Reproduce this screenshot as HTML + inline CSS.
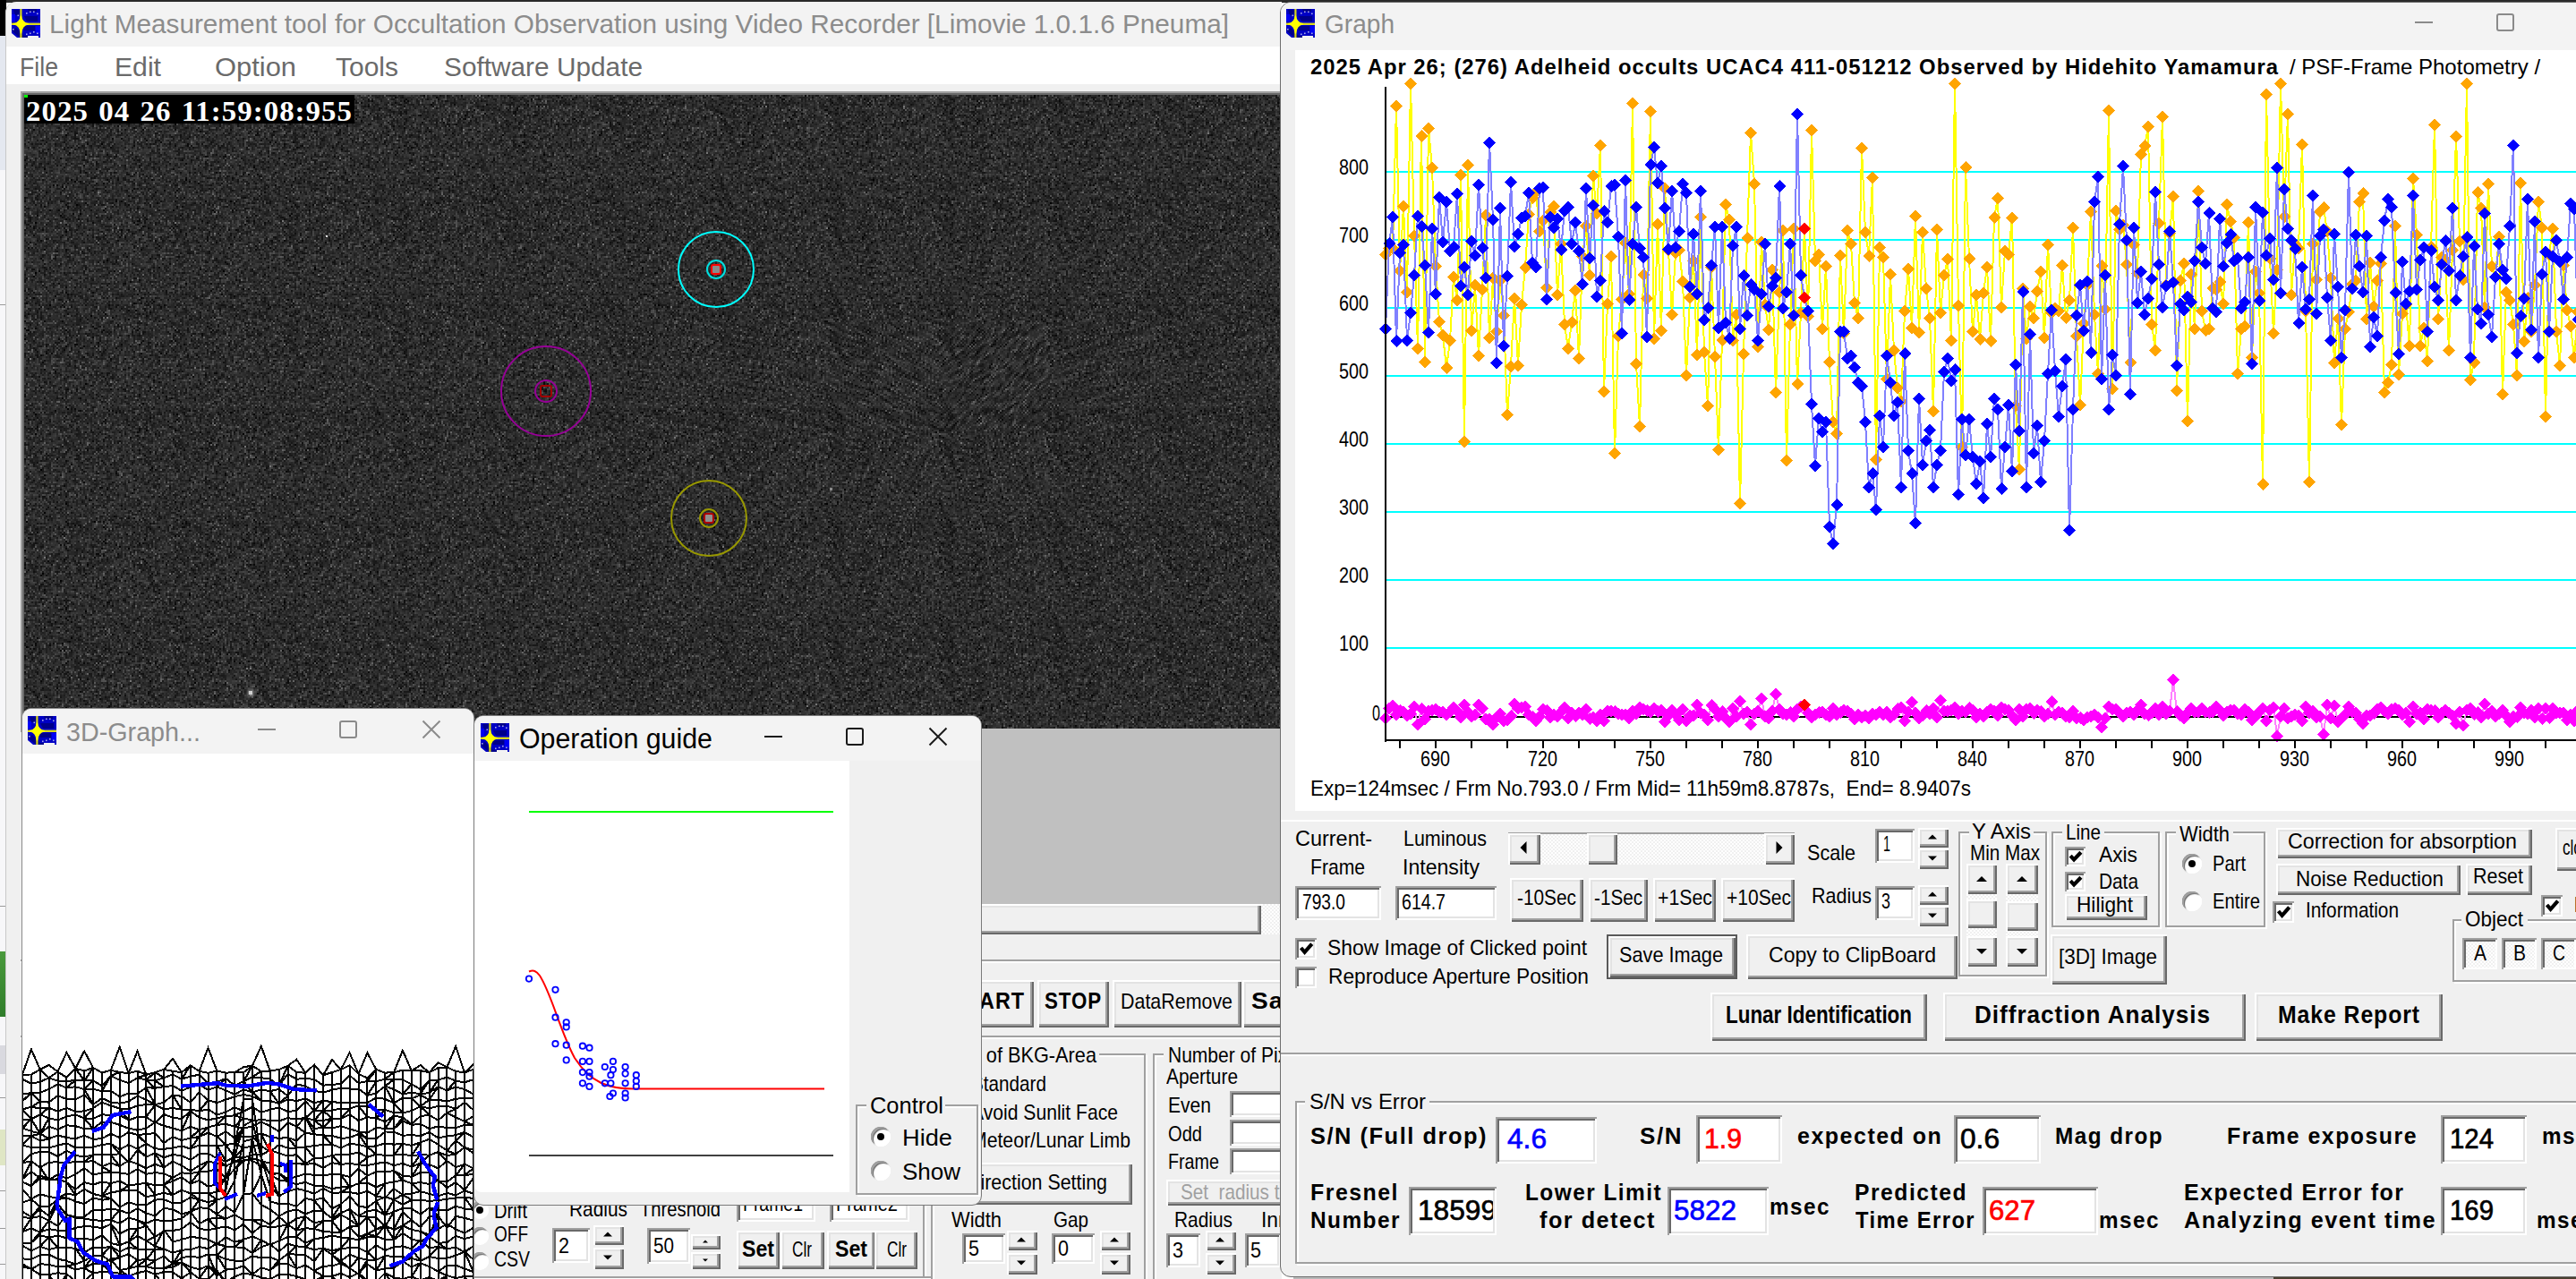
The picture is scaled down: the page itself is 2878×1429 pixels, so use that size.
<!DOCTYPE html>
<html lang="en"><head><meta charset="utf-8"><title>Limovie</title>
<style>
html,body{margin:0;padding:0}
body{width:2878px;height:1429px;overflow:hidden;position:relative;background:#fff;font-family:"Liberation Sans","Noto Sans CJK JP",sans-serif}
body *{position:absolute;box-sizing:border-box}
.t{white-space:pre;line-height:1;transform-origin:0 0;margin:0;padding:0}
.w{overflow:hidden}
</style></head>
<body>
<div style="left:0px;top:0px;width:2878px;height:3px;background:#2a2a2a;"></div>
<div style="left:0px;top:0px;width:7px;height:40px;background:#000;"></div>
<div style="left:0px;top:40px;width:7px;height:1389px;background:#f7f7f9;"></div>
<div style="left:0px;top:40px;width:7px;height:150px;background:#e4e8f0;"></div>
<div style="left:0px;top:1063px;width:6px;height:73px;background:linear-gradient(#4a9a3c,#2f7d2a);"></div>
<div style="left:0px;top:1168px;width:6px;height:32px;background:#d9d9df;"></div>
<div style="left:0px;top:1262px;width:6px;height:40px;background:#dfe6c4;"></div>
<div style="left:0px;top:340px;width:6px;height:1px;background:#9a9a9a;"></div>
<div style="left:0px;top:1012px;width:6px;height:1px;background:#9a9a9a;"></div>
<div style="left:0px;top:1226px;width:6px;height:1px;background:#9a9a9a;"></div>
<div style="left:0px;top:1330px;width:6px;height:1px;background:#9a9a9a;"></div>
<div style="left:0px;top:1372px;width:6px;height:1px;background:#9a9a9a;"></div>
<div style="left:0px;top:1412px;width:6px;height:1px;background:#9a9a9a;"></div>
<div style="left:6px;top:2px;width:1426px;height:1438px;background:#f0f0f0;border-radius:12px 0 0 0;border-left:1px solid #c8c8c8;"></div>
<div style="left:7px;top:3px;width:1425px;height:49px;background:#f3f3f3;border-radius:12px 0 0 0;"></div>
<div style="left:7px;top:52px;width:1425px;height:42px;background:#fff;"></div>
<svg style="left:13px;top:10px" width="32" height="32" viewBox="0 0 32 32"><rect width="32" height="32" fill="#0000c4"/><path d="M18 0h10v3h-9zM2 1h8l-2 6h-4zM14 8h15v6h-12zM0 24l9 8h14v-2h-9l-9-9zM12 19h14v5h-12z" fill="#00008a"/><path d="M0 6h4v8h-4zM27 19h5v8h-5z" fill="#0000f4"/><rect x="9.3" y="0" width="2.2" height="32" fill="#d4d418"/><rect x="0" y="15.6" width="32" height="2.4" fill="#d8d81c"/><path d="M10.4 8 Q11.3 15.4 18.5 16.8 Q11.3 18.2 10.4 27 Q9.5 18.2 2.5 16.8 Q9.5 15.4 10.4 8Z" fill="#ffff00" stroke="#ffff00" stroke-width="1.5" stroke-linejoin="round"/><g fill="#a8a8e8"><rect x="20" y="2.5" width="1.6" height="1.6"/><rect x="24" y="2.5" width="1.6" height="1.6"/><rect x="28" y="4.5" width="1.6" height="1.6"/><rect x="6.5" y="6.5" width="1.6" height="1.6"/><rect x="16" y="4" width="1.6" height="1.6"/><rect x="20" y="26.5" width="1.6" height="1.6"/><rect x="24" y="25" width="1.6" height="1.6"/><rect x="28" y="26.5" width="1.6" height="1.6"/><rect x="16" y="27.5" width="1.6" height="1.6"/><rect x="1" y="22" width="1.6" height="1.6"/></g><path d="M0 27l6 5h-6zM18 30h12v2h-12z" fill="#f3f3f3"/></svg>
<span id="t0" class="t" style="left:55px;top:12.0px;font-size:30px;color:#8c8c8c;transform:scaleX(0.9908);">Light Measurement tool for Occultation Observation using Video Recorder [Limovie 1.0.1.6 Pneuma]</span>
<span id="t1" class="t" style="left:22px;top:60.2px;font-size:30px;color:#6a6a6a;transform:scaleX(0.8895);">File</span>
<span id="t2" class="t" style="left:128px;top:60.2px;font-size:30px;color:#6a6a6a;transform:scaleX(1.0057);">Edit</span>
<span id="t3" class="t" style="left:240px;top:60.2px;font-size:30px;color:#6a6a6a;transform:scaleX(1.0295);">Option</span>
<span id="t4" class="t" style="left:375px;top:60.2px;font-size:30px;color:#6a6a6a;">Tools</span>
<span id="t5" class="t" style="left:496px;top:60.2px;font-size:30px;color:#6a6a6a;transform:scaleX(0.9934);">Software Update</span>
<div style="left:23px;top:102px;width:1413px;height:716px;background:#696969;box-shadow:inset 2px 2px 0 #a0a0a0;"></div>
<svg style="left:27px;top:106px" width="1408" height="708" viewBox="0 0 704 354" preserveAspectRatio="none" shape-rendering="crispEdges"><defs><pattern id="nz" width="64" height="64" patternUnits="userSpaceOnUse"><rect width="64" height="64" fill="#202020"/><g transform="translate(0 .5)" stroke-width="1" fill="none"><path d="M40 0h1M52 0h1M38 1h1M44 1h1M52 1h1M0 2h1M21 2h1M27 2h1M31 2h1M39 2h2M2 3h1M20 3h1M22 3h1M43 3h1M60 4h1M30 5h1M35 5h1M0 6h1M29 6h1M35 6h1M6 7h1M38 7h1M0 8h1M19 8h1M31 8h1M43 8h1M18 9h1M1 10h1M5 10h1M0 11h1M10 11h1M18 11h1M29 11h1M36 11h1M54 11h1M23 12h1M31 13h1M44 13h1M51 13h1M60 13h1M45 14h1M12 15h1M20 15h1M30 15h1M42 15h1M53 15h1M56 15h1M7 16h1M12 16h1M20 16h1M9 17h1M3 18h1M25 18h1M33 18h1M11 20h1M34 20h1M48 20h1M62 20h1M2 21h1M47 21h1M1 22h1M11 22h1M23 22h1M28 22h1M18 23h1M28 23h1M39 23h1M49 24h1M58 24h1M17 26h1M22 26h1M17 27h1M39 27h1M43 27h1M10 28h1M20 28h1M27 28h1M46 28h1M61 28h1M24 29h1M44 29h1M49 30h1M19 31h1M8 32h1M11 32h1M25 32h1M34 32h1M39 32h1M34 33h1M16 34h1M37 34h1M47 34h1M63 34h1M6 35h1M20 35h1M32 35h2M54 35h1M0 36h1M6 36h1M23 36h2M48 36h1M63 36h1M5 37h1M13 38h1M17 38h1M26 38h1M0 39h1M20 39h1M56 39h1M0 40h1M59 40h1M11 41h1M19 41h1M26 41h1M31 41h1M40 41h1M12 43h1M23 43h1M43 43h1M50 43h1M2 44h1M58 44h1M61 44h1M0 45h1M49 45h1M1 46h1M5 46h1M38 46h2M24 47h1M26 47h1M52 47h1M17 48h1M28 48h1M31 48h1M53 48h1M1 49h1M5 49h1M24 49h2M44 49h1M51 49h1M0 50h1M6 50h1M16 50h1M19 50h1M21 50h1M39 50h1M47 51h1M1 52h1M22 52h1M40 52h1M61 52h1M14 53h1M21 53h1M34 53h1M52 53h1M57 53h1M60 53h1M20 54h1M22 54h1M8 55h1M3 56h1M45 56h1M58 56h1M0 58h1M45 58h1M0 59h1M4 59h1M20 59h1M37 59h1M51 59h1M34 60h1M49 60h1M53 60h1M61 60h1M6 61h1M9 61h1M29 61h1M43 61h1M56 61h1M58 61h1M0 62h1M11 62h1M21 62h1M24 62h1M49 62h1M59 63h1" stroke="#020202"/><path d="M3 0h1M14 0h2M18 0h2M31 0h1M41 0h1M44 0h1M59 0h1M15 1h1M18 1h1M22 1h1M31 1h1M42 1h1M50 1h1M6 2h2M24 2h1M50 2h1M1 3h1M7 3h1M23 3h1M25 3h1M27 3h1M36 3h1M41 3h1M44 3h1M57 3h1M63 3h1M3 4h1M11 4h1M13 4h1M15 4h2M21 4h1M24 4h1M28 4h1M37 4h1M40 4h1M43 4h1M46 4h1M48 4h1M58 4h1M0 5h1M2 5h3M15 5h1M17 5h2M23 5h1M25 5h1M31 5h1M34 5h1M42 5h1M47 5h2M3 6h1M15 6h1M19 6h2M25 6h1M31 6h1M60 6h4M9 7h1M19 7h1M57 7h1M61 7h1M6 8h1M9 8h1M12 8h1M23 8h1M33 8h1M59 8h1M63 8h1M2 9h2M14 9h2M17 9h1M20 9h2M29 9h2M33 9h1M47 9h1M55 9h1M57 9h1M6 10h1M12 10h1M17 10h3M21 10h1M30 10h2M33 10h1M37 10h1M41 10h1M46 10h1M50 10h1M55 10h1M61 10h1M7 11h1M12 11h2M16 11h1M23 11h1M25 11h1M28 11h1M30 11h1M34 11h1M45 11h3M50 11h1M58 11h1M3 12h1M9 12h1M12 12h1M15 12h1M28 12h1M33 12h1M39 12h1M43 12h1M50 12h1M54 12h1M60 12h1M62 12h1M5 13h3M18 13h1M21 13h1M26 13h1M54 13h1M57 13h1M2 14h1M5 14h1M14 14h1M21 14h2M26 14h1M35 14h1M38 14h1M48 14h1M52 14h1M60 14h1M5 15h1M11 15h1M16 15h1M21 15h1M38 15h1M40 15h1M44 15h1M50 15h1M61 15h1M0 16h2M13 16h1M15 16h1M38 16h1M42 16h1M45 16h1M47 16h1M49 16h1M0 17h1M6 17h2M10 17h1M14 17h1M17 17h2M24 17h1M27 17h1M32 17h1M38 17h1M42 17h1M45 17h1M52 17h1M7 18h2M10 18h2M18 18h3M27 18h1M40 18h1M43 18h1M47 18h1M61 18h2M2 19h1M5 19h1M32 19h1M48 19h1M51 19h2M56 19h1M60 19h1M1 20h2M8 20h1M12 20h1M28 20h1M52 20h1M61 20h1M9 21h2M29 21h1M37 21h1M50 21h1M54 21h1M61 21h1M2 22h1M15 22h1M31 22h1M37 22h1M17 23h1M21 23h1M23 23h1M35 23h2M52 23h1M61 23h1M27 24h3M32 24h2M37 24h1M39 24h1M54 24h1M4 25h1M9 25h3M17 25h1M23 25h1M38 25h1M55 25h2M9 26h1M12 26h1M21 26h1M23 26h2M48 26h1M52 26h1M57 26h1M61 26h1M0 27h1M4 27h1M6 27h1M8 27h2M14 27h1M27 27h1M35 27h1M42 27h1M46 27h2M50 27h1M63 27h1M17 28h1M37 28h1M42 28h1M49 28h1M56 28h1M4 29h2M16 29h2M22 29h1M25 29h1M30 29h1M37 29h1M48 29h2M52 29h1M60 29h1M13 30h1M17 30h1M22 30h2M28 30h1M45 30h1M50 30h1M60 30h1M8 31h1M20 31h1M23 31h1M43 31h1M52 31h1M12 32h1M14 32h1M23 32h1M38 32h1M56 32h1M4 33h1M12 33h1M14 33h2M41 33h1M46 33h1M55 33h1M8 34h1M36 34h1M45 34h1M48 34h1M50 34h1M1 35h1M9 35h1M14 35h1M22 35h1M24 35h2M29 35h1M57 35h1M3 36h1M29 36h1M33 36h1M35 36h1M38 36h1M52 36h1M61 36h1M0 37h1M8 37h1M24 37h1M35 37h1M44 37h1M48 37h1M54 37h1M56 37h1M9 38h1M21 38h1M23 38h1M38 38h1M41 38h1M60 38h2M4 39h1M18 39h1M23 39h1M25 39h1M28 39h1M33 39h1M38 39h1M51 39h1M54 39h1M8 40h1M15 40h1M22 40h1M52 40h1M56 40h1M58 40h1M1 41h1M18 41h1M21 41h1M30 41h1M38 41h1M44 41h1M47 41h1M50 41h1M56 41h2M1 42h1M15 42h1M22 42h1M31 42h1M33 42h1M55 42h1M9 43h1M34 43h1M42 43h1M51 43h1M41 44h1M48 44h1M4 45h1M21 45h1M35 45h1M40 45h1M45 45h1M50 45h1M15 46h1M23 46h1M26 46h1M37 46h1M44 46h1M48 46h1M52 46h1M3 47h1M7 47h2M27 47h2M35 47h1M45 47h2M55 47h2M63 47h1M3 48h1M30 48h1M32 48h1M34 48h2M37 48h2M47 48h1M49 48h1M55 48h1M59 48h2M11 49h1M31 49h1M33 49h1M52 49h2M61 49h1M7 50h1M12 50h1M18 50h1M34 50h2M49 50h1M60 50h1M1 51h1M4 51h1M6 51h1M8 51h1M14 51h1M21 51h1M28 51h1M30 51h1M34 51h1M45 51h1M49 51h1M5 52h3M33 52h1M35 52h1M43 52h1M3 53h3M8 53h1M10 53h1M12 53h1M32 53h1M37 53h2M45 53h1M47 53h1M6 54h1M9 54h1M12 54h1M16 54h1M26 54h1M39 54h1M45 54h1M47 54h1M2 55h1M4 55h1M12 55h1M18 55h1M29 55h1M35 55h1M54 55h1M57 55h1M7 56h1M25 56h1M33 56h1M38 56h1M49 56h1M53 56h1M59 56h1M62 56h1M0 57h1M6 57h2M17 57h2M23 57h1M25 57h1M34 57h1M40 57h3M44 57h1M59 57h2M2 58h1M4 58h1M6 58h2M9 58h1M24 58h1M29 58h1M34 58h1M41 58h1M51 58h1M1 59h1M5 59h1M21 59h1M46 59h1M54 59h1M59 59h1M5 60h1M9 60h2M30 60h2M38 60h2M42 60h1M56 60h1M63 60h1M13 61h1M23 61h1M30 61h1M33 61h1M35 61h1M45 61h1M50 61h1M53 61h1M25 62h1M31 62h1M40 62h1M47 62h1M63 62h1M1 63h1M10 63h1M32 63h1M34 63h2M38 63h1M51 63h1M61 63h1M63 63h1" stroke="#121212"/><path d="M0 0h3M5 0h1M7 0h2M13 0h1M17 0h1M21 0h3M28 0h1M38 0h1M47 0h1M49 0h2M55 0h1M58 0h1M61 0h1M6 1h1M10 1h1M12 1h2M20 1h2M23 1h1M26 1h1M28 1h1M37 1h1M40 1h1M45 1h1M47 1h2M54 1h1M59 1h1M63 1h1M4 2h2M8 2h1M14 2h2M18 2h2M22 2h2M29 2h1M32 2h1M34 2h1M44 2h1M53 2h1M63 2h1M3 3h1M8 3h3M14 3h2M19 3h1M28 3h1M32 3h1M34 3h1M47 3h1M49 3h3M53 3h1M55 3h2M59 3h1M62 3h1M4 4h1M6 4h2M14 4h1M17 4h1M26 4h1M30 4h1M39 4h1M42 4h1M44 4h1M49 4h5M55 4h1M61 4h1M5 5h1M10 5h1M16 5h1M20 5h1M22 5h1M27 5h3M32 5h2M45 5h1M50 5h1M52 5h1M54 5h1M61 5h2M1 6h2M4 6h1M7 6h1M14 6h1M17 6h1M21 6h1M37 6h2M48 6h1M51 6h1M53 6h2M57 6h1M2 7h1M4 7h1M11 7h1M17 7h1M21 7h1M33 7h3M40 7h1M44 7h1M46 7h1M52 7h2M56 7h1M63 7h1M1 8h1M7 8h1M10 8h1M13 8h1M18 8h1M26 8h1M34 8h1M36 8h2M40 8h1M45 8h2M54 8h1M57 8h1M1 9h1M4 9h1M12 9h1M16 9h1M23 9h1M25 9h1M34 9h2M38 9h1M44 9h2M4 10h1M14 10h1M26 10h2M29 10h1M34 10h2M40 10h1M42 10h2M53 10h2M56 10h2M62 10h1M2 11h1M9 11h1M20 11h2M24 11h1M32 11h1M39 11h1M48 11h1M53 11h1M63 11h1M5 12h1M7 12h1M19 12h2M22 12h1M26 12h1M32 12h1M34 12h2M42 12h1M44 12h1M46 12h1M52 12h2M55 12h1M58 12h1M0 13h1M14 13h1M24 13h1M34 13h1M48 13h1M52 13h1M59 13h1M61 13h3M0 14h1M8 14h1M12 14h1M16 14h2M20 14h1M23 14h2M32 14h1M34 14h1M37 14h1M41 14h1M44 14h1M47 14h1M56 14h1M62 14h2M13 15h2M22 15h1M24 15h1M26 15h1M31 15h1M33 15h1M35 15h1M41 15h1M43 15h1M46 15h1M51 15h1M57 15h3M2 16h1M8 16h1M10 16h1M23 16h1M25 16h1M31 16h1M34 16h1M37 16h1M40 16h1M43 16h1M46 16h1M50 16h3M59 16h1M61 16h1M2 17h1M15 17h2M29 17h1M36 17h1M41 17h1M44 17h1M46 17h2M51 17h1M54 17h1M58 17h1M60 17h1M63 17h1M4 18h1M17 18h1M28 18h3M32 18h1M36 18h1M38 18h2M42 18h1M44 18h1M57 18h2M4 19h1M7 19h1M9 19h1M15 19h1M17 19h1M27 19h3M31 19h1M34 19h1M39 19h1M42 19h1M0 20h1M13 20h2M18 20h1M22 20h2M33 20h1M39 20h1M43 20h1M49 20h1M55 20h1M8 21h1M11 21h2M18 21h1M22 21h1M24 21h2M30 21h2M35 21h1M38 21h1M41 21h1M51 21h2M58 21h2M62 21h1M7 22h1M9 22h1M13 22h1M18 22h2M35 22h1M41 22h1M50 22h1M52 22h1M55 22h2M60 22h1M62 22h1M3 23h1M12 23h1M16 23h1M19 23h1M22 23h1M24 23h1M26 23h1M30 23h1M38 23h1M45 23h2M48 23h1M51 23h1M53 23h1M56 23h1M58 23h1M0 24h3M19 24h1M21 24h1M26 24h1M41 24h1M43 24h2M59 24h1M0 25h1M3 25h1M5 25h1M7 25h2M12 25h2M15 25h1M19 25h1M22 25h1M25 25h1M28 25h1M37 25h1M42 25h1M47 25h1M49 25h1M51 25h3M57 25h2M61 25h1M7 26h2M10 26h1M14 26h1M26 26h1M35 26h2M42 26h2M50 26h1M54 26h1M60 26h1M1 27h1M3 27h1M5 27h1M31 27h2M37 27h2M40 27h1M52 27h1M57 27h1M60 27h2M0 28h1M5 28h1M19 28h1M23 28h1M31 28h1M38 28h1M40 28h1M43 28h1M45 28h1M53 28h1M58 28h1M63 28h1M0 29h2M3 29h1M10 29h1M19 29h2M31 29h1M36 29h1M47 29h1M53 29h4M61 29h1M63 29h1M0 30h1M5 30h1M10 30h1M12 30h1M14 30h1M21 30h1M26 30h1M30 30h2M36 30h2M40 30h1M44 30h1M46 30h1M48 30h1M54 30h1M58 30h2M0 31h1M3 31h2M7 31h1M13 31h1M16 31h2M22 31h1M24 31h1M27 31h1M37 31h2M40 31h2M45 31h1M47 31h1M51 31h1M56 31h2M60 31h1M63 31h1M4 32h1M7 32h1M9 32h1M15 32h1M19 32h2M22 32h1M24 32h1M31 32h2M41 32h1M43 32h2M52 32h1M2 33h2M8 33h1M17 33h1M20 33h1M24 33h1M39 33h1M47 33h3M51 33h2M54 33h1M62 33h1M1 34h1M4 34h3M13 34h2M22 34h1M31 34h1M41 34h1M44 34h1M46 34h1M49 34h1M10 35h2M13 35h1M15 35h1M19 35h1M21 35h1M26 35h1M30 35h2M36 35h1M42 35h1M44 35h1M46 35h1M53 35h1M1 36h1M8 36h1M17 36h1M22 36h1M28 36h1M30 36h1M43 36h1M45 36h1M62 36h1M2 37h1M6 37h2M9 37h1M14 37h1M18 37h3M23 37h1M25 37h2M28 37h1M31 37h1M36 37h1M38 37h2M41 37h2M45 37h1M49 37h1M53 37h1M55 37h1M57 37h1M61 37h3M0 38h1M3 38h3M11 38h2M18 38h2M25 38h1M31 38h1M34 38h1M43 38h1M46 38h1M48 38h1M51 38h1M59 38h1M5 39h2M11 39h1M16 39h1M19 39h1M24 39h1M32 39h1M36 39h2M39 39h1M45 39h1M59 39h1M61 39h3M6 40h1M10 40h1M14 40h1M21 40h1M23 40h1M26 40h1M28 40h2M34 40h2M38 40h1M44 40h1M46 40h1M48 40h1M54 40h2M0 41h1M4 41h2M7 41h3M27 41h1M29 41h1M34 41h1M42 41h2M45 41h1M51 41h1M53 41h1M2 42h1M5 42h5M11 42h1M14 42h1M24 42h2M27 42h1M35 42h1M39 42h1M42 42h1M50 42h1M58 42h2M62 42h1M1 43h1M3 43h1M5 43h2M8 43h1M13 43h1M20 43h1M24 43h2M29 43h2M35 43h1M48 43h1M52 43h1M54 43h2M57 43h1M59 43h1M63 43h1M0 44h2M3 44h1M15 44h2M18 44h1M26 44h1M35 44h1M45 44h2M50 44h1M2 45h1M6 45h1M10 45h1M16 45h1M24 45h4M36 45h1M39 45h1M42 45h1M46 45h1M52 45h1M54 45h1M56 45h3M60 45h3M0 46h1M10 46h1M12 46h2M17 46h2M20 46h2M27 46h3M40 46h1M45 46h1M49 46h3M54 46h3M58 46h1M60 46h2M1 47h1M5 47h1M9 47h1M12 47h3M20 47h2M23 47h1M36 47h3M42 47h1M44 47h1M48 47h2M54 47h1M57 47h1M60 47h1M1 48h1M4 48h1M6 48h1M20 48h1M25 48h1M27 48h1M0 49h1M7 49h1M15 49h3M20 49h1M28 49h1M34 49h1M36 49h1M45 49h1M49 49h2M63 49h1M1 50h1M5 50h1M9 50h3M14 50h2M32 50h1M38 50h1M41 50h2M51 50h1M54 50h2M61 50h1M0 51h1M2 51h2M5 51h1M12 51h1M31 51h3M35 51h3M48 51h1M55 51h3M60 51h2M2 52h1M14 52h1M20 52h1M25 52h1M27 52h1M30 52h2M36 52h2M44 52h3M50 52h3M54 52h4M9 53h1M13 53h1M15 53h1M18 53h1M20 53h1M25 53h1M29 53h2M39 53h1M42 53h1M49 53h1M53 53h3M62 53h2M0 54h2M8 54h1M11 54h1M13 54h1M24 54h1M27 54h1M31 54h1M33 54h2M38 54h1M42 54h2M46 54h1M48 54h2M55 54h3M59 54h2M7 55h1M11 55h1M14 55h2M17 55h1M20 55h1M25 55h1M30 55h1M33 55h2M37 55h2M44 55h1M47 55h1M51 55h1M56 55h1M59 55h2M11 56h1M13 56h1M20 56h1M22 56h2M26 56h2M29 56h1M41 56h1M48 56h1M51 56h1M60 56h2M1 57h1M3 57h1M5 57h1M8 57h2M14 57h2M20 57h1M22 57h1M24 57h1M28 57h1M32 57h1M37 57h1M48 57h2M56 57h1M63 57h1M5 58h1M12 58h1M16 58h1M18 58h2M23 58h1M27 58h1M31 58h3M39 58h1M43 58h2M46 58h2M56 58h3M61 58h1M63 58h1M3 59h1M14 59h1M16 59h3M33 59h2M38 59h1M40 59h1M45 59h1M47 59h4M52 59h1M58 59h1M61 59h1M11 60h1M17 60h2M22 60h1M25 60h1M28 60h2M32 60h1M36 60h1M48 60h1M51 60h1M55 60h1M57 60h1M10 61h1M18 61h1M24 61h1M32 61h1M36 61h3M46 61h1M51 61h1M55 61h1M57 61h1M60 61h1M3 62h1M5 62h1M9 62h1M12 62h3M17 62h1M19 62h1M22 62h2M27 62h1M30 62h1M34 62h2M37 62h1M41 62h3M46 62h1M54 62h1M56 62h1M61 62h2M3 63h2M12 63h1M16 63h1M20 63h3M26 63h2M29 63h2M40 63h2M46 63h1M49 63h1M60 63h1" stroke="#2c2c2c"/><path d="M6 0h1M16 0h1M20 0h1M25 0h2M34 0h1M39 0h1M42 0h2M45 0h2M53 0h1M57 0h1M1 1h4M11 1h1M24 1h2M27 1h1M29 1h1M36 1h1M39 1h1M46 1h1M49 1h1M55 1h1M3 2h1M9 2h2M16 2h1M20 2h1M25 2h1M30 2h1M45 2h1M47 2h1M57 2h4M62 2h1M4 3h3M12 3h1M16 3h2M21 3h1M26 3h1M33 3h1M38 3h1M52 3h1M54 3h1M61 3h1M0 4h2M8 4h1M12 4h1M25 4h1M31 4h2M34 4h2M38 4h1M45 4h1M54 4h1M56 4h1M7 5h2M19 5h1M39 5h1M44 5h1M49 5h1M51 5h1M55 5h1M58 5h2M63 5h1M6 6h1M9 6h1M11 6h1M18 6h1M22 6h2M26 6h1M28 6h1M32 6h2M44 6h1M47 6h1M52 6h1M55 6h2M5 7h1M8 7h1M16 7h1M25 7h1M27 7h4M41 7h1M47 7h1M50 7h2M55 7h1M58 7h1M60 7h1M62 7h1M8 8h1M11 8h1M17 8h1M24 8h1M28 8h1M30 8h1M35 8h1M41 8h1M44 8h1M52 8h1M55 8h1M61 8h2M7 9h4M19 9h1M22 9h1M24 9h1M27 9h2M32 9h1M37 9h1M39 9h3M43 9h1M49 9h1M52 9h1M54 9h1M59 9h2M63 9h1M2 10h2M7 10h1M15 10h2M20 10h1M24 10h1M32 10h1M36 10h1M38 10h1M44 10h2M47 10h3M58 10h1M4 11h1M6 11h1M8 11h1M14 11h2M22 11h1M27 11h1M33 11h1M35 11h1M37 11h1M40 11h1M42 11h1M51 11h2M56 11h1M60 11h1M62 11h1M1 12h1M16 12h1M21 12h1M25 12h1M27 12h1M29 12h3M36 12h1M38 12h1M40 12h1M45 12h1M57 12h1M63 12h1M1 13h1M10 13h2M13 13h1M15 13h1M17 13h1M19 13h1M25 13h1M28 13h3M35 13h2M43 13h1M45 13h2M55 13h1M58 13h1M1 14h1M9 14h2M15 14h1M27 14h5M33 14h1M36 14h1M39 14h1M43 14h1M46 14h1M49 14h1M53 14h1M1 15h1M4 15h1M17 15h1M23 15h1M28 15h1M34 15h1M36 15h1M39 15h1M45 15h1M48 15h2M52 15h1M54 15h1M6 16h1M9 16h1M11 16h1M14 16h1M16 16h1M18 16h2M22 16h1M28 16h1M32 16h1M53 16h2M60 16h1M62 16h1M1 17h1M3 17h3M8 17h1M20 17h1M25 17h1M28 17h1M30 17h1M35 17h1M39 17h2M53 17h1M59 17h1M61 17h1M2 18h1M5 18h2M15 18h1M24 18h1M31 18h1M34 18h2M49 18h1M63 18h1M0 19h2M11 19h3M18 19h2M22 19h1M26 19h1M30 19h1M33 19h1M46 19h2M50 19h1M54 19h1M58 19h1M61 19h1M63 19h1M3 20h1M6 20h1M10 20h1M16 20h1M24 20h2M31 20h1M37 20h2M40 20h1M42 20h1M44 20h2M47 20h1M56 20h2M59 20h1M0 21h2M3 21h1M7 21h1M13 21h3M17 21h1M19 21h1M26 21h2M34 21h1M39 21h2M42 21h3M46 21h1M49 21h1M56 21h2M60 21h1M4 22h1M6 22h1M12 22h1M14 22h1M16 22h1M20 22h1M26 22h2M32 22h1M34 22h1M39 22h2M42 22h1M44 22h2M49 22h1M51 22h1M58 22h1M1 23h2M4 23h1M8 23h1M14 23h1M20 23h1M29 23h1M33 23h2M37 23h1M40 23h2M43 23h2M57 23h1M60 23h1M63 23h1M8 24h1M10 24h1M13 24h1M17 24h1M20 24h1M22 24h1M25 24h1M34 24h1M40 24h1M46 24h1M48 24h1M50 24h4M55 24h1M57 24h1M61 24h1M63 24h1M1 25h1M6 25h1M14 25h1M20 25h1M24 25h1M26 25h1M33 25h1M35 25h1M43 25h4M50 25h1M54 25h1M1 26h1M3 26h1M5 26h2M13 26h1M19 26h1M27 26h2M30 26h1M32 26h3M37 26h2M45 26h1M58 26h1M15 27h1M21 27h2M24 27h2M30 27h1M34 27h1M44 27h1M48 27h1M53 27h3M59 27h1M2 28h3M7 28h1M11 28h1M14 28h1M24 28h1M50 28h1M52 28h1M57 28h1M60 28h1M62 28h1M12 29h2M15 29h1M23 29h1M27 29h1M29 29h1M34 29h1M40 29h1M43 29h1M50 29h1M57 29h3M2 30h1M6 30h3M15 30h2M18 30h1M32 30h1M34 30h1M39 30h1M47 30h1M51 30h1M53 30h1M55 30h2M1 31h2M9 31h1M12 31h1M14 31h1M18 31h1M30 31h3M39 31h1M44 31h1M54 31h1M59 31h1M61 31h1M0 32h1M5 32h2M17 32h2M21 32h1M29 32h2M33 32h1M35 32h2M42 32h1M45 32h1M47 32h1M49 32h1M51 32h1M53 32h3M59 32h1M62 32h1M7 33h1M13 33h1M18 33h2M21 33h1M27 33h2M30 33h4M45 33h1M56 33h1M58 33h1M3 34h1M9 34h1M21 34h1M24 34h1M34 34h2M39 34h1M43 34h1M59 34h3M5 35h1M7 35h1M17 35h1M35 35h1M41 35h1M43 35h1M49 35h1M56 35h1M59 35h1M61 35h1M63 35h1M4 36h1M9 36h2M12 36h2M18 36h1M20 36h2M25 36h1M31 36h1M39 36h1M41 36h1M47 36h1M51 36h1M53 36h1M60 36h1M1 37h1M10 37h1M12 37h1M21 37h1M27 37h1M43 37h1M46 37h2M51 37h2M60 37h1M7 38h1M15 38h2M20 38h1M22 38h1M24 38h1M27 38h3M32 38h1M36 38h1M42 38h1M47 38h1M52 38h7M2 39h2M7 39h2M10 39h1M13 39h1M22 39h1M27 39h1M35 39h1M46 39h2M49 39h2M53 39h1M1 40h3M5 40h1M12 40h2M16 40h5M27 40h1M32 40h1M40 40h1M42 40h1M53 40h1M57 40h1M60 40h1M10 41h1M13 41h2M20 41h1M23 41h1M25 41h1M32 41h2M41 41h1M48 41h2M52 41h1M54 41h1M59 41h1M61 41h1M63 41h1M0 42h1M4 42h1M12 42h2M18 42h1M23 42h1M26 42h1M28 42h3M36 42h1M38 42h1M40 42h2M44 42h1M49 42h1M52 42h1M54 42h1M56 42h1M61 42h1M2 43h1M4 43h1M7 43h1M17 43h1M22 43h1M26 43h2M32 43h1M38 43h1M47 43h1M49 43h1M53 43h1M7 44h1M9 44h1M13 44h1M17 44h1M20 44h1M25 44h1M29 44h1M32 44h1M34 44h1M38 44h2M49 44h1M51 44h2M55 44h1M59 44h2M62 44h2M5 45h1M7 45h1M9 45h1M14 45h1M17 45h1M19 45h2M22 45h2M28 45h1M30 45h1M32 45h3M38 45h1M43 45h2M48 45h1M51 45h1M2 46h1M4 46h1M6 46h2M11 46h1M16 46h1M19 46h1M25 46h1M32 46h4M53 46h1M59 46h1M63 46h1M0 47h1M16 47h2M22 47h1M31 47h1M34 47h1M41 47h1M47 47h1M53 47h1M62 47h1M2 48h1M10 48h2M13 48h1M21 48h1M41 48h2M45 48h1M50 48h1M56 48h1M61 48h3M3 49h1M8 49h1M12 49h1M18 49h1M23 49h1M27 49h1M29 49h2M35 49h1M38 49h1M42 49h1M47 49h2M54 49h1M56 49h1M58 49h1M62 49h1M3 50h1M13 50h1M22 50h1M24 50h1M28 50h1M36 50h1M46 50h1M52 50h2M59 50h1M9 51h2M15 51h1M18 51h3M39 51h1M41 51h4M46 51h1M52 51h2M58 51h2M62 51h2M4 52h1M9 52h4M16 52h2M23 52h1M26 52h1M29 52h1M38 52h1M42 52h1M48 52h2M60 52h1M16 53h2M24 53h1M27 53h1M43 53h2M61 53h1M2 54h1M5 54h1M7 54h1M18 54h2M29 54h1M35 54h1M37 54h1M53 54h2M0 55h1M5 55h2M16 55h1M19 55h1M23 55h1M27 55h2M31 55h2M36 55h1M46 55h1M58 55h1M62 55h2M0 56h1M2 56h1M4 56h1M9 56h1M18 56h2M21 56h1M24 56h1M32 56h1M39 56h2M46 56h1M56 56h1M11 57h1M16 57h1M27 57h1M29 57h1M35 57h1M38 57h1M43 57h1M47 57h1M50 57h1M52 57h1M54 57h1M8 58h1M10 58h2M17 58h1M21 58h1M25 58h2M30 58h1M40 58h1M42 58h1M49 58h2M52 58h2M59 58h1M8 59h1M11 59h1M15 59h1M23 59h1M27 59h1M35 59h2M41 59h1M44 59h1M55 59h1M60 59h1M2 60h1M14 60h1M19 60h1M21 60h1M27 60h1M41 60h1M45 60h1M47 60h1M52 60h1M54 60h1M58 60h2M3 61h1M7 61h2M11 61h2M15 61h3M19 61h3M25 61h3M34 61h1M47 61h1M52 61h1M54 61h1M63 61h1M2 62h1M10 62h1M15 62h1M18 62h1M20 62h1M26 62h1M28 62h1M52 62h2M55 62h1M59 62h2M5 63h2M8 63h2M13 63h1M15 63h1M17 63h1M25 63h1M37 63h1M42 63h1M50 63h1M52 63h1M54 63h2M57 63h1M62 63h1" stroke="#3a3a3a"/><path d="M32 0h1M35 0h1M48 0h1M51 0h1M14 1h1M32 1h1M35 1h1M43 1h1M57 1h1M61 1h1M1 2h1M26 2h1M28 2h1M35 2h2M38 2h1M41 2h3M55 2h1M13 3h1M29 3h1M40 3h1M42 3h1M58 3h1M18 4h2M23 4h1M33 4h1M11 5h1M26 5h1M56 5h2M13 6h1M34 6h1M49 6h1M59 6h1M12 7h1M14 7h1M36 7h1M43 7h1M49 7h1M54 7h1M16 8h1M27 8h1M32 8h1M47 8h1M49 8h1M51 8h1M53 8h1M56 8h1M60 8h1M0 9h1M26 9h1M50 9h1M62 9h1M9 10h1M11 10h1M13 10h1M23 10h1M39 10h1M59 10h2M19 11h1M43 11h2M59 11h1M61 11h1M2 12h1M18 12h1M37 12h1M48 12h2M51 12h1M2 13h1M8 13h2M12 13h1M27 13h1M33 13h1M47 13h1M4 14h1M11 14h1M25 14h1M55 14h1M58 14h1M61 14h1M0 15h1M2 15h2M10 15h1M19 15h1M27 15h1M29 15h1M32 15h1M37 15h1M47 15h1M55 15h1M62 15h2M3 16h3M17 16h1M39 16h1M63 16h1M11 17h2M23 17h1M33 17h2M48 17h2M23 18h1M45 18h1M48 18h1M53 18h4M59 18h1M16 19h1M21 19h1M36 19h3M62 19h1M7 20h1M9 20h1M17 20h1M30 20h1M41 20h1M50 20h1M53 20h2M60 20h1M63 20h1M5 21h1M16 21h1M20 21h1M32 21h2M45 21h1M0 22h1M8 22h1M30 22h1M38 22h1M59 22h1M49 23h2M54 23h2M59 23h1M6 24h1M9 24h1M11 24h1M14 24h1M18 24h1M36 24h1M42 24h1M60 24h1M62 24h1M21 25h1M27 25h1M29 25h1M32 25h1M36 25h1M59 25h2M63 25h1M0 26h1M4 26h1M16 26h1M18 26h1M29 26h1M31 26h1M46 26h1M53 26h1M59 26h1M62 26h1M2 27h1M10 27h1M12 27h1M29 27h1M36 27h1M41 27h1M45 27h1M8 28h2M12 28h1M16 28h1M22 28h1M28 28h1M34 28h1M48 28h1M55 28h1M59 28h1M9 29h1M11 29h1M21 29h1M35 29h1M39 29h1M42 29h1M62 29h1M1 30h1M3 30h2M9 30h1M25 30h1M27 30h1M35 30h1M41 30h1M43 30h1M62 30h1M5 31h2M11 31h1M26 31h1M35 31h1M46 31h1M48 31h1M55 31h1M13 32h1M37 32h1M63 32h1M9 33h1M16 33h1M23 33h1M26 33h1M29 33h1M40 33h1M44 33h1M57 33h1M2 34h1M7 34h1M20 34h1M23 34h1M26 34h1M28 34h1M56 34h1M3 35h2M8 35h1M12 35h1M34 35h1M37 35h4M45 35h1M51 35h2M55 35h1M5 36h1M7 36h1M15 36h2M27 36h1M37 36h1M40 36h1M50 36h1M57 36h1M17 37h1M22 37h1M30 37h1M32 37h2M2 38h1M33 38h1M63 38h1M26 39h1M30 39h2M34 39h1M43 39h1M48 39h1M57 39h2M60 39h1M24 40h1M39 40h1M47 40h1M51 40h1M12 41h1M22 41h1M24 41h1M19 42h1M43 42h1M45 42h1M53 42h1M57 42h1M10 43h1M15 43h1M36 43h1M40 43h1M46 43h1M60 43h1M5 44h1M8 44h1M21 44h2M24 44h1M27 44h1M31 44h1M37 44h1M44 44h1M56 44h1M8 45h1M12 45h1M18 45h1M41 45h1M53 45h1M55 45h1M9 46h1M22 46h1M43 46h1M47 46h1M39 47h1M43 47h1M7 48h3M14 48h1M18 48h1M29 48h1M39 48h2M44 48h1M46 48h1M13 49h1M37 49h1M39 49h1M57 49h1M59 49h1M2 50h1M23 50h1M26 50h1M29 50h1M43 50h1M48 50h1M50 50h1M58 50h1M62 50h1M17 51h1M24 51h1M15 52h1M21 52h1M28 52h1M53 52h1M59 52h1M1 53h1M7 53h1M31 53h1M33 53h1M41 53h1M50 53h1M58 53h2M3 54h1M10 54h1M15 54h1M21 54h1M30 54h1M63 54h1M1 55h1M10 55h1M21 55h1M1 56h1M5 56h1M12 56h1M17 56h1M28 56h1M30 56h2M34 56h3M44 56h1M54 56h1M13 57h1M36 57h1M51 57h1M53 57h1M62 57h1M13 58h1M15 58h1M28 58h1M38 58h1M2 59h1M6 59h1M24 59h1M57 59h1M62 59h1M35 60h1M0 61h3M22 61h1M40 61h1M42 61h1M48 61h2M59 61h1M61 61h2M1 62h1M4 62h1M7 62h1M16 62h1M39 62h1M45 62h1M50 62h1M11 63h1M14 63h1M44 63h1M56 63h1M58 63h1" stroke="#505050"/><path d="M9 0h1M60 0h1M62 0h1M0 1h1M30 1h1M58 1h1M11 2h1M49 2h1M35 3h1M29 4h1M59 4h1M1 5h1M12 6h1M16 6h1M30 6h1M43 6h1M20 7h1M22 7h1M45 7h1M48 7h1M59 7h1M39 8h1M0 10h1M28 10h1M52 10h1M63 10h1M17 11h1M49 11h1M42 13h1M56 13h1M40 14h1M42 14h1M9 15h1M26 16h1M41 18h1M3 19h1M53 19h1M21 20h1M58 20h1M21 21h1M36 21h1M53 21h1M29 22h1M61 22h1M11 23h1M31 23h1M16 24h1M31 24h1M34 25h1M15 26h1M30 28h1M19 30h1M57 30h1M25 31h1M28 31h1M40 32h1M48 32h1M61 32h1M0 33h1M37 33h1M50 33h1M53 34h1M48 35h1M2 36h1M36 36h1M39 38h1M49 38h1M44 39h1M25 40h1M62 41h1M47 42h1M18 43h2M41 43h1M61 43h1M33 44h1M47 44h1M1 45h1M63 45h1M36 46h1M40 47h1M33 48h1M48 48h1M17 50h1M11 51h1M22 51h1M24 52h1M23 54h1M25 54h1M41 54h1M22 55h1M41 55h1M42 56h1M47 56h1M31 57h1M46 57h1M55 57h1M19 59h1M25 59h1M32 59h1M6 60h1M12 60h1M44 60h1M46 60h1M44 62h1M23 63h1M43 63h1" stroke="#767676"/></g></pattern><pattern id="nz2" href="#nz" width="61" height="59" patternTransform="translate(23 11)"/></defs><rect width="704" height="354" fill="url(#nz)"/><rect width="704" height="354" fill="url(#nz2)" opacity=".5"/></svg>
<div style="left:278px;top:772px;width:4px;height:4px;background:#d0d0d0;box-shadow:0 0 3px 2px rgba(200,200,200,.45);"></div>
<div style="left:364px;top:263px;width:2px;height:2px;background:#e8e8e8;"></div>
<div style="left:927px;top:545px;width:3px;height:3px;background:#8c8c8c;"></div>
<div style="left:757px;top:258px;width:86px;height:86px;border:2px solid #00ffff;border-radius:50%;"></div>
<div style="left:789px;top:290px;width:22px;height:22px;border:2px solid #00e0e0;border-radius:50%;"></div>
<div style="left:794px;top:295px;width:12px;height:12px;border:2px solid #ff0000;border-radius:3px;background:#8a8a8a;"></div>
<div style="left:559px;top:386px;width:102px;height:102px;border:2px solid #960096;border-radius:50%;"></div>
<div style="left:597px;top:424px;width:26px;height:26px;border:2px solid #960096;border-radius:50%;"></div>
<div style="left:603px;top:430px;width:14px;height:14px;border:2px solid #a00000;border-radius:3px;"></div>
<div style="left:749px;top:536px;width:86px;height:86px;border:2px solid #989800;border-radius:50%;"></div>
<div style="left:781px;top:568px;width:22px;height:22px;border:2px solid #989800;border-radius:50%;"></div>
<div style="left:786px;top:573px;width:12px;height:12px;border:2px solid #b00000;border-radius:3px;background:#909090;"></div>
<div style="left:27px;top:106px;width:369px;height:32px;background:#000;"></div>
<div style="left:27px;top:106px;width:4px;height:3px;background:#00ff00;"></div>
<span id="t6" class="t" style="left:29px;top:107.8px;font-size:32px;color:#fff;font-weight:bold;font-family:'Liberation Serif','Noto Serif CJK SC',serif;transform:scaleX(1.0276);word-spacing:2px;letter-spacing:1px;">2025 04 26 11:59:08:955</span>
<div style="left:27px;top:814px;width:1405px;height:196px;background:#c0c0c0;"></div>
<div style="left:27px;top:1010px;width:1405px;height:34px;background:repeating-conic-gradient(#fff 0 25%,#f0f0f0 0 50%) 0 0/4px 4px;"></div>
<div style="left:27px;top:1010px;width:1382px;height:34px;background:#f0f0f0;box-shadow:inset 2px 2px 0 #fff,inset -2px -2px 0 #696969,inset -4px -4px 0 #a0a0a0,inset 4px 4px 0 #e3e3e3;"></div>
<div style="left:23px;top:1072px;width:1409px;height:2px;background:#a0a0a0;"></div>
<div style="left:23px;top:1074px;width:1409px;height:2px;background:#fff;"></div>
<div style="left:1070px;top:1095px;width:85px;height:53px;background:#f0f0f0;box-shadow:inset 2px 2px 0 #fff,inset -2px -2px 0 #696969,inset -4px -4px 0 #a0a0a0,inset 4px 4px 0 #e3e3e3;"></div>
<span id="t7" class="t" style="left:1064px;top:1106.3px;font-size:25px;color:#000;font-weight:bold;transform:scaleX(0.9366);letter-spacing:1px;">START</span>
<div style="left:1159px;top:1095px;width:80px;height:53px;background:#f0f0f0;box-shadow:inset 2px 2px 0 #fff,inset -2px -2px 0 #696969,inset -4px -4px 0 #a0a0a0,inset 4px 4px 0 #e3e3e3;"></div>
<span id="t8" class="t" style="left:1167px;top:1106.3px;font-size:25px;color:#000;font-weight:bold;transform:scaleX(0.8935);letter-spacing:1px;">STOP</span>
<div style="left:1243px;top:1095px;width:144px;height:53px;background:#f0f0f0;box-shadow:inset 2px 2px 0 #fff,inset -2px -2px 0 #696969,inset -4px -4px 0 #a0a0a0,inset 4px 4px 0 #e3e3e3;"></div>
<span id="t9" class="t" style="left:1252px;top:1107.2px;font-size:24px;color:#000;transform:scaleX(0.8925);">DataRemove</span>
<div style="left:1388px;top:1095px;width:112px;height:53px;background:#f0f0f0;box-shadow:inset 2px 2px 0 #fff,inset -2px -2px 0 #696969,inset -4px -4px 0 #a0a0a0,inset 4px 4px 0 #e3e3e3;"></div>
<span id="t10" class="t" style="left:1398px;top:1106.3px;font-size:25px;color:#000;font-weight:bold;transform:scaleX(1.1220);letter-spacing:1px;">Save</span>
<div style="left:23px;top:1157px;width:1409px;height:2px;background:#a0a0a0;"></div>
<div style="left:23px;top:1159px;width:1409px;height:2px;background:#fff;"></div>
<div style="left:1040px;top:1177px;width:240px;height:263px;border:2px solid #a0a0a0;box-shadow:2px 2px 0 #fff,inset 2px 2px 0 #fff;"></div>
<div style="left:1090px;top:1168px;width:138px;height:24px;background:#f0f0f0;"></div>
<span id="t11" class="t" style="left:1010px;top:1167.1px;font-size:24px;color:#000;transform:scaleX(0.9056);">Direction of BKG-Area</span>
<span id="t12" class="t" style="left:1085px;top:1199.1px;font-size:24px;color:#000;transform:scaleX(0.8624);">Standard</span>
<span id="t13" class="t" style="left:1085px;top:1231.1px;font-size:24px;color:#000;transform:scaleX(0.8802);">Avoid Sunlit Face</span>
<span id="t14" class="t" style="left:1085px;top:1262.3px;font-size:24px;color:#000;transform:scaleX(0.8836);">Meteor/Lunar Limb</span>
<div style="left:1060px;top:1299px;width:205px;height:47px;background:#f0f0f0;box-shadow:inset 2px 2px 0 #fff,inset -2px -2px 0 #696969,inset -4px -4px 0 #a0a0a0,inset 4px 4px 0 #e3e3e3;"></div>
<span id="t15" class="t" style="left:1080px;top:1309.1px;font-size:24px;color:#000;transform:scaleX(0.8916);">Direction Setting</span>
<span id="t16" class="t" style="left:1063px;top:1351.3px;font-size:24px;color:#000;transform:scaleX(0.9127);">Width</span>
<div style="left:1075px;top:1378px;width:48px;height:34px;background:#fff;box-shadow:inset 2px 2px 0 #a0a0a0,inset -2px -2px 0 #fff,inset 4px 4px 0 #696969,inset -4px -4px 0 #e3e3e3;"></div>
<span id="t17" class="t" style="left:1082px;top:1383.1px;font-size:24px;color:#000;transform:scaleX(0.8982);">5</span>
<div style="left:1125px;top:1375px;width:34px;height:22px;background:#f0f0f0;box-shadow:inset 2px 2px 0 #fff,inset -2px -2px 0 #696969,inset -4px -4px 0 #a0a0a0,inset 4px 4px 0 #e3e3e3;"></div>
<svg style="left:1135.0px;top:1379.0px" width="12" height="12" viewBox="0 0 12 12" ><polygon points="1.0,8.5 11.0,8.5 6.0,3.5" fill="#000"/></svg>
<div style="left:1125px;top:1400px;width:34px;height:24px;background:#f0f0f0;box-shadow:inset 2px 2px 0 #fff,inset -2px -2px 0 #696969,inset -4px -4px 0 #a0a0a0,inset 4px 4px 0 #e3e3e3;"></div>
<svg style="left:1135.0px;top:1405.0px" width="12" height="12" viewBox="0 0 12 12" ><polygon points="1.0,3.5 11.0,3.5 6.0,8.5" fill="#000"/></svg>
<span id="t18" class="t" style="left:1177px;top:1351.3px;font-size:24px;color:#000;transform:scaleX(0.8595);">Gap</span>
<div style="left:1175px;top:1378px;width:48px;height:34px;background:#fff;box-shadow:inset 2px 2px 0 #a0a0a0,inset -2px -2px 0 #fff,inset 4px 4px 0 #696969,inset -4px -4px 0 #e3e3e3;"></div>
<span id="t19" class="t" style="left:1182px;top:1383.1px;font-size:24px;color:#000;transform:scaleX(0.8982);">0</span>
<div style="left:1229px;top:1375px;width:34px;height:22px;background:#f0f0f0;box-shadow:inset 2px 2px 0 #fff,inset -2px -2px 0 #696969,inset -4px -4px 0 #a0a0a0,inset 4px 4px 0 #e3e3e3;"></div>
<svg style="left:1239.0px;top:1379.0px" width="12" height="12" viewBox="0 0 12 12" ><polygon points="1.0,8.5 11.0,8.5 6.0,3.5" fill="#000"/></svg>
<div style="left:1229px;top:1400px;width:34px;height:24px;background:#f0f0f0;box-shadow:inset 2px 2px 0 #fff,inset -2px -2px 0 #696969,inset -4px -4px 0 #a0a0a0,inset 4px 4px 0 #e3e3e3;"></div>
<svg style="left:1239.0px;top:1405.0px" width="12" height="12" viewBox="0 0 12 12" ><polygon points="1.0,3.5 11.0,3.5 6.0,8.5" fill="#000"/></svg>
<div style="left:1288px;top:1177px;width:212px;height:263px;border:2px solid #a0a0a0;box-shadow:2px 2px 0 #fff,inset 2px 2px 0 #fff;"></div>
<div style="left:1300px;top:1168px;width:132px;height:24px;background:#f0f0f0;"></div>
<span id="t20" class="t" style="left:1305px;top:1167.1px;font-size:24px;color:#000;transform:scaleX(0.8756);">Number of Pixels</span>
<span id="t21" class="t" style="left:1303px;top:1190.9px;font-size:24px;color:#000;transform:scaleX(0.8690);">Aperture</span>
<span id="t22" class="t" style="left:1305px;top:1222.9px;font-size:24px;color:#000;transform:scaleX(0.8775);">Even</span>
<div style="left:1374px;top:1219px;width:106px;height:29px;background:#fff;box-shadow:inset 2px 2px 0 #a0a0a0,inset -2px -2px 0 #fff,inset 4px 4px 0 #696969,inset -4px -4px 0 #e3e3e3;"></div>
<span id="t23" class="t" style="left:1305px;top:1254.9px;font-size:24px;color:#000;transform:scaleX(0.8375);">Odd</span>
<div style="left:1374px;top:1251px;width:106px;height:29px;background:#fff;box-shadow:inset 2px 2px 0 #a0a0a0,inset -2px -2px 0 #fff,inset 4px 4px 0 #696969,inset -4px -4px 0 #e3e3e3;"></div>
<span id="t24" class="t" style="left:1305px;top:1286.1px;font-size:24px;color:#000;transform:scaleX(0.8220);">Frame</span>
<div style="left:1374px;top:1283px;width:106px;height:29px;background:#fff;box-shadow:inset 2px 2px 0 #a0a0a0,inset -2px -2px 0 #fff,inset 4px 4px 0 #696969,inset -4px -4px 0 #e3e3e3;"></div>
<div style="left:1303px;top:1318px;width:197px;height:29px;background:#f0f0f0;box-shadow:inset 2px 2px 0 #fff,inset -2px -2px 0 #696969,inset -4px -4px 0 #a0a0a0,inset 4px 4px 0 #e3e3e3;"></div>
<span id="t25" class="t" style="left:1319px;top:1319.6px;font-size:24px;color:#a0a0a0;transform:scaleX(0.8627);">Set  radius to</span>
<span id="t26" class="t" style="left:1312px;top:1351.3px;font-size:24px;color:#000;transform:scaleX(0.8699);">Radius</span>
<span id="t27" class="t" style="left:1409px;top:1351.3px;font-size:24px;color:#000;transform:scaleX(0.9506);">Inner</span>
<div style="left:1303px;top:1378px;width:38px;height:38px;background:#fff;box-shadow:inset 2px 2px 0 #a0a0a0,inset -2px -2px 0 #fff,inset 4px 4px 0 #696969,inset -4px -4px 0 #e3e3e3;"></div>
<span id="t28" class="t" style="left:1310px;top:1384.6px;font-size:24px;color:#000;transform:scaleX(0.8982);">3</span>
<div style="left:1347px;top:1375px;width:34px;height:22px;background:#f0f0f0;box-shadow:inset 2px 2px 0 #fff,inset -2px -2px 0 #696969,inset -4px -4px 0 #a0a0a0,inset 4px 4px 0 #e3e3e3;"></div>
<svg style="left:1357.0px;top:1379.0px" width="12" height="12" viewBox="0 0 12 12" ><polygon points="1.0,8.5 11.0,8.5 6.0,3.5" fill="#000"/></svg>
<div style="left:1347px;top:1400px;width:34px;height:24px;background:#f0f0f0;box-shadow:inset 2px 2px 0 #fff,inset -2px -2px 0 #696969,inset -4px -4px 0 #a0a0a0,inset 4px 4px 0 #e3e3e3;"></div>
<svg style="left:1357.0px;top:1405.0px" width="12" height="12" viewBox="0 0 12 12" ><polygon points="1.0,3.5 11.0,3.5 6.0,8.5" fill="#000"/></svg>
<div style="left:1391px;top:1378px;width:40px;height:38px;background:#fff;box-shadow:inset 2px 2px 0 #a0a0a0,inset -2px -2px 0 #fff,inset 4px 4px 0 #696969,inset -4px -4px 0 #e3e3e3;"></div>
<span id="t29" class="t" style="left:1397px;top:1384.6px;font-size:24px;color:#000;transform:scaleX(0.8982);">5</span>
<div style="left:1031px;top:1340px;width:2px;height:100px;background:#a0a0a0;"></div>
<div style="left:1033px;top:1340px;width:2px;height:100px;background:#fff;"></div>
<div style="left:530px;top:1426px;width:510px;height:2px;background:#a0a0a0;"></div>
<div style="left:530px;top:1428px;width:510px;height:2px;background:#fff;"></div>
<div style="left:526px;top:1342px;width:20px;height:20px;border-radius:50%;background:#fff;box-shadow:inset 2px 2px 0 #a0a0a0,inset -2px -2px 0 #fff,inset 3px 3px 1px #696969;"></div>
<div style="left:532px;top:1348px;width:8px;height:8px;border-radius:50%;background:#000;"></div>
<div style="left:526px;top:1371px;width:20px;height:20px;border-radius:50%;background:#fff;box-shadow:inset 2px 2px 0 #a0a0a0,inset -2px -2px 0 #fff,inset 3px 3px 1px #696969;"></div>
<div style="left:526px;top:1399px;width:20px;height:20px;border-radius:50%;background:#fff;box-shadow:inset 2px 2px 0 #a0a0a0,inset -2px -2px 0 #fff,inset 3px 3px 1px #696969;"></div>
<span id="t30" class="t" style="left:552px;top:1340.6px;font-size:24px;color:#000;transform:scaleX(0.8409);">Drift</span>
<span id="t31" class="t" style="left:552px;top:1367.1px;font-size:24px;color:#000;transform:scaleX(0.7917);">OFF</span>
<span id="t32" class="t" style="left:552px;top:1395.0px;font-size:24px;color:#000;transform:scaleX(0.8104);">CSV</span>
<span id="t33" class="t" style="left:636px;top:1339.0px;font-size:24px;color:#000;transform:scaleX(0.8699);">Radius</span>
<span id="t34" class="t" style="left:715px;top:1339.0px;font-size:24px;color:#000;transform:scaleX(0.8432);">Threshold</span>
<div style="left:617px;top:1372px;width:42px;height:39px;background:#fff;box-shadow:inset 2px 2px 0 #a0a0a0,inset -2px -2px 0 #fff,inset 4px 4px 0 #696969,inset -4px -4px 0 #e3e3e3;"></div>
<span id="t35" class="t" style="left:624px;top:1379.6px;font-size:24px;color:#000;transform:scaleX(0.8982);">2</span>
<div style="left:663px;top:1369px;width:34px;height:22px;background:#f0f0f0;box-shadow:inset 2px 2px 0 #fff,inset -2px -2px 0 #696969,inset -4px -4px 0 #a0a0a0,inset 4px 4px 0 #e3e3e3;"></div>
<svg style="left:673.0px;top:1373.0px" width="12" height="12" viewBox="0 0 12 12" ><polygon points="1.0,8.5 11.0,8.5 6.0,3.5" fill="#000"/></svg>
<div style="left:663px;top:1394px;width:34px;height:24px;background:#f0f0f0;box-shadow:inset 2px 2px 0 #fff,inset -2px -2px 0 #696969,inset -4px -4px 0 #a0a0a0,inset 4px 4px 0 #e3e3e3;"></div>
<svg style="left:673.0px;top:1399.0px" width="12" height="12" viewBox="0 0 12 12" ><polygon points="1.0,3.5 11.0,3.5 6.0,8.5" fill="#000"/></svg>
<div style="left:723px;top:1372px;width:48px;height:40px;background:#fff;box-shadow:inset 2px 2px 0 #a0a0a0,inset -2px -2px 0 #fff,inset 4px 4px 0 #696969,inset -4px -4px 0 #e3e3e3;"></div>
<span id="t36" class="t" style="left:730px;top:1379.6px;font-size:24px;color:#000;transform:scaleX(0.8613);">50</span>
<div style="left:772px;top:1379px;width:33px;height:17px;background:#f0f0f0;box-shadow:inset 2px 2px 0 #fff,inset -2px -2px 0 #696969,inset -4px -4px 0 #a0a0a0,inset 4px 4px 0 #e3e3e3;"></div>
<svg style="left:783.5px;top:1382.5px" width="8" height="8" viewBox="0 0 8 8" ><polygon points="1.0,5.5 7.0,5.5 4.0,2.5" fill="#000"/></svg>
<div style="left:772px;top:1399px;width:33px;height:19px;background:#f0f0f0;box-shadow:inset 2px 2px 0 #fff,inset -2px -2px 0 #696969,inset -4px -4px 0 #a0a0a0,inset 4px 4px 0 #e3e3e3;"></div>
<svg style="left:783.5px;top:1403.5px" width="8" height="8" viewBox="0 0 8 8" ><polygon points="1.0,2.5 7.0,2.5 4.0,5.5" fill="#000"/></svg>
<div style="left:823px;top:1320px;width:88px;height:45px;background:#fff;box-shadow:inset 2px 2px 0 #a0a0a0,inset -2px -2px 0 #fff,inset 4px 4px 0 #696969,inset -4px -4px 0 #e3e3e3;"></div>
<span id="t37" class="t" style="left:830px;top:1333.1px;font-size:24px;color:#000;transform:scaleX(0.8103);">Frame1</span>
<div style="left:927px;top:1320px;width:89px;height:45px;background:#fff;box-shadow:inset 2px 2px 0 #a0a0a0,inset -2px -2px 0 #fff,inset 4px 4px 0 #696969,inset -4px -4px 0 #e3e3e3;"></div>
<span id="t38" class="t" style="left:934px;top:1333.1px;font-size:24px;color:#000;transform:scaleX(0.8345);">Frame2</span>
<div style="left:823px;top:1375px;width:48px;height:43px;background:#f0f0f0;box-shadow:inset 2px 2px 0 #fff,inset -2px -2px 0 #696969,inset -4px -4px 0 #a0a0a0,inset 4px 4px 0 #e3e3e3;"></div>
<span id="t39" class="t" style="left:829px;top:1382.8px;font-size:25px;color:#000;font-weight:bold;transform:scaleX(0.9253);">Set</span>
<div style="left:872px;top:1375px;width:49px;height:43px;background:#f0f0f0;box-shadow:inset 2px 2px 0 #fff,inset -2px -2px 0 #696969,inset -4px -4px 0 #a0a0a0,inset 4px 4px 0 #e3e3e3;"></div>
<span id="t40" class="t" style="left:885px;top:1383.6px;font-size:24px;color:#000;transform:scaleX(0.7176);">Clr</span>
<div style="left:924px;top:1375px;width:54px;height:43px;background:#f0f0f0;box-shadow:inset 2px 2px 0 #fff,inset -2px -2px 0 #696969,inset -4px -4px 0 #a0a0a0,inset 4px 4px 0 #e3e3e3;"></div>
<span id="t41" class="t" style="left:933px;top:1382.8px;font-size:25px;color:#000;font-weight:bold;transform:scaleX(0.9253);">Set</span>
<div style="left:977px;top:1375px;width:48px;height:43px;background:#f0f0f0;box-shadow:inset 2px 2px 0 #fff,inset -2px -2px 0 #696969,inset -4px -4px 0 #a0a0a0,inset 4px 4px 0 #e3e3e3;"></div>
<span id="t42" class="t" style="left:991px;top:1383.6px;font-size:24px;color:#000;transform:scaleX(0.7176);">Clr</span>
<div style="left:24px;top:791px;width:506px;height:649px;background:#fff;border:1px solid #8a8a8a;border-radius:11px 11px 0 0;"></div>
<div style="left:25px;top:792px;width:504px;height:50px;background:#f3f3f3;border-radius:10px 10px 0 0;"></div>
<svg style="left:31px;top:800px" width="32" height="32" viewBox="0 0 32 32"><rect width="32" height="32" fill="#0000c4"/><path d="M18 0h10v3h-9zM2 1h8l-2 6h-4zM14 8h15v6h-12zM0 24l9 8h14v-2h-9l-9-9zM12 19h14v5h-12z" fill="#00008a"/><path d="M0 6h4v8h-4zM27 19h5v8h-5z" fill="#0000f4"/><rect x="9.3" y="0" width="2.2" height="32" fill="#d4d418"/><rect x="0" y="15.6" width="32" height="2.4" fill="#d8d81c"/><path d="M10.4 8 Q11.3 15.4 18.5 16.8 Q11.3 18.2 10.4 27 Q9.5 18.2 2.5 16.8 Q9.5 15.4 10.4 8Z" fill="#ffff00" stroke="#ffff00" stroke-width="1.5" stroke-linejoin="round"/><g fill="#a8a8e8"><rect x="20" y="2.5" width="1.6" height="1.6"/><rect x="24" y="2.5" width="1.6" height="1.6"/><rect x="28" y="4.5" width="1.6" height="1.6"/><rect x="6.5" y="6.5" width="1.6" height="1.6"/><rect x="16" y="4" width="1.6" height="1.6"/><rect x="20" y="26.5" width="1.6" height="1.6"/><rect x="24" y="25" width="1.6" height="1.6"/><rect x="28" y="26.5" width="1.6" height="1.6"/><rect x="16" y="27.5" width="1.6" height="1.6"/><rect x="1" y="22" width="1.6" height="1.6"/></g><path d="M0 27l6 5h-6zM18 30h12v2h-12z" fill="#f3f3f3"/></svg>
<span id="t43" class="t" style="left:74px;top:802.5px;font-size:30px;color:#8c8c8c;transform:scaleX(0.9570);">3D-Graph...</span>
<div style="left:288px;top:814px;width:20px;height:2px;background:#8a8a8a;"></div>
<div style="left:379px;top:805px;width:20px;height:20px;border:2px solid #8a8a8a;border-radius:3px;"></div>
<svg style="left:471px;top:804px" width="22" height="22" viewBox="0 0 22 22" ><path d="M1.5 1.5L20.5 20.5M20.5 1.5L1.5 20.5" stroke="#8a8a8a" stroke-width="2" fill="none"/></svg>
<svg style="left:25px;top:1150px" width="504" height="290" viewBox="0 0 504 290" shape-rendering="crispEdges"><path d="M0.0 50.6 L9.9 50.5 L19.8 45.0 L29.6 54.0 L39.5 47.4 L49.4 53.9 L59.3 43.7 L69.2 46.4 L79.1 42.9 L88.9 48.5 L98.8 45.8 L108.7 47.9 L118.6 49.2 L128.5 46.6 L138.4 50.8 L148.2 48.1 L158.1 44.9 L168.0 46.8 L177.9 48.2 L187.8 40.3 L197.6 46.8 L207.5 48.8 L217.4 46.5 L227.3 48.6 L237.2 48.2 L247.1 48.1 L256.9 40.8 L266.8 46.9 L276.7 46.5 L286.6 45.0 L296.5 40.9 L306.4 47.7 L316.2 48.9 L326.1 39.5 L336.0 51.4 L345.9 48.1 L355.8 45.0 L365.6 40.1 L375.5 49.9 L385.4 54.4 L395.3 45.0 L405.2 48.6 L415.1 48.2 L424.9 45.6 L434.8 46.3 L444.7 46.1 L454.6 48.3 L464.5 43.1 L474.4 42.4 L484.2 46.9 L494.1 48.4 L504.0 44.8 M0.0 55.9 L9.9 60.6 L19.8 58.8 L29.6 54.2 L39.5 57.7 L49.4 58.4 L59.3 56.7 L69.2 57.5 L79.1 57.4 L88.9 63.3 L98.8 52.0 L108.7 56.8 L118.6 60.1 L128.5 54.4 L138.4 56.4 L148.2 57.3 L158.1 54.2 L168.0 50.4 L177.9 55.7 L187.8 52.5 L197.6 50.8 L207.5 60.5 L217.4 59.0 L227.3 55.0 L237.2 62.7 L247.1 58.2 L256.9 53.4 L266.8 54.2 L276.7 55.6 L286.6 63.2 L296.5 50.2 L306.4 55.7 L316.2 55.0 L326.1 55.9 L336.0 62.7 L345.9 61.8 L355.8 61.1 L365.6 51.5 L375.5 60.0 L385.4 58.1 L395.3 58.2 L405.2 55.6 L415.1 55.9 L424.9 56.6 L434.8 61.3 L444.7 67.1 L454.6 56.9 L464.5 56.6 L474.4 53.6 L484.2 57.7 L494.1 59.3 L504.0 56.1 M0.0 72.6 L9.9 71.0 L19.8 70.9 L29.6 66.9 L39.5 61.3 L49.4 65.4 L59.3 64.2 L69.2 67.1 L79.1 66.9 L88.9 69.2 L98.8 68.7 L108.7 75.4 L118.6 71.5 L128.5 71.8 L138.4 65.2 L148.2 65.7 L158.1 64.2 L168.0 63.0 L177.9 68.8 L187.8 64.5 L197.6 61.7 L207.5 67.8 L217.4 64.4 L227.3 68.3 L237.2 72.8 L247.1 67.4 L256.9 70.4 L266.8 67.5 L276.7 69.2 L286.6 66.8 L296.5 74.5 L306.4 61.3 L316.2 63.6 L326.1 68.9 L336.0 70.6 L345.9 67.8 L355.8 65.7 L365.6 66.5 L375.5 66.5 L385.4 73.9 L395.3 71.3 L405.2 63.6 L415.1 67.1 L424.9 72.5 L434.8 70.5 L444.7 72.3 L454.6 71.0 L464.5 64.1 L474.4 68.5 L484.2 64.3 L494.1 67.2 L504.0 72.5 M0.0 80.3 L9.9 70.9 L19.8 80.7 L29.6 81.6 L39.5 74.2 L49.4 77.9 L59.3 78.2 L69.2 73.5 L79.1 83.9 L88.9 76.9 L98.8 81.6 L108.7 82.7 L118.6 80.8 L128.5 74.5 L138.4 78.7 L148.2 84.1 L158.1 81.8 L168.0 73.3 L177.9 74.9 L187.8 81.7 L197.6 70.4 L207.5 79.4 L217.4 82.0 L227.3 78.6 L237.2 75.2 L247.1 73.0 L256.9 74.9 L266.8 79.6 L276.7 80.0 L286.6 82.9 L296.5 78.4 L306.4 80.1 L316.2 77.4 L326.1 82.3 L336.0 79.9 L345.9 81.0 L355.8 82.1 L365.6 82.0 L375.5 81.5 L385.4 82.0 L395.3 76.4 L405.2 77.9 L415.1 82.5 L424.9 76.5 L434.8 77.3 L444.7 73.5 L454.6 78.8 L464.5 78.9 L474.4 80.4 L484.2 77.8 L494.1 76.6 L504.0 77.6 M0.0 89.4 L9.9 86.8 L19.8 88.3 L29.6 87.8 L39.5 91.6 L49.4 87.9 L59.3 91.9 L69.2 91.4 L79.1 88.1 L88.9 81.7 L98.8 85.3 L108.7 88.6 L118.6 89.2 L128.5 85.4 L138.4 84.1 L148.2 84.6 L158.1 89.2 L168.0 88.0 L177.9 89.7 L187.8 89.5 L197.6 91.4 L207.5 89.4 L217.4 95.6 L227.3 92.5 L237.2 87.2 L247.1 91.6 L256.9 86.8 L266.8 92.8 L276.7 89.8 L286.6 87.3 L296.5 92.0 L306.4 90.9 L316.2 80.5 L326.1 90.8 L336.0 90.9 L345.9 90.5 L355.8 88.5 L365.6 88.7 L375.5 85.4 L385.4 86.0 L395.3 89.9 L405.2 89.8 L415.1 93.2 L424.9 93.5 L434.8 91.0 L444.7 86.2 L454.6 88.2 L464.5 86.0 L474.4 85.5 L484.2 89.1 L494.1 81.7 L504.0 90.3 M0.0 101.1 L9.9 100.4 L19.8 95.2 L29.6 99.5 L39.5 101.4 L49.4 97.6 L59.3 95.3 L69.2 99.4 L79.1 99.8 L88.9 95.4 L98.8 95.8 L108.7 95.9 L118.6 101.5 L128.5 98.1 L138.4 97.8 L148.2 104.9 L158.1 95.0 L168.0 98.7 L177.9 100.1 L187.8 91.5 L197.6 98.5 L207.5 101.4 L217.4 99.2 L227.3 97.1 L237.2 96.3 L247.1 99.2 L256.9 101.9 L266.8 101.3 L276.7 101.7 L286.6 102.5 L296.5 99.1 L306.4 100.6 L316.2 98.8 L326.1 101.7 L336.0 101.9 L345.9 99.6 L355.8 100.2 L365.6 95.2 L375.5 102.0 L385.4 98.3 L395.3 99.1 L405.2 103.3 L415.1 96.6 L424.9 98.4 L434.8 105.9 L444.7 97.0 L454.6 95.9 L464.5 101.6 L474.4 93.4 L484.2 98.5 L494.1 102.8 L504.0 97.1 M0.0 110.6 L9.9 113.9 L19.8 116.6 L29.6 108.6 L39.5 111.9 L49.4 107.3 L59.3 108.1 L69.2 111.1 L79.1 111.2 L88.9 103.5 L98.8 103.7 L108.7 106.9 L118.6 110.6 L128.5 112.7 L138.4 110.7 L148.2 103.9 L158.1 107.9 L168.0 110.4 L177.9 113.5 L187.8 108.8 L197.6 112.3 L207.5 109.4 L217.4 106.9 L227.3 105.8 L237.2 108.9 L247.1 110.5 L256.9 108.6 L266.8 103.4 L276.7 108.1 L286.6 114.1 L296.5 104.2 L306.4 108.6 L316.2 97.8 L326.1 111.0 L336.0 109.7 L345.9 110.4 L355.8 108.1 L365.6 111.3 L375.5 114.3 L385.4 115.8 L395.3 109.8 L405.2 111.1 L415.1 111.3 L424.9 102.4 L434.8 106.8 L444.7 105.8 L454.6 111.1 L464.5 108.4 L474.4 110.1 L484.2 110.1 L494.1 106.9 L504.0 107.4 M0.0 118.8 L9.9 119.3 L19.8 124.6 L29.6 122.3 L39.5 118.5 L49.4 121.0 L59.3 122.4 L69.2 118.6 L79.1 122.9 L88.9 122.1 L98.8 116.8 L108.7 121.0 L118.6 115.0 L128.5 118.0 L138.4 117.1 L148.2 116.0 L158.1 127.1 L168.0 120.1 L177.9 124.1 L187.8 121.4 L197.6 120.1 L207.5 115.6 L217.4 119.9 L227.3 114.3 L237.2 121.6 L247.1 120.0 L256.9 119.5 L266.8 116.6 L276.7 120.0 L286.6 121.9 L296.5 120.9 L306.4 124.5 L316.2 115.6 L326.1 117.3 L336.0 118.4 L345.9 118.9 L355.8 121.8 L365.6 121.2 L375.5 117.1 L385.4 122.4 L395.3 122.4 L405.2 114.5 L415.1 114.6 L424.9 118.8 L434.8 118.0 L444.7 119.2 L454.6 115.0 L464.5 121.3 L474.4 119.5 L484.2 118.2 L494.1 115.0 L504.0 120.6 M0.0 129.4 L9.9 131.9 L19.8 132.4 L29.6 132.4 L39.5 129.9 L49.4 127.2 L59.3 132.5 L69.2 132.2 L79.1 131.6 L88.9 129.0 L98.8 127.8 L108.7 134.4 L118.6 129.0 L128.5 133.6 L138.4 127.8 L148.2 133.4 L158.1 133.8 L168.0 132.6 L177.9 130.4 L187.8 133.5 L197.6 129.5 L207.5 129.7 L217.4 129.9 L227.3 129.3 L237.2 127.3 L247.1 132.7 L256.9 130.2 L266.8 130.3 L276.7 137.1 L286.6 128.9 L296.5 132.8 L306.4 132.6 L316.2 131.7 L326.1 129.9 L336.0 129.1 L345.9 128.6 L355.8 132.5 L365.6 127.9 L375.5 128.8 L385.4 131.5 L395.3 130.3 L405.2 127.5 L415.1 128.7 L424.9 127.9 L434.8 129.8 L444.7 126.4 L454.6 122.8 L464.5 128.7 L474.4 135.6 L484.2 124.4 L494.1 132.1 L504.0 134.8 M0.0 148.6 L9.9 139.2 L19.8 136.9 L29.6 137.2 L39.5 141.9 L49.4 135.7 L59.3 140.9 L69.2 142.6 L79.1 140.4 L88.9 139.9 L98.8 140.4 L108.7 139.2 L118.6 148.0 L128.5 135.3 L138.4 142.5 L148.2 138.4 L158.1 143.3 L168.0 140.0 L177.9 141.2 L187.8 145.9 L197.6 139.3 L207.5 138.5 L217.4 144.4 L227.3 147.7 L237.2 142.8 L247.1 143.4 L256.9 140.1 L266.8 140.6 L276.7 135.1 L286.6 138.4 L296.5 141.5 L306.4 140.1 L316.2 150.4 L326.1 143.7 L336.0 143.7 L345.9 141.0 L355.8 139.5 L365.6 139.9 L375.5 137.4 L385.4 142.9 L395.3 139.6 L405.2 141.0 L415.1 140.6 L424.9 139.5 L434.8 141.6 L444.7 139.9 L454.6 140.7 L464.5 137.1 L474.4 141.0 L484.2 139.6 L494.1 131.8 L504.0 138.5 M0.0 149.2 L9.9 147.3 L19.8 154.4 L29.6 148.6 L39.5 148.4 L49.4 149.5 L59.3 147.7 L69.2 148.3 L79.1 146.9 L88.9 153.2 L98.8 149.5 L108.7 152.9 L118.6 146.8 L128.5 150.5 L138.4 155.4 L148.2 150.6 L158.1 154.4 L168.0 147.6 L177.9 152.2 L187.8 158.5 L197.6 152.3 L207.5 147.5 L217.4 149.9 L227.3 153.0 L237.2 148.0 L247.1 147.1 L256.9 144.1 L266.8 147.1 L276.7 149.6 L286.6 153.7 L296.5 150.0 L306.4 150.0 L316.2 151.0 L326.1 149.6 L336.0 155.0 L345.9 149.1 L355.8 151.0 L365.6 149.8 L375.5 151.3 L385.4 152.0 L395.3 150.1 L405.2 148.3 L415.1 152.1 L424.9 149.9 L434.8 153.6 L444.7 149.6 L454.6 150.9 L464.5 155.4 L474.4 147.0 L484.2 154.0 L494.1 150.7 L504.0 155.5 M0.0 167.4 L9.9 159.1 L19.8 166.2 L29.6 168.5 L39.5 162.1 L49.4 166.7 L59.3 162.1 L69.2 155.1 L79.1 162.8 L88.9 160.2 L98.8 159.5 L108.7 160.6 L118.6 161.8 L128.5 156.2 L138.4 161.7 L148.2 160.2 L158.1 161.0 L168.0 165.8 L177.9 160.3 L187.8 161.2 L197.6 159.2 L207.5 159.0 L217.4 155.9 L227.3 166.7 L237.2 156.1 L247.1 145.4 L256.9 146.7 L266.8 152.7 L276.7 160.4 L286.6 160.8 L296.5 167.0 L306.4 164.7 L316.2 161.6 L326.1 162.9 L336.0 163.5 L345.9 161.8 L355.8 162.3 L365.6 165.0 L375.5 155.7 L385.4 163.7 L395.3 159.2 L405.2 159.4 L415.1 158.1 L424.9 163.4 L434.8 164.8 L444.7 159.9 L454.6 160.5 L464.5 169.5 L474.4 170.4 L484.2 163.3 L494.1 162.7 L504.0 162.3 M0.0 170.4 L9.9 175.2 L19.8 162.7 L29.6 168.7 L39.5 167.3 L49.4 170.9 L59.3 179.0 L69.2 171.0 L79.1 173.7 L88.9 170.3 L98.8 172.2 L108.7 169.5 L118.6 174.8 L128.5 173.1 L138.4 171.8 L148.2 174.4 L158.1 173.4 L168.0 169.7 L177.9 165.1 L187.8 172.5 L197.6 169.0 L207.5 175.7 L217.4 173.1 L227.3 166.0 L237.2 142.0 L247.1 107.8 L256.9 102.2 L266.8 143.5 L276.7 162.6 L286.6 168.2 L296.5 169.9 L306.4 173.2 L316.2 170.9 L326.1 174.8 L336.0 174.7 L345.9 178.2 L355.8 176.3 L365.6 176.2 L375.5 172.2 L385.4 171.5 L395.3 176.4 L405.2 172.1 L415.1 170.4 L424.9 168.6 L434.8 172.1 L444.7 171.1 L454.6 173.1 L464.5 168.6 L474.4 177.2 L484.2 171.0 L494.1 179.8 L504.0 165.9 M0.0 179.0 L9.9 189.6 L19.8 184.1 L29.6 187.1 L39.5 188.4 L49.4 183.6 L59.3 185.3 L69.2 178.6 L79.1 184.0 L88.9 186.1 L98.8 182.5 L108.7 180.8 L118.6 179.4 L128.5 180.5 L138.4 187.4 L148.2 185.1 L158.1 182.9 L168.0 185.2 L177.9 179.6 L187.8 183.4 L197.6 182.5 L207.5 183.5 L217.4 181.6 L227.3 180.1 L237.2 131.1 L247.1 77.7 L256.9 78.3 L266.8 144.6 L276.7 175.1 L286.6 186.5 L296.5 181.1 L306.4 178.1 L316.2 180.1 L326.1 183.8 L336.0 177.8 L345.9 182.9 L355.8 182.4 L365.6 182.0 L375.5 183.9 L385.4 180.8 L395.3 186.5 L405.2 188.4 L415.1 178.1 L424.9 184.8 L434.8 183.5 L444.7 181.1 L454.6 183.9 L464.5 186.4 L474.4 182.9 L484.2 185.5 L494.1 180.3 L504.0 183.8 M0.0 193.6 L9.9 190.0 L19.8 198.1 L29.6 197.9 L39.5 190.1 L49.4 188.2 L59.3 192.3 L69.2 195.1 L79.1 188.3 L88.9 190.8 L98.8 189.1 L108.7 199.0 L118.6 193.1 L128.5 196.3 L138.4 196.5 L148.2 190.6 L158.1 190.1 L168.0 194.3 L177.9 193.5 L187.8 187.8 L197.6 190.4 L207.5 193.1 L217.4 190.5 L227.3 187.5 L237.2 168.7 L247.1 125.4 L256.9 122.6 L266.8 162.1 L276.7 192.1 L286.6 195.1 L296.5 194.7 L306.4 198.0 L316.2 188.8 L326.1 191.1 L336.0 188.1 L345.9 200.3 L355.8 195.5 L365.6 186.3 L375.5 197.6 L385.4 199.1 L395.3 191.9 L405.2 187.1 L415.1 190.4 L424.9 196.0 L434.8 190.7 L444.7 191.2 L454.6 191.7 L464.5 191.3 L474.4 189.7 L484.2 188.6 L494.1 187.8 L504.0 188.9 M0.0 203.6 L9.9 209.6 L19.8 201.1 L29.6 208.4 L39.5 195.0 L49.4 207.2 L59.3 209.6 L69.2 209.6 L79.1 201.7 L88.9 202.0 L98.8 200.7 L108.7 202.0 L118.6 205.8 L128.5 200.2 L138.4 205.5 L148.2 208.4 L158.1 199.8 L168.0 201.2 L177.9 206.4 L187.8 203.9 L197.6 199.4 L207.5 199.7 L217.4 206.8 L227.3 197.8 L237.2 204.7 L247.1 184.3 L256.9 183.3 L266.8 195.9 L276.7 201.4 L286.6 208.7 L296.5 203.5 L306.4 201.3 L316.2 206.3 L326.1 202.6 L336.0 203.6 L345.9 211.1 L355.8 205.2 L365.6 201.0 L375.5 208.6 L385.4 203.0 L395.3 201.9 L405.2 207.6 L415.1 203.9 L424.9 199.9 L434.8 200.5 L444.7 206.6 L454.6 199.4 L464.5 201.8 L474.4 202.6 L484.2 197.7 L494.1 200.4 L504.0 201.7 M0.0 210.0 L9.9 211.0 L19.8 208.9 L29.6 213.8 L39.5 219.8 L49.4 207.8 L59.3 210.5 L69.2 211.5 L79.1 213.3 L88.9 213.7 L98.8 213.1 L108.7 216.8 L118.6 210.6 L128.5 213.1 L138.4 216.9 L148.2 212.5 L158.1 214.6 L168.0 213.5 L177.9 211.5 L187.8 203.7 L197.6 217.3 L207.5 211.9 L217.4 210.9 L227.3 211.8 L237.2 207.2 L247.1 212.9 L256.9 212.6 L266.8 212.6 L276.7 218.2 L286.6 209.4 L296.5 217.9 L306.4 211.4 L316.2 209.1 L326.1 216.4 L336.0 214.0 L345.9 214.1 L355.8 207.2 L365.6 212.5 L375.5 219.8 L385.4 209.5 L395.3 209.7 L405.2 220.6 L415.1 223.2 L424.9 204.0 L434.8 213.1 L444.7 221.1 L454.6 209.6 L464.5 208.3 L474.4 222.0 L484.2 208.8 L494.1 210.9 L504.0 213.5 M0.0 226.4 L9.9 222.4 L19.8 226.8 L29.6 223.2 L39.5 224.7 L49.4 225.4 L59.3 221.8 L69.2 220.2 L79.1 220.6 L88.9 222.2 L98.8 217.7 L108.7 228.4 L118.6 223.6 L128.5 223.1 L138.4 219.4 L148.2 232.1 L158.1 225.4 L168.0 225.0 L177.9 223.1 L187.8 215.5 L197.6 222.9 L207.5 224.2 L217.4 222.2 L227.3 220.2 L237.2 224.4 L247.1 217.6 L256.9 228.2 L266.8 219.2 L276.7 221.2 L286.6 220.2 L296.5 218.1 L306.4 224.7 L316.2 222.3 L326.1 222.8 L336.0 226.0 L345.9 226.6 L355.8 226.7 L365.6 220.7 L375.5 232.1 L385.4 228.5 L395.3 223.5 L405.2 219.0 L415.1 224.2 L424.9 219.2 L434.8 224.0 L444.7 225.8 L454.6 229.5 L464.5 223.1 L474.4 217.5 L484.2 223.5 L494.1 227.6 L504.0 221.7 M0.0 239.3 L9.9 238.4 L19.8 230.1 L29.6 232.7 L39.5 230.6 L49.4 233.3 L59.3 234.6 L69.2 233.6 L79.1 235.4 L88.9 230.3 L98.8 239.0 L108.7 241.2 L118.6 237.3 L128.5 230.9 L138.4 236.2 L148.2 242.7 L158.1 223.7 L168.0 237.6 L177.9 234.9 L187.8 232.1 L197.6 232.8 L207.5 234.8 L217.4 240.0 L227.3 232.3 L237.2 237.8 L247.1 234.9 L256.9 231.4 L266.8 235.6 L276.7 240.8 L286.6 236.4 L296.5 232.0 L306.4 231.6 L316.2 239.0 L326.1 234.0 L336.0 233.1 L345.9 230.2 L355.8 232.7 L365.6 233.6 L375.5 235.3 L385.4 232.5 L395.3 231.3 L405.2 234.8 L415.1 235.2 L424.9 227.8 L434.8 234.4 L444.7 237.1 L454.6 231.7 L464.5 238.8 L474.4 238.2 L484.2 230.8 L494.1 234.1 L504.0 231.3 M0.0 241.7 L9.9 247.4 L19.8 242.7 L29.6 246.0 L39.5 243.8 L49.4 243.7 L59.3 244.9 L69.2 249.4 L79.1 243.5 L88.9 244.5 L98.8 242.6 L108.7 248.5 L118.6 243.9 L128.5 245.4 L138.4 246.2 L148.2 245.6 L158.1 245.5 L168.0 249.7 L177.9 246.6 L187.8 246.3 L197.6 242.9 L207.5 245.2 L217.4 239.3 L227.3 242.4 L237.2 243.4 L247.1 243.8 L256.9 249.9 L266.8 243.3 L276.7 239.9 L286.6 248.4 L296.5 239.7 L306.4 242.3 L316.2 243.5 L326.1 246.2 L336.0 244.5 L345.9 247.5 L355.8 244.7 L365.6 244.4 L375.5 244.4 L385.4 249.1 L395.3 241.2 L405.2 247.0 L415.1 243.1 L424.9 242.4 L434.8 245.4 L444.7 235.5 L454.6 244.2 L464.5 243.0 L474.4 245.5 L484.2 243.4 L494.1 249.3 L504.0 242.2 M0.0 256.4 L9.9 256.9 L19.8 252.2 L29.6 251.6 L39.5 256.6 L49.4 258.8 L59.3 262.5 L69.2 258.7 L79.1 253.2 L88.9 252.6 L98.8 259.7 L108.7 254.8 L118.6 251.1 L128.5 257.8 L138.4 257.1 L148.2 258.4 L158.1 253.5 L168.0 262.1 L177.9 255.5 L187.8 253.3 L197.6 255.2 L207.5 251.4 L217.4 252.7 L227.3 256.9 L237.2 258.7 L247.1 258.9 L256.9 253.2 L266.8 255.5 L276.7 254.6 L286.6 258.4 L296.5 250.7 L306.4 251.8 L316.2 252.2 L326.1 259.2 L336.0 245.3 L345.9 251.9 L355.8 259.0 L365.6 251.4 L375.5 255.5 L385.4 257.9 L395.3 257.8 L405.2 253.2 L415.1 253.9 L424.9 254.2 L434.8 255.8 L444.7 258.8 L454.6 254.1 L464.5 256.0 L474.4 255.8 L484.2 252.7 L494.1 248.7 L504.0 257.3 M0.0 261.8 L9.9 268.2 L19.8 262.2 L29.6 263.0 L39.5 265.3 L49.4 264.5 L59.3 268.3 L69.2 266.7 L79.1 261.8 L88.9 262.5 L98.8 256.9 L108.7 269.2 L118.6 267.1 L128.5 265.0 L138.4 265.2 L148.2 267.3 L158.1 267.0 L168.0 265.8 L177.9 260.6 L187.8 265.8 L197.6 268.2 L207.5 264.2 L217.4 275.2 L227.3 268.6 L237.2 267.8 L247.1 264.2 L256.9 274.0 L266.8 266.2 L276.7 269.4 L286.6 261.7 L296.5 262.4 L306.4 267.1 L316.2 263.6 L326.1 269.8 L336.0 264.6 L345.9 264.4 L355.8 261.4 L365.6 267.0 L375.5 273.4 L385.4 262.4 L395.3 269.4 L405.2 267.4 L415.1 266.7 L424.9 259.2 L434.8 265.6 L444.7 261.1 L454.6 265.1 L464.5 270.6 L474.4 263.7 L484.2 263.5 L494.1 267.5 L504.0 271.2 M0.0 265.1 L9.9 267.7 L19.8 274.2 L29.6 274.1 L39.5 272.2 L49.4 273.5 L59.3 281.4 L69.2 281.0 L79.1 272.7 L88.9 270.7 L98.8 271.8 L108.7 272.7 L118.6 275.8 L128.5 272.2 L138.4 269.9 L148.2 273.8 L158.1 271.1 L168.0 271.2 L177.9 278.5 L187.8 271.4 L197.6 278.7 L207.5 279.2 L217.4 269.7 L227.3 282.0 L237.2 276.5 L247.1 272.4 L256.9 274.3 L266.8 277.2 L276.7 279.3 L286.6 273.9 L296.5 273.8 L306.4 276.1 L316.2 279.5 L326.1 281.2 L336.0 275.8 L345.9 276.0 L355.8 272.7 L365.6 277.0 L375.5 272.4 L385.4 280.3 L395.3 282.3 L405.2 272.3 L415.1 277.4 L424.9 279.0 L434.8 276.3 L444.7 280.4 L454.6 277.1 L464.5 281.0 L474.4 275.1 L484.2 278.0 L494.1 276.0 L504.0 275.8 M0.0 284.5 L9.9 292.7 L19.8 285.6 L29.6 287.2 L39.5 290.6 L49.4 287.2 L59.3 284.3 L69.2 284.4 L79.1 278.6 L88.9 287.4 L98.8 285.7 L108.7 278.9 L118.6 288.4 L128.5 289.3 L138.4 287.9 L148.2 288.4 L158.1 286.3 L168.0 285.6 L177.9 289.1 L187.8 290.5 L197.6 286.4 L207.5 290.8 L217.4 289.3 L227.3 284.9 L237.2 286.5 L247.1 290.0 L256.9 291.6 L266.8 290.0 L276.7 291.8 L286.6 284.2 L296.5 283.4 L306.4 285.1 L316.2 285.0 L326.1 288.1 L336.0 285.6 L345.9 286.0 L355.8 286.0 L365.6 288.0 L375.5 290.3 L385.4 285.1 L395.3 284.7 L405.2 290.4 L415.1 287.1 L424.9 286.3 L434.8 284.3 L444.7 292.6 L454.6 291.5 L464.5 291.4 L474.4 290.9 L484.2 290.3 L494.1 283.0 L504.0 290.6 M0.0 288.5 L9.9 295.6 L19.8 294.0 L29.6 296.8 L39.5 293.3 L49.4 295.1 L59.3 293.5 L69.2 294.4 L79.1 294.2 L88.9 295.1 L98.8 292.4 L108.7 296.5 L118.6 298.6 L128.5 290.5 L138.4 298.4 L148.2 295.1 L158.1 288.6 L168.0 299.0 L177.9 297.6 L187.8 299.2 L197.6 300.1 L207.5 294.1 L217.4 297.4 L227.3 296.1 L237.2 303.1 L247.1 294.7 L256.9 299.3 L266.8 304.0 L276.7 299.3 L286.6 302.7 L296.5 290.5 L306.4 303.0 L316.2 295.5 L326.1 300.6 L336.0 299.7 L345.9 301.5 L355.8 292.0 L365.6 300.8 L375.5 299.0 L385.4 295.7 L395.3 298.0 L405.2 293.9 L415.1 299.4 L424.9 302.8 L434.8 294.9 L444.7 292.0 L454.6 294.6 L464.5 299.8 L474.4 292.1 L484.2 293.6 L494.1 298.0 L504.0 294.9 M0.0 307.1 L9.9 306.5 L19.8 304.5 L29.6 303.6 L39.5 306.7 L49.4 306.7 L59.3 316.5 L69.2 310.1 L79.1 305.2 L88.9 310.1 L98.8 305.6 L108.7 307.7 L118.6 306.7 L128.5 306.6 L138.4 301.9 L148.2 305.1 L158.1 306.8 L168.0 311.5 L177.9 305.6 L187.8 311.1 L197.6 302.2 L207.5 309.7 L217.4 309.4 L227.3 307.6 L237.2 310.8 L247.1 305.1 L256.9 305.7 L266.8 309.6 L276.7 309.0 L286.6 299.9 L296.5 302.5 L306.4 304.9 L316.2 305.9 L326.1 301.2 L336.0 308.5 L345.9 308.0 L355.8 307.5 L365.6 311.0 L375.5 310.4 L385.4 299.9 L395.3 306.4 L405.2 310.4 L415.1 307.9 L424.9 308.8 L434.8 308.6 L444.7 307.2 L454.6 312.6 L464.5 313.9 L474.4 307.8 L484.2 307.9 L494.1 311.5 L504.0 307.4 M0.0 319.6 L9.9 316.6 L19.8 318.2 L29.6 313.1 L39.5 312.0 L49.4 314.8 L59.3 317.3 L69.2 314.1 L79.1 314.5 L88.9 315.6 L98.8 314.4 L108.7 318.8 L118.6 314.3 L128.5 315.3 L138.4 315.8 L148.2 318.0 L158.1 318.9 L168.0 315.1 L177.9 319.3 L187.8 321.5 L197.6 310.9 L207.5 312.8 L217.4 320.3 L227.3 312.0 L237.2 325.2 L247.1 315.0 L256.9 314.7 L266.8 316.4 L276.7 318.1 L286.6 314.3 L296.5 315.3 L306.4 321.7 L316.2 320.1 L326.1 313.5 L336.0 314.4 L345.9 321.7 L355.8 323.0 L365.6 315.6 L375.5 320.5 L385.4 320.1 L395.3 319.3 L405.2 316.4 L415.1 325.1 L424.9 314.3 L434.8 318.7 L444.7 313.8 L454.6 321.7 L464.5 320.7 L474.4 315.4 L484.2 313.5 L494.1 317.5 L504.0 318.6 M0.0 322.5 L9.9 323.5 L19.8 326.5 L29.6 328.7 L39.5 322.8 L49.4 325.0 L59.3 329.1 L69.2 322.0 L79.1 323.4 L88.9 326.8 L98.8 325.9 L108.7 324.7 L118.6 329.5 L128.5 332.4 L138.4 323.1 L148.2 334.0 L158.1 333.6 L168.0 333.2 L177.9 325.8 L187.8 323.7 L197.6 330.2 L207.5 322.6 L217.4 321.3 L227.3 322.4 L237.2 332.7 L247.1 322.6 L256.9 318.8 L266.8 331.2 L276.7 334.0 L286.6 322.7 L296.5 325.7 L306.4 327.8 L316.2 327.9 L326.1 334.4 L336.0 331.0 L345.9 326.9 L355.8 325.9 L365.6 324.1 L375.5 324.0 L385.4 329.5 L395.3 328.0 L405.2 322.2 L415.1 333.0 L424.9 325.6 L434.8 331.0 L444.7 326.9 L454.6 320.5 L464.5 326.1 L474.4 329.4 L484.2 330.4 L494.1 333.2 L504.0 327.8 M0.0 50.6 L0.0 55.9 L0.0 72.6 L0.0 80.3 L0.0 89.4 L0.0 101.1 L0.0 110.6 L0.0 118.8 L0.0 129.4 L0.0 148.6 L0.0 149.2 L0.0 167.4 L0.0 170.4 L0.0 179.0 L0.0 193.6 L0.0 203.6 L0.0 210.0 L0.0 226.4 L0.0 239.3 L0.0 241.7 L0.0 256.4 L0.0 261.8 L0.0 265.1 L0.0 284.5 L0.0 288.5 L0.0 307.1 L0.0 319.6 L0.0 322.5 M9.9 50.5 L9.9 60.6 L9.9 71.0 L9.9 70.9 L9.9 86.8 L9.9 100.4 L9.9 113.9 L9.9 119.3 L9.9 131.9 L9.9 139.2 L9.9 147.3 L9.9 159.1 L9.9 175.2 L9.9 189.6 L9.9 190.0 L9.9 209.6 L9.9 211.0 L9.9 222.4 L9.9 238.4 L9.9 247.4 L9.9 256.9 L9.9 268.2 L9.9 267.7 L9.9 292.7 L9.9 295.6 L9.9 306.5 L9.9 316.6 L9.9 323.5 M19.8 45.0 L19.8 58.8 L19.8 70.9 L19.8 80.7 L19.8 88.3 L19.8 95.2 L19.8 116.6 L19.8 124.6 L19.8 132.4 L19.8 136.9 L19.8 154.4 L19.8 166.2 L19.8 162.7 L19.8 184.1 L19.8 198.1 L19.8 201.1 L19.8 208.9 L19.8 226.8 L19.8 230.1 L19.8 242.7 L19.8 252.2 L19.8 262.2 L19.8 274.2 L19.8 285.6 L19.8 294.0 L19.8 304.5 L19.8 318.2 L19.8 326.5 M29.6 54.0 L29.6 54.2 L29.6 66.9 L29.6 81.6 L29.6 87.8 L29.6 99.5 L29.6 108.6 L29.6 122.3 L29.6 132.4 L29.6 137.2 L29.6 148.6 L29.6 168.5 L29.6 168.7 L29.6 187.1 L29.6 197.9 L29.6 208.4 L29.6 213.8 L29.6 223.2 L29.6 232.7 L29.6 246.0 L29.6 251.6 L29.6 263.0 L29.6 274.1 L29.6 287.2 L29.6 296.8 L29.6 303.6 L29.6 313.1 L29.6 328.7 M39.5 47.4 L39.5 57.7 L39.5 61.3 L39.5 74.2 L39.5 91.6 L39.5 101.4 L39.5 111.9 L39.5 118.5 L39.5 129.9 L39.5 141.9 L39.5 148.4 L39.5 162.1 L39.5 167.3 L39.5 188.4 L39.5 190.1 L39.5 195.0 L39.5 219.8 L39.5 224.7 L39.5 230.6 L39.5 243.8 L39.5 256.6 L39.5 265.3 L39.5 272.2 L39.5 290.6 L39.5 293.3 L39.5 306.7 L39.5 312.0 L39.5 322.8 M49.4 53.9 L49.4 58.4 L49.4 65.4 L49.4 77.9 L49.4 87.9 L49.4 97.6 L49.4 107.3 L49.4 121.0 L49.4 127.2 L49.4 135.7 L49.4 149.5 L49.4 166.7 L49.4 170.9 L49.4 183.6 L49.4 188.2 L49.4 207.2 L49.4 207.8 L49.4 225.4 L49.4 233.3 L49.4 243.7 L49.4 258.8 L49.4 264.5 L49.4 273.5 L49.4 287.2 L49.4 295.1 L49.4 306.7 L49.4 314.8 L49.4 325.0 M59.3 43.7 L59.3 56.7 L59.3 64.2 L59.3 78.2 L59.3 91.9 L59.3 95.3 L59.3 108.1 L59.3 122.4 L59.3 132.5 L59.3 140.9 L59.3 147.7 L59.3 162.1 L59.3 179.0 L59.3 185.3 L59.3 192.3 L59.3 209.6 L59.3 210.5 L59.3 221.8 L59.3 234.6 L59.3 244.9 L59.3 262.5 L59.3 268.3 L59.3 281.4 L59.3 284.3 L59.3 293.5 L59.3 316.5 L59.3 317.3 L59.3 329.1 M69.2 46.4 L69.2 57.5 L69.2 67.1 L69.2 73.5 L69.2 91.4 L69.2 99.4 L69.2 111.1 L69.2 118.6 L69.2 132.2 L69.2 142.6 L69.2 148.3 L69.2 155.1 L69.2 171.0 L69.2 178.6 L69.2 195.1 L69.2 209.6 L69.2 211.5 L69.2 220.2 L69.2 233.6 L69.2 249.4 L69.2 258.7 L69.2 266.7 L69.2 281.0 L69.2 284.4 L69.2 294.4 L69.2 310.1 L69.2 314.1 L69.2 322.0 M79.1 42.9 L79.1 57.4 L79.1 66.9 L79.1 83.9 L79.1 88.1 L79.1 99.8 L79.1 111.2 L79.1 122.9 L79.1 131.6 L79.1 140.4 L79.1 146.9 L79.1 162.8 L79.1 173.7 L79.1 184.0 L79.1 188.3 L79.1 201.7 L79.1 213.3 L79.1 220.6 L79.1 235.4 L79.1 243.5 L79.1 253.2 L79.1 261.8 L79.1 272.7 L79.1 278.6 L79.1 294.2 L79.1 305.2 L79.1 314.5 L79.1 323.4 M88.9 48.5 L88.9 63.3 L88.9 69.2 L88.9 76.9 L88.9 81.7 L88.9 95.4 L88.9 103.5 L88.9 122.1 L88.9 129.0 L88.9 139.9 L88.9 153.2 L88.9 160.2 L88.9 170.3 L88.9 186.1 L88.9 190.8 L88.9 202.0 L88.9 213.7 L88.9 222.2 L88.9 230.3 L88.9 244.5 L88.9 252.6 L88.9 262.5 L88.9 270.7 L88.9 287.4 L88.9 295.1 L88.9 310.1 L88.9 315.6 L88.9 326.8 M98.8 45.8 L98.8 52.0 L98.8 68.7 L98.8 81.6 L98.8 85.3 L98.8 95.8 L98.8 103.7 L98.8 116.8 L98.8 127.8 L98.8 140.4 L98.8 149.5 L98.8 159.5 L98.8 172.2 L98.8 182.5 L98.8 189.1 L98.8 200.7 L98.8 213.1 L98.8 217.7 L98.8 239.0 L98.8 242.6 L98.8 259.7 L98.8 256.9 L98.8 271.8 L98.8 285.7 L98.8 292.4 L98.8 305.6 L98.8 314.4 L98.8 325.9 M108.7 47.9 L108.7 56.8 L108.7 75.4 L108.7 82.7 L108.7 88.6 L108.7 95.9 L108.7 106.9 L108.7 121.0 L108.7 134.4 L108.7 139.2 L108.7 152.9 L108.7 160.6 L108.7 169.5 L108.7 180.8 L108.7 199.0 L108.7 202.0 L108.7 216.8 L108.7 228.4 L108.7 241.2 L108.7 248.5 L108.7 254.8 L108.7 269.2 L108.7 272.7 L108.7 278.9 L108.7 296.5 L108.7 307.7 L108.7 318.8 L108.7 324.7 M118.6 49.2 L118.6 60.1 L118.6 71.5 L118.6 80.8 L118.6 89.2 L118.6 101.5 L118.6 110.6 L118.6 115.0 L118.6 129.0 L118.6 148.0 L118.6 146.8 L118.6 161.8 L118.6 174.8 L118.6 179.4 L118.6 193.1 L118.6 205.8 L118.6 210.6 L118.6 223.6 L118.6 237.3 L118.6 243.9 L118.6 251.1 L118.6 267.1 L118.6 275.8 L118.6 288.4 L118.6 298.6 L118.6 306.7 L118.6 314.3 L118.6 329.5 M128.5 46.6 L128.5 54.4 L128.5 71.8 L128.5 74.5 L128.5 85.4 L128.5 98.1 L128.5 112.7 L128.5 118.0 L128.5 133.6 L128.5 135.3 L128.5 150.5 L128.5 156.2 L128.5 173.1 L128.5 180.5 L128.5 196.3 L128.5 200.2 L128.5 213.1 L128.5 223.1 L128.5 230.9 L128.5 245.4 L128.5 257.8 L128.5 265.0 L128.5 272.2 L128.5 289.3 L128.5 290.5 L128.5 306.6 L128.5 315.3 L128.5 332.4 M138.4 50.8 L138.4 56.4 L138.4 65.2 L138.4 78.7 L138.4 84.1 L138.4 97.8 L138.4 110.7 L138.4 117.1 L138.4 127.8 L138.4 142.5 L138.4 155.4 L138.4 161.7 L138.4 171.8 L138.4 187.4 L138.4 196.5 L138.4 205.5 L138.4 216.9 L138.4 219.4 L138.4 236.2 L138.4 246.2 L138.4 257.1 L138.4 265.2 L138.4 269.9 L138.4 287.9 L138.4 298.4 L138.4 301.9 L138.4 315.8 L138.4 323.1 M148.2 48.1 L148.2 57.3 L148.2 65.7 L148.2 84.1 L148.2 84.6 L148.2 104.9 L148.2 103.9 L148.2 116.0 L148.2 133.4 L148.2 138.4 L148.2 150.6 L148.2 160.2 L148.2 174.4 L148.2 185.1 L148.2 190.6 L148.2 208.4 L148.2 212.5 L148.2 232.1 L148.2 242.7 L148.2 245.6 L148.2 258.4 L148.2 267.3 L148.2 273.8 L148.2 288.4 L148.2 295.1 L148.2 305.1 L148.2 318.0 L148.2 334.0 M158.1 44.9 L158.1 54.2 L158.1 64.2 L158.1 81.8 L158.1 89.2 L158.1 95.0 L158.1 107.9 L158.1 127.1 L158.1 133.8 L158.1 143.3 L158.1 154.4 L158.1 161.0 L158.1 173.4 L158.1 182.9 L158.1 190.1 L158.1 199.8 L158.1 214.6 L158.1 225.4 L158.1 223.7 L158.1 245.5 L158.1 253.5 L158.1 267.0 L158.1 271.1 L158.1 286.3 L158.1 288.6 L158.1 306.8 L158.1 318.9 L158.1 333.6 M168.0 46.8 L168.0 50.4 L168.0 63.0 L168.0 73.3 L168.0 88.0 L168.0 98.7 L168.0 110.4 L168.0 120.1 L168.0 132.6 L168.0 140.0 L168.0 147.6 L168.0 165.8 L168.0 169.7 L168.0 185.2 L168.0 194.3 L168.0 201.2 L168.0 213.5 L168.0 225.0 L168.0 237.6 L168.0 249.7 L168.0 262.1 L168.0 265.8 L168.0 271.2 L168.0 285.6 L168.0 299.0 L168.0 311.5 L168.0 315.1 L168.0 333.2 M177.9 48.2 L177.9 55.7 L177.9 68.8 L177.9 74.9 L177.9 89.7 L177.9 100.1 L177.9 113.5 L177.9 124.1 L177.9 130.4 L177.9 141.2 L177.9 152.2 L177.9 160.3 L177.9 165.1 L177.9 179.6 L177.9 193.5 L177.9 206.4 L177.9 211.5 L177.9 223.1 L177.9 234.9 L177.9 246.6 L177.9 255.5 L177.9 260.6 L177.9 278.5 L177.9 289.1 L177.9 297.6 L177.9 305.6 L177.9 319.3 L177.9 325.8 M187.8 40.3 L187.8 52.5 L187.8 64.5 L187.8 81.7 L187.8 89.5 L187.8 91.5 L187.8 108.8 L187.8 121.4 L187.8 133.5 L187.8 145.9 L187.8 158.5 L187.8 161.2 L187.8 172.5 L187.8 183.4 L187.8 187.8 L187.8 203.9 L187.8 203.7 L187.8 215.5 L187.8 232.1 L187.8 246.3 L187.8 253.3 L187.8 265.8 L187.8 271.4 L187.8 290.5 L187.8 299.2 L187.8 311.1 L187.8 321.5 L187.8 323.7 M197.6 46.8 L197.6 50.8 L197.6 61.7 L197.6 70.4 L197.6 91.4 L197.6 98.5 L197.6 112.3 L197.6 120.1 L197.6 129.5 L197.6 139.3 L197.6 152.3 L197.6 159.2 L197.6 169.0 L197.6 182.5 L197.6 190.4 L197.6 199.4 L197.6 217.3 L197.6 222.9 L197.6 232.8 L197.6 242.9 L197.6 255.2 L197.6 268.2 L197.6 278.7 L197.6 286.4 L197.6 300.1 L197.6 302.2 L197.6 310.9 L197.6 330.2 M207.5 48.8 L207.5 60.5 L207.5 67.8 L207.5 79.4 L207.5 89.4 L207.5 101.4 L207.5 109.4 L207.5 115.6 L207.5 129.7 L207.5 138.5 L207.5 147.5 L207.5 159.0 L207.5 175.7 L207.5 183.5 L207.5 193.1 L207.5 199.7 L207.5 211.9 L207.5 224.2 L207.5 234.8 L207.5 245.2 L207.5 251.4 L207.5 264.2 L207.5 279.2 L207.5 290.8 L207.5 294.1 L207.5 309.7 L207.5 312.8 L207.5 322.6 M217.4 46.5 L217.4 59.0 L217.4 64.4 L217.4 82.0 L217.4 95.6 L217.4 99.2 L217.4 106.9 L217.4 119.9 L217.4 129.9 L217.4 144.4 L217.4 149.9 L217.4 155.9 L217.4 173.1 L217.4 181.6 L217.4 190.5 L217.4 206.8 L217.4 210.9 L217.4 222.2 L217.4 240.0 L217.4 239.3 L217.4 252.7 L217.4 275.2 L217.4 269.7 L217.4 289.3 L217.4 297.4 L217.4 309.4 L217.4 320.3 L217.4 321.3 M227.3 48.6 L227.3 55.0 L227.3 68.3 L227.3 78.6 L227.3 92.5 L227.3 97.1 L227.3 105.8 L227.3 114.3 L227.3 129.3 L227.3 147.7 L227.3 153.0 L227.3 166.7 L227.3 166.0 L227.3 180.1 L227.3 187.5 L227.3 197.8 L227.3 211.8 L227.3 220.2 L227.3 232.3 L227.3 242.4 L227.3 256.9 L227.3 268.6 L227.3 282.0 L227.3 284.9 L227.3 296.1 L227.3 307.6 L227.3 312.0 L227.3 322.4 M237.2 48.2 L237.2 62.7 L237.2 72.8 L237.2 75.2 L237.2 87.2 L237.2 96.3 L237.2 108.9 L237.2 121.6 L237.2 127.3 L237.2 142.8 L237.2 148.0 L237.2 156.1 L237.2 142.0 L237.2 131.1 L237.2 168.7 L237.2 204.7 L237.2 207.2 L237.2 224.4 L237.2 237.8 L237.2 243.4 L237.2 258.7 L237.2 267.8 L237.2 276.5 L237.2 286.5 L237.2 303.1 L237.2 310.8 L237.2 325.2 L237.2 332.7 M247.1 48.1 L247.1 58.2 L247.1 67.4 L247.1 73.0 L247.1 91.6 L247.1 99.2 L247.1 110.5 L247.1 120.0 L247.1 132.7 L247.1 143.4 L247.1 147.1 L247.1 145.4 L247.1 107.8 L247.1 77.7 L247.1 125.4 L247.1 184.3 L247.1 212.9 L247.1 217.6 L247.1 234.9 L247.1 243.8 L247.1 258.9 L247.1 264.2 L247.1 272.4 L247.1 290.0 L247.1 294.7 L247.1 305.1 L247.1 315.0 L247.1 322.6 M256.9 40.8 L256.9 53.4 L256.9 70.4 L256.9 74.9 L256.9 86.8 L256.9 101.9 L256.9 108.6 L256.9 119.5 L256.9 130.2 L256.9 140.1 L256.9 144.1 L256.9 146.7 L256.9 102.2 L256.9 78.3 L256.9 122.6 L256.9 183.3 L256.9 212.6 L256.9 228.2 L256.9 231.4 L256.9 249.9 L256.9 253.2 L256.9 274.0 L256.9 274.3 L256.9 291.6 L256.9 299.3 L256.9 305.7 L256.9 314.7 L256.9 318.8 M266.8 46.9 L266.8 54.2 L266.8 67.5 L266.8 79.6 L266.8 92.8 L266.8 101.3 L266.8 103.4 L266.8 116.6 L266.8 130.3 L266.8 140.6 L266.8 147.1 L266.8 152.7 L266.8 143.5 L266.8 144.6 L266.8 162.1 L266.8 195.9 L266.8 212.6 L266.8 219.2 L266.8 235.6 L266.8 243.3 L266.8 255.5 L266.8 266.2 L266.8 277.2 L266.8 290.0 L266.8 304.0 L266.8 309.6 L266.8 316.4 L266.8 331.2 M276.7 46.5 L276.7 55.6 L276.7 69.2 L276.7 80.0 L276.7 89.8 L276.7 101.7 L276.7 108.1 L276.7 120.0 L276.7 137.1 L276.7 135.1 L276.7 149.6 L276.7 160.4 L276.7 162.6 L276.7 175.1 L276.7 192.1 L276.7 201.4 L276.7 218.2 L276.7 221.2 L276.7 240.8 L276.7 239.9 L276.7 254.6 L276.7 269.4 L276.7 279.3 L276.7 291.8 L276.7 299.3 L276.7 309.0 L276.7 318.1 L276.7 334.0 M286.6 45.0 L286.6 63.2 L286.6 66.8 L286.6 82.9 L286.6 87.3 L286.6 102.5 L286.6 114.1 L286.6 121.9 L286.6 128.9 L286.6 138.4 L286.6 153.7 L286.6 160.8 L286.6 168.2 L286.6 186.5 L286.6 195.1 L286.6 208.7 L286.6 209.4 L286.6 220.2 L286.6 236.4 L286.6 248.4 L286.6 258.4 L286.6 261.7 L286.6 273.9 L286.6 284.2 L286.6 302.7 L286.6 299.9 L286.6 314.3 L286.6 322.7 M296.5 40.9 L296.5 50.2 L296.5 74.5 L296.5 78.4 L296.5 92.0 L296.5 99.1 L296.5 104.2 L296.5 120.9 L296.5 132.8 L296.5 141.5 L296.5 150.0 L296.5 167.0 L296.5 169.9 L296.5 181.1 L296.5 194.7 L296.5 203.5 L296.5 217.9 L296.5 218.1 L296.5 232.0 L296.5 239.7 L296.5 250.7 L296.5 262.4 L296.5 273.8 L296.5 283.4 L296.5 290.5 L296.5 302.5 L296.5 315.3 L296.5 325.7 M306.4 47.7 L306.4 55.7 L306.4 61.3 L306.4 80.1 L306.4 90.9 L306.4 100.6 L306.4 108.6 L306.4 124.5 L306.4 132.6 L306.4 140.1 L306.4 150.0 L306.4 164.7 L306.4 173.2 L306.4 178.1 L306.4 198.0 L306.4 201.3 L306.4 211.4 L306.4 224.7 L306.4 231.6 L306.4 242.3 L306.4 251.8 L306.4 267.1 L306.4 276.1 L306.4 285.1 L306.4 303.0 L306.4 304.9 L306.4 321.7 L306.4 327.8 M316.2 48.9 L316.2 55.0 L316.2 63.6 L316.2 77.4 L316.2 80.5 L316.2 98.8 L316.2 97.8 L316.2 115.6 L316.2 131.7 L316.2 150.4 L316.2 151.0 L316.2 161.6 L316.2 170.9 L316.2 180.1 L316.2 188.8 L316.2 206.3 L316.2 209.1 L316.2 222.3 L316.2 239.0 L316.2 243.5 L316.2 252.2 L316.2 263.6 L316.2 279.5 L316.2 285.0 L316.2 295.5 L316.2 305.9 L316.2 320.1 L316.2 327.9 M326.1 39.5 L326.1 55.9 L326.1 68.9 L326.1 82.3 L326.1 90.8 L326.1 101.7 L326.1 111.0 L326.1 117.3 L326.1 129.9 L326.1 143.7 L326.1 149.6 L326.1 162.9 L326.1 174.8 L326.1 183.8 L326.1 191.1 L326.1 202.6 L326.1 216.4 L326.1 222.8 L326.1 234.0 L326.1 246.2 L326.1 259.2 L326.1 269.8 L326.1 281.2 L326.1 288.1 L326.1 300.6 L326.1 301.2 L326.1 313.5 L326.1 334.4 M336.0 51.4 L336.0 62.7 L336.0 70.6 L336.0 79.9 L336.0 90.9 L336.0 101.9 L336.0 109.7 L336.0 118.4 L336.0 129.1 L336.0 143.7 L336.0 155.0 L336.0 163.5 L336.0 174.7 L336.0 177.8 L336.0 188.1 L336.0 203.6 L336.0 214.0 L336.0 226.0 L336.0 233.1 L336.0 244.5 L336.0 245.3 L336.0 264.6 L336.0 275.8 L336.0 285.6 L336.0 299.7 L336.0 308.5 L336.0 314.4 L336.0 331.0 M345.9 48.1 L345.9 61.8 L345.9 67.8 L345.9 81.0 L345.9 90.5 L345.9 99.6 L345.9 110.4 L345.9 118.9 L345.9 128.6 L345.9 141.0 L345.9 149.1 L345.9 161.8 L345.9 178.2 L345.9 182.9 L345.9 200.3 L345.9 211.1 L345.9 214.1 L345.9 226.6 L345.9 230.2 L345.9 247.5 L345.9 251.9 L345.9 264.4 L345.9 276.0 L345.9 286.0 L345.9 301.5 L345.9 308.0 L345.9 321.7 L345.9 326.9 M355.8 45.0 L355.8 61.1 L355.8 65.7 L355.8 82.1 L355.8 88.5 L355.8 100.2 L355.8 108.1 L355.8 121.8 L355.8 132.5 L355.8 139.5 L355.8 151.0 L355.8 162.3 L355.8 176.3 L355.8 182.4 L355.8 195.5 L355.8 205.2 L355.8 207.2 L355.8 226.7 L355.8 232.7 L355.8 244.7 L355.8 259.0 L355.8 261.4 L355.8 272.7 L355.8 286.0 L355.8 292.0 L355.8 307.5 L355.8 323.0 L355.8 325.9 M365.6 40.1 L365.6 51.5 L365.6 66.5 L365.6 82.0 L365.6 88.7 L365.6 95.2 L365.6 111.3 L365.6 121.2 L365.6 127.9 L365.6 139.9 L365.6 149.8 L365.6 165.0 L365.6 176.2 L365.6 182.0 L365.6 186.3 L365.6 201.0 L365.6 212.5 L365.6 220.7 L365.6 233.6 L365.6 244.4 L365.6 251.4 L365.6 267.0 L365.6 277.0 L365.6 288.0 L365.6 300.8 L365.6 311.0 L365.6 315.6 L365.6 324.1 M375.5 49.9 L375.5 60.0 L375.5 66.5 L375.5 81.5 L375.5 85.4 L375.5 102.0 L375.5 114.3 L375.5 117.1 L375.5 128.8 L375.5 137.4 L375.5 151.3 L375.5 155.7 L375.5 172.2 L375.5 183.9 L375.5 197.6 L375.5 208.6 L375.5 219.8 L375.5 232.1 L375.5 235.3 L375.5 244.4 L375.5 255.5 L375.5 273.4 L375.5 272.4 L375.5 290.3 L375.5 299.0 L375.5 310.4 L375.5 320.5 L375.5 324.0 M385.4 54.4 L385.4 58.1 L385.4 73.9 L385.4 82.0 L385.4 86.0 L385.4 98.3 L385.4 115.8 L385.4 122.4 L385.4 131.5 L385.4 142.9 L385.4 152.0 L385.4 163.7 L385.4 171.5 L385.4 180.8 L385.4 199.1 L385.4 203.0 L385.4 209.5 L385.4 228.5 L385.4 232.5 L385.4 249.1 L385.4 257.9 L385.4 262.4 L385.4 280.3 L385.4 285.1 L385.4 295.7 L385.4 299.9 L385.4 320.1 L385.4 329.5 M395.3 45.0 L395.3 58.2 L395.3 71.3 L395.3 76.4 L395.3 89.9 L395.3 99.1 L395.3 109.8 L395.3 122.4 L395.3 130.3 L395.3 139.6 L395.3 150.1 L395.3 159.2 L395.3 176.4 L395.3 186.5 L395.3 191.9 L395.3 201.9 L395.3 209.7 L395.3 223.5 L395.3 231.3 L395.3 241.2 L395.3 257.8 L395.3 269.4 L395.3 282.3 L395.3 284.7 L395.3 298.0 L395.3 306.4 L395.3 319.3 L395.3 328.0 M405.2 48.6 L405.2 55.6 L405.2 63.6 L405.2 77.9 L405.2 89.8 L405.2 103.3 L405.2 111.1 L405.2 114.5 L405.2 127.5 L405.2 141.0 L405.2 148.3 L405.2 159.4 L405.2 172.1 L405.2 188.4 L405.2 187.1 L405.2 207.6 L405.2 220.6 L405.2 219.0 L405.2 234.8 L405.2 247.0 L405.2 253.2 L405.2 267.4 L405.2 272.3 L405.2 290.4 L405.2 293.9 L405.2 310.4 L405.2 316.4 L405.2 322.2 M415.1 48.2 L415.1 55.9 L415.1 67.1 L415.1 82.5 L415.1 93.2 L415.1 96.6 L415.1 111.3 L415.1 114.6 L415.1 128.7 L415.1 140.6 L415.1 152.1 L415.1 158.1 L415.1 170.4 L415.1 178.1 L415.1 190.4 L415.1 203.9 L415.1 223.2 L415.1 224.2 L415.1 235.2 L415.1 243.1 L415.1 253.9 L415.1 266.7 L415.1 277.4 L415.1 287.1 L415.1 299.4 L415.1 307.9 L415.1 325.1 L415.1 333.0 M424.9 45.6 L424.9 56.6 L424.9 72.5 L424.9 76.5 L424.9 93.5 L424.9 98.4 L424.9 102.4 L424.9 118.8 L424.9 127.9 L424.9 139.5 L424.9 149.9 L424.9 163.4 L424.9 168.6 L424.9 184.8 L424.9 196.0 L424.9 199.9 L424.9 204.0 L424.9 219.2 L424.9 227.8 L424.9 242.4 L424.9 254.2 L424.9 259.2 L424.9 279.0 L424.9 286.3 L424.9 302.8 L424.9 308.8 L424.9 314.3 L424.9 325.6 M434.8 46.3 L434.8 61.3 L434.8 70.5 L434.8 77.3 L434.8 91.0 L434.8 105.9 L434.8 106.8 L434.8 118.0 L434.8 129.8 L434.8 141.6 L434.8 153.6 L434.8 164.8 L434.8 172.1 L434.8 183.5 L434.8 190.7 L434.8 200.5 L434.8 213.1 L434.8 224.0 L434.8 234.4 L434.8 245.4 L434.8 255.8 L434.8 265.6 L434.8 276.3 L434.8 284.3 L434.8 294.9 L434.8 308.6 L434.8 318.7 L434.8 331.0 M444.7 46.1 L444.7 67.1 L444.7 72.3 L444.7 73.5 L444.7 86.2 L444.7 97.0 L444.7 105.8 L444.7 119.2 L444.7 126.4 L444.7 139.9 L444.7 149.6 L444.7 159.9 L444.7 171.1 L444.7 181.1 L444.7 191.2 L444.7 206.6 L444.7 221.1 L444.7 225.8 L444.7 237.1 L444.7 235.5 L444.7 258.8 L444.7 261.1 L444.7 280.4 L444.7 292.6 L444.7 292.0 L444.7 307.2 L444.7 313.8 L444.7 326.9 M454.6 48.3 L454.6 56.9 L454.6 71.0 L454.6 78.8 L454.6 88.2 L454.6 95.9 L454.6 111.1 L454.6 115.0 L454.6 122.8 L454.6 140.7 L454.6 150.9 L454.6 160.5 L454.6 173.1 L454.6 183.9 L454.6 191.7 L454.6 199.4 L454.6 209.6 L454.6 229.5 L454.6 231.7 L454.6 244.2 L454.6 254.1 L454.6 265.1 L454.6 277.1 L454.6 291.5 L454.6 294.6 L454.6 312.6 L454.6 321.7 L454.6 320.5 M464.5 43.1 L464.5 56.6 L464.5 64.1 L464.5 78.9 L464.5 86.0 L464.5 101.6 L464.5 108.4 L464.5 121.3 L464.5 128.7 L464.5 137.1 L464.5 155.4 L464.5 169.5 L464.5 168.6 L464.5 186.4 L464.5 191.3 L464.5 201.8 L464.5 208.3 L464.5 223.1 L464.5 238.8 L464.5 243.0 L464.5 256.0 L464.5 270.6 L464.5 281.0 L464.5 291.4 L464.5 299.8 L464.5 313.9 L464.5 320.7 L464.5 326.1 M474.4 42.4 L474.4 53.6 L474.4 68.5 L474.4 80.4 L474.4 85.5 L474.4 93.4 L474.4 110.1 L474.4 119.5 L474.4 135.6 L474.4 141.0 L474.4 147.0 L474.4 170.4 L474.4 177.2 L474.4 182.9 L474.4 189.7 L474.4 202.6 L474.4 222.0 L474.4 217.5 L474.4 238.2 L474.4 245.5 L474.4 255.8 L474.4 263.7 L474.4 275.1 L474.4 290.9 L474.4 292.1 L474.4 307.8 L474.4 315.4 L474.4 329.4 M484.2 46.9 L484.2 57.7 L484.2 64.3 L484.2 77.8 L484.2 89.1 L484.2 98.5 L484.2 110.1 L484.2 118.2 L484.2 124.4 L484.2 139.6 L484.2 154.0 L484.2 163.3 L484.2 171.0 L484.2 185.5 L484.2 188.6 L484.2 197.7 L484.2 208.8 L484.2 223.5 L484.2 230.8 L484.2 243.4 L484.2 252.7 L484.2 263.5 L484.2 278.0 L484.2 290.3 L484.2 293.6 L484.2 307.9 L484.2 313.5 L484.2 330.4 M494.1 48.4 L494.1 59.3 L494.1 67.2 L494.1 76.6 L494.1 81.7 L494.1 102.8 L494.1 106.9 L494.1 115.0 L494.1 132.1 L494.1 131.8 L494.1 150.7 L494.1 162.7 L494.1 179.8 L494.1 180.3 L494.1 187.8 L494.1 200.4 L494.1 210.9 L494.1 227.6 L494.1 234.1 L494.1 249.3 L494.1 248.7 L494.1 267.5 L494.1 276.0 L494.1 283.0 L494.1 298.0 L494.1 311.5 L494.1 317.5 L494.1 333.2 M504.0 44.8 L504.0 56.1 L504.0 72.5 L504.0 77.6 L504.0 90.3 L504.0 97.1 L504.0 107.4 L504.0 120.6 L504.0 134.8 L504.0 138.5 L504.0 155.5 L504.0 162.3 L504.0 165.9 L504.0 183.8 L504.0 188.9 L504.0 201.7 L504.0 213.5 L504.0 221.7 L504.0 231.3 L504.0 242.2 L504.0 257.3 L504.0 271.2 L504.0 275.8 L504.0 290.6 L504.0 294.9 L504.0 307.4 L504.0 318.6 L504.0 327.8" stroke="#000" stroke-width="2" fill="none" stroke-linejoin="round"/><path d="M59.3 43.7L69.2 57.5 M79.1 42.9L69.2 57.5 M108.7 47.9L98.8 52.0 M138.4 50.8L128.5 54.4 M148.2 48.1L138.4 56.4 M148.2 48.1L158.1 54.2 M187.8 40.3L177.9 55.7 M256.9 40.8L247.1 58.2 M266.8 46.9L256.9 53.4 M296.5 40.9L286.6 63.2 M395.3 45.0L385.4 58.1 M415.1 48.2L405.2 55.6 M59.3 56.7L49.4 65.4 M79.1 57.4L69.2 67.1 M98.8 52.0L88.9 69.2 M138.4 56.4L148.2 65.7 M148.2 57.3L158.1 64.2 M227.3 55.0L217.4 64.4 M247.1 58.2L256.9 70.4 M395.3 58.2L385.4 73.9 M415.1 55.9L405.2 63.6 M434.8 61.3L424.9 72.5 M454.6 56.9L444.7 72.3 M464.5 56.6L454.6 71.0 M484.2 57.7L474.4 68.5 M9.9 71.0L0.0 80.3 M69.2 67.1L79.1 83.9 M138.4 65.2L148.2 84.1 M256.9 70.4L266.8 79.6 M276.7 69.2L286.6 82.9 M296.5 74.5L286.6 82.9 M405.2 63.6L415.1 82.5 M464.5 64.1L454.6 78.8 M19.8 80.7L9.9 86.8 M168.0 73.3L177.9 89.7 M207.5 79.4L197.6 91.4 M336.0 79.9L326.1 90.8 M345.9 81.0L336.0 90.9 M415.1 82.5L424.9 93.5 M434.8 77.3L444.7 86.2 M454.6 78.8L444.7 86.2 M0.0 89.4L9.9 100.4 M29.6 87.8L19.8 95.2 M79.1 88.1L69.2 99.4 M108.7 88.6L118.6 101.5 M148.2 84.6L138.4 97.8 M247.1 91.6L237.2 96.3 M326.1 90.8L316.2 98.8 M336.0 90.9L326.1 101.7 M336.0 90.9L345.9 99.6 M365.6 88.7L355.8 100.2 M375.5 85.4L385.4 98.3 M405.2 89.8L395.3 99.1 M444.7 86.2L454.6 95.9 M484.2 89.1L474.4 93.4 M9.9 100.4L0.0 110.6 M9.9 100.4L19.8 116.6 M29.6 99.5L19.8 116.6 M69.2 99.4L79.1 111.2 M187.8 91.5L177.9 113.5 M227.3 97.1L217.4 106.9 M247.1 99.2L237.2 108.9 M326.1 101.7L336.0 109.7 M345.9 99.6L336.0 109.7 M415.1 96.6L405.2 111.1 M424.9 98.4L415.1 111.3 M494.1 102.8L504.0 107.4 M19.8 116.6L9.9 119.3 M19.8 116.6L29.6 122.3 M197.6 112.3L187.8 121.4 M207.5 109.4L197.6 120.1 M247.1 110.5L237.2 121.6 M306.4 108.6L316.2 115.6 M316.2 97.8L326.1 117.3 M375.5 114.3L385.4 122.4 M9.9 119.3L0.0 129.4 M128.5 118.0L138.4 127.8 M197.6 120.1L187.8 133.5 M217.4 119.9L227.3 129.3 M256.9 119.5L266.8 130.3 M266.8 116.6L276.7 137.1 M296.5 120.9L306.4 132.6 M336.0 118.4L345.9 128.6 M375.5 117.1L385.4 131.5 M494.1 115.0L484.2 124.4 M98.8 127.8L108.7 139.2 M128.5 133.6L138.4 142.5 M217.4 129.9L227.3 147.7 M227.3 129.3L237.2 142.8 M247.1 132.7L237.2 142.8 M316.2 131.7L326.1 143.7 M385.4 131.5L395.3 139.6 M424.9 127.9L415.1 140.6 M444.7 126.4L434.8 141.6 M474.4 135.6L484.2 139.6 M79.1 140.4L69.2 148.3 M98.8 140.4L108.7 152.9 M148.2 138.4L158.1 154.4 M217.4 144.4L227.3 153.0 M247.1 143.4L237.2 148.0 M316.2 150.4L306.4 150.0 M345.9 141.0L355.8 151.0 M385.4 142.9L375.5 151.3 M444.7 139.9L434.8 153.6 M454.6 140.7L444.7 149.6 M464.5 137.1L474.4 147.0 M9.9 147.3L0.0 167.4 M19.8 154.4L29.6 168.5 M88.9 153.2L98.8 159.5 M207.5 147.5L197.6 159.2 M247.1 147.1L237.2 156.1 M444.7 149.6L434.8 164.8 M494.1 150.7L484.2 163.3 M504.0 155.5L494.1 162.7 M19.8 166.2L9.9 175.2 M29.6 168.5L39.5 167.3 M168.0 165.8L158.1 173.4 M197.6 159.2L187.8 172.5 M286.6 160.8L276.7 162.6 M286.6 160.8L296.5 169.9 M355.8 162.3L365.6 176.2 M385.4 163.7L375.5 172.2 M415.1 158.1L424.9 168.6 M49.4 170.9L59.3 185.3 M98.8 172.2L88.9 186.1 M118.6 174.8L108.7 180.8 M138.4 171.8L148.2 185.1 M158.1 173.4L168.0 185.2 M227.3 166.0L217.4 181.6 M247.1 107.8L237.2 131.1 M276.7 162.6L286.6 186.5 M365.6 176.2L355.8 182.4 M405.2 172.1L395.3 186.5 M434.8 172.1L444.7 181.1 M39.5 188.4L49.4 188.2 M88.9 186.1L98.8 189.1 M187.8 183.4L197.6 190.4 M207.5 183.5L217.4 190.5 M424.9 184.8L415.1 190.4 M424.9 184.8L434.8 190.7 M19.8 198.1L9.9 209.6 M39.5 190.1L29.6 208.4 M197.6 190.4L187.8 203.9 M217.4 190.5L207.5 199.7 M256.9 122.6L247.1 184.3 M266.8 162.1L256.9 183.3 M326.1 191.1L336.0 203.6 M355.8 195.5L345.9 211.1 M395.3 191.9L405.2 207.6 M415.1 190.4L405.2 207.6 M494.1 187.8L504.0 201.7 M39.5 195.0L29.6 213.8 M39.5 195.0L49.4 207.8 M108.7 202.0L98.8 213.1 M197.6 199.4L187.8 203.7 M217.4 206.8L227.3 211.8 M355.8 205.2L345.9 214.1 M365.6 201.0L375.5 219.8 M375.5 208.6L385.4 209.5 M415.1 203.9L405.2 220.6 M454.6 199.4L464.5 208.3 M9.9 211.0L0.0 226.4 M29.6 213.8L19.8 226.8 M128.5 213.1L138.4 219.4 M207.5 211.9L217.4 222.2 M256.9 212.6L266.8 219.2 M306.4 211.4L296.5 218.1 M316.2 209.1L306.4 224.7 M336.0 214.0L326.1 222.8 M345.9 214.1L355.8 226.7 M375.5 219.8L365.6 220.7 M385.4 209.5L395.3 223.5 M405.2 220.6L395.3 223.5 M434.8 213.1L424.9 219.2 M464.5 208.3L454.6 229.5 M19.8 226.8L9.9 238.4 M98.8 217.7L108.7 241.2 M128.5 223.1L118.6 237.3 M148.2 232.1L138.4 236.2 M296.5 218.1L286.6 236.4 M316.2 222.3L306.4 231.6 M385.4 228.5L375.5 235.3 M385.4 228.5L395.3 231.3 M405.2 219.0L395.3 231.3 M405.2 219.0L415.1 235.2 M424.9 219.2L415.1 235.2 M444.7 225.8L454.6 231.7 M29.6 232.7L19.8 242.7 M29.6 232.7L39.5 243.8 M118.6 237.3L128.5 245.4 M148.2 242.7L158.1 245.5 M217.4 240.0L227.3 242.4 M247.1 234.9L237.2 243.4 M266.8 235.6L256.9 249.9 M326.1 234.0L316.2 243.5 M365.6 233.6L355.8 244.7 M464.5 238.8L474.4 245.5 M59.3 244.9L69.2 258.7 M98.8 242.6L88.9 252.6 M98.8 242.6L108.7 254.8 M148.2 245.6L138.4 257.1 M177.9 246.6L168.0 262.1 M227.3 242.4L217.4 252.7 M306.4 242.3L296.5 250.7 M355.8 244.7L345.9 251.9 M385.4 249.1L395.3 257.8 M434.8 245.4L444.7 258.8 M464.5 243.0L454.6 254.1 M504.0 242.2L494.1 248.7 M59.3 262.5L49.4 264.5 M79.1 253.2L69.2 266.7 M108.7 254.8L98.8 256.9 M128.5 257.8L118.6 267.1 M138.4 257.1L128.5 265.0 M148.2 258.4L138.4 265.2 M168.0 262.1L158.1 267.0 M168.0 262.1L177.9 260.6 M207.5 251.4L217.4 275.2 M217.4 252.7L227.3 268.6 M286.6 258.4L276.7 269.4 M296.5 250.7L306.4 267.1 M345.9 251.9L355.8 261.4 M355.8 259.0L365.6 267.0 M375.5 255.5L365.6 267.0 M385.4 257.9L375.5 273.4 M405.2 253.2L395.3 269.4 M434.8 255.8L424.9 259.2 M494.1 248.7L504.0 271.2 M69.2 266.7L79.1 272.7 M88.9 262.5L98.8 271.8 M108.7 269.2L118.6 275.8 M177.9 260.6L187.8 271.4 M207.5 264.2L197.6 278.7 M207.5 264.2L217.4 269.7 M326.1 269.8L336.0 275.8 M375.5 273.4L385.4 280.3 M444.7 261.1L434.8 276.3 M464.5 270.6L474.4 275.1 M29.6 274.1L39.5 290.6 M49.4 273.5L39.5 290.6 M59.3 281.4L49.4 287.2 M69.2 281.0L59.3 284.3 M108.7 272.7L98.8 285.7 M118.6 275.8L108.7 278.9 M148.2 273.8L158.1 286.3 M177.9 278.5L168.0 285.6 M207.5 279.2L217.4 289.3 M217.4 269.7L227.3 284.9 M336.0 275.8L326.1 288.1 M345.9 276.0L355.8 286.0 M375.5 272.4L385.4 285.1 M405.2 272.3L415.1 287.1 M444.7 280.4L434.8 284.3 M474.4 275.1L464.5 291.4 M494.1 276.0L504.0 290.6 M49.4 287.2L59.3 293.5 M168.0 285.6L177.9 297.6 M187.8 290.5L177.9 297.6 M365.6 288.0L355.8 292.0 M424.9 286.3L415.1 299.4 M454.6 291.5L464.5 299.8 M474.4 290.9L464.5 299.8 M98.8 292.4L88.9 310.1 M108.7 296.5L118.6 306.7 M128.5 290.5L118.6 306.7 M158.1 288.6L168.0 311.5 M187.8 299.2L177.9 305.6 M197.6 300.1L187.8 311.1 M197.6 300.1L207.5 309.7 M217.4 297.4L227.3 307.6 M237.2 303.1L247.1 305.1 M247.1 294.7L256.9 305.7 M286.6 302.7L276.7 309.0 M326.1 300.6L336.0 308.5 M395.3 298.0L385.4 299.9 M424.9 302.8L434.8 308.6 M464.5 299.8L474.4 307.8 M0.0 307.1L9.9 316.6 M98.8 305.6L108.7 318.8 M108.7 307.7L118.6 314.3 M138.4 301.9L128.5 315.3 M158.1 306.8L148.2 318.0 M256.9 305.7L247.1 315.0 M306.4 304.9L316.2 320.1 M375.5 310.4L365.6 315.6 M395.3 306.4L405.2 316.4 M424.9 308.8L434.8 318.7 M444.7 307.2L454.6 321.7 M464.5 313.9L474.4 315.4 M19.8 318.2L9.9 323.5 M19.8 318.2L29.6 328.7 M29.6 313.1L39.5 322.8 M128.5 315.3L118.6 329.5 M207.5 312.8L217.4 321.3 M247.1 315.0L237.2 332.7 M365.6 315.6L355.8 325.9 M424.9 314.3L434.8 331.0 M454.6 321.7L444.7 326.9 M504.0 318.6L494.1 333.2" stroke="#000" stroke-width="2.2" fill="none"/><path d="M0.0 50.6 L9.9 22.5 L19.8 45.0 L29.6 40.0 L39.5 47.4 L49.4 25.9 L59.3 43.7 L69.2 24.4 L79.1 42.9 L88.9 48.5 L98.8 45.8 L108.7 19.9 L118.6 49.2 L128.5 24.6 L138.4 50.8 L148.2 48.1 L158.1 44.9 L168.0 32.8 L177.9 48.2 L187.8 40.3 L197.6 46.8 L207.5 20.8 L217.4 46.5 L227.3 48.6 L237.2 48.2 L247.1 42.1 L256.9 40.8 L266.8 18.9 L276.7 46.5 L286.6 45.0 L296.5 40.9 L306.4 33.7 L316.2 48.9 L326.1 39.5 L336.0 51.4 L345.9 34.1 L355.8 45.0 L365.6 26.1 L375.5 49.9 L385.4 26.4 L395.3 45.0 L405.2 48.6 L415.1 48.2 L424.9 23.6 L434.8 46.3 L444.7 40.1 L454.6 48.3 L464.5 37.1 L474.4 42.4 L484.2 18.9 L494.1 48.4 L504.0 38.8" stroke="#000" stroke-width="2" fill="none"/><path d="M464.3 193.0 L460.4 203.1 L460.0 209.2 L462.5 221.8 L451.1 234.7 L447.5 242.0 L437.4 248.1 L424.6 259.7 L410.4 264.2M357.8 299.8 L343.8 300.6 L323.3 300.2 L305.4 302.9 L284.6 318.5 L263.9 318.7 L253.0 314.8 L234.9 317.6 L218.3 313.1 L195.4 309.2 L176.5 308.1 L160.0 308.3 L140.4 294.5 L127.5 284.5 L121.4 276.4 L101.2 276.4 L94.6 262.3 L81.6 258.5 L67.9 249.3 L61.8 237.5 L52.5 233.2 L52.7 211.5 L47.8 214.0 L39.4 200.4 L38.6 194.6 L41.4 176.0 L42.5 165.0 L46.7 151.4 L59.0 136.6M77.7 114.0 L90.6 109.6 L100.7 96.0 L121.6 92.1M177.0 63.5 L193.2 62.3 L218.5 60.2 L229.2 63.2 L252.2 63.4 L274.1 59.8 L288.4 61.8 L303.5 67.0 L328.6 68.4M387.0 83.6 L403.0 97.7M442.4 136.5 L448.5 148.2 L455.9 158.6 L460.9 164.8 L458.8 174.1 L463.2 190.6" stroke="#0000ff" stroke-width="4.4" fill="none" stroke-linejoin="round"/><path d="M221 138 L215 150 L215 172 L223 180 M279 118 L279 126 M300 146 L300 176 L292 182 M288 150 L294 152 L294 160 M262 186 L272 183 M226 190 L240 184" stroke="#0000ff" stroke-width="4" fill="none"/><path d="M221 142 L221 178 L227 186 M274 128 L279 140 L279 184 L272 186" stroke="#ff0000" stroke-width="4" fill="none"/></svg>
<div style="left:529px;top:799px;width:568px;height:548px;background:#f0f0f0;border:1px solid #7a7a7a;border-radius:11px;"></div>
<div style="left:530px;top:800px;width:566px;height:50px;background:#f3f3f3;border-radius:10px 10px 0 0;"></div>
<svg style="left:537px;top:808px" width="32" height="32" viewBox="0 0 32 32"><rect width="32" height="32" fill="#0000c4"/><path d="M18 0h10v3h-9zM2 1h8l-2 6h-4zM14 8h15v6h-12zM0 24l9 8h14v-2h-9l-9-9zM12 19h14v5h-12z" fill="#00008a"/><path d="M0 6h4v8h-4zM27 19h5v8h-5z" fill="#0000f4"/><rect x="9.3" y="0" width="2.2" height="32" fill="#d4d418"/><rect x="0" y="15.6" width="32" height="2.4" fill="#d8d81c"/><path d="M10.4 8 Q11.3 15.4 18.5 16.8 Q11.3 18.2 10.4 27 Q9.5 18.2 2.5 16.8 Q9.5 15.4 10.4 8Z" fill="#ffff00" stroke="#ffff00" stroke-width="1.5" stroke-linejoin="round"/><g fill="#a8a8e8"><rect x="20" y="2.5" width="1.6" height="1.6"/><rect x="24" y="2.5" width="1.6" height="1.6"/><rect x="28" y="4.5" width="1.6" height="1.6"/><rect x="6.5" y="6.5" width="1.6" height="1.6"/><rect x="16" y="4" width="1.6" height="1.6"/><rect x="20" y="26.5" width="1.6" height="1.6"/><rect x="24" y="25" width="1.6" height="1.6"/><rect x="28" y="26.5" width="1.6" height="1.6"/><rect x="16" y="27.5" width="1.6" height="1.6"/><rect x="1" y="22" width="1.6" height="1.6"/></g><path d="M0 27l6 5h-6zM18 30h12v2h-12z" fill="#f3f3f3"/></svg>
<span id="t44" class="t" style="left:580px;top:809.6px;font-size:31px;color:#000;transform:scaleX(0.9791);">Operation guide</span>
<div style="left:854px;top:822px;width:20px;height:2px;background:#1a1a1a;"></div>
<div style="left:945px;top:813px;width:20px;height:20px;border:2px solid #1a1a1a;border-radius:3px;"></div>
<svg style="left:1037px;top:812px" width="22" height="22" viewBox="0 0 22 22" ><path d="M1.5 1.5L20.5 20.5M20.5 1.5L1.5 20.5" stroke="#1a1a1a" stroke-width="2" fill="none"/></svg>
<div style="left:530px;top:850px;width:419px;height:482px;background:#fff;border-radius:0 0 0 8px;"></div>
<div style="left:591px;top:906px;width:340px;height:2px;background:#00ff00;"></div>
<div style="left:591px;top:1290px;width:340px;height:2px;background:#404040;"></div>
<svg style="left:580px;top:1070px" width="360" height="170" viewBox="0 0 360 170" ><path d="M11 15.5 C16 13.5 19 14.5 23 20 C36 40 45 80 62 112 C80 140 100 146.5 128 146.5 L341 146.5" stroke="#ff0000" stroke-width="2" fill="none"/><g stroke="#0000ff" stroke-width="1.8" fill="none"><circle cx="11.0" cy="23.6" r="3.2"/><circle cx="40.5" cy="35.8" r="3.2"/><circle cx="40.5" cy="66.7" r="3.2"/><circle cx="52.7" cy="72.3" r="3.2"/><circle cx="52.7" cy="77.4" r="3.2"/><circle cx="40.5" cy="96.2" r="3.2"/><circle cx="52.7" cy="97.7" r="3.2"/><circle cx="70.9" cy="98.7" r="3.2"/><circle cx="78.5" cy="100.7" r="3.2"/><circle cx="52.7" cy="114.4" r="3.2"/><circle cx="70.9" cy="115.9" r="3.2"/><circle cx="78.5" cy="115.9" r="3.2"/><circle cx="70.9" cy="128.1" r="3.2"/><circle cx="78.5" cy="128.1" r="3.2"/><circle cx="78.5" cy="132.7" r="3.2"/><circle cx="70.9" cy="140.3" r="3.2"/><circle cx="78.5" cy="143.9" r="3.2"/><circle cx="95.8" cy="122.0" r="3.2"/><circle cx="104.9" cy="115.9" r="3.2"/><circle cx="104.9" cy="125.1" r="3.2"/><circle cx="102.4" cy="131.2" r="3.2"/><circle cx="95.8" cy="140.3" r="3.2"/><circle cx="102.4" cy="140.3" r="3.2"/><circle cx="104.9" cy="151.5" r="3.2"/><circle cx="101.4" cy="155.0" r="3.2"/><circle cx="118.6" cy="122.0" r="3.2"/><circle cx="118.6" cy="129.6" r="3.2"/><circle cx="118.6" cy="140.3" r="3.2"/><circle cx="118.6" cy="151.5" r="3.2"/><circle cx="118.6" cy="156.5" r="3.2"/><circle cx="130.8" cy="131.2" r="3.2"/><circle cx="130.8" cy="137.8" r="3.2"/><circle cx="130.8" cy="143.9" r="3.2"/></g></svg>
<div style="left:956px;top:1234px;width:137px;height:101px;border:2px solid #a0a0a0;box-shadow:2px 2px 0 #fff,inset 2px 2px 0 #fff;"></div>
<div style="left:968px;top:1224px;width:88px;height:24px;background:#f0f0f0;"></div>
<span id="t45" class="t" style="left:972px;top:1222.2px;font-size:26px;color:#000;transform:scaleX(0.9782);">Control</span>
<div style="left:973px;top:1259px;width:22px;height:22px;border-radius:50%;background:#fff;box-shadow:inset 2px 2px 0 #a0a0a0,inset -2px -2px 0 #fff,inset 3px 3px 1px #696969;"></div>
<div style="left:980px;top:1266px;width:8px;height:8px;border-radius:50%;background:#000;"></div>
<span id="t46" class="t" style="left:1008px;top:1257.7px;font-size:26px;color:#000;transform:scaleX(1.0470);">Hide</span>
<div style="left:973px;top:1297px;width:22px;height:22px;border-radius:50%;background:#fff;box-shadow:inset 2px 2px 0 #a0a0a0,inset -2px -2px 0 #fff,inset 3px 3px 1px #696969;"></div>
<span id="t47" class="t" style="left:1008px;top:1295.8px;font-size:26px;color:#000;">Show</span>
<div style="left:1430px;top:2px;width:1470px;height:1425px;background:#f0f0f0;border:1px solid #6e6e6e;border-radius:12px 0 0 12px;"></div>
<div style="left:1431px;top:3px;width:1469px;height:53px;background:#f3f3f3;border-radius:11px 0 0 0;"></div>
<svg style="left:1437px;top:10px" width="32" height="32" viewBox="0 0 32 32"><rect width="32" height="32" fill="#0000c4"/><path d="M18 0h10v3h-9zM2 1h8l-2 6h-4zM14 8h15v6h-12zM0 24l9 8h14v-2h-9l-9-9zM12 19h14v5h-12z" fill="#00008a"/><path d="M0 6h4v8h-4zM27 19h5v8h-5z" fill="#0000f4"/><rect x="9.3" y="0" width="2.2" height="32" fill="#d4d418"/><rect x="0" y="15.6" width="32" height="2.4" fill="#d8d81c"/><path d="M10.4 8 Q11.3 15.4 18.5 16.8 Q11.3 18.2 10.4 27 Q9.5 18.2 2.5 16.8 Q9.5 15.4 10.4 8Z" fill="#ffff00" stroke="#ffff00" stroke-width="1.5" stroke-linejoin="round"/><g fill="#a8a8e8"><rect x="20" y="2.5" width="1.6" height="1.6"/><rect x="24" y="2.5" width="1.6" height="1.6"/><rect x="28" y="4.5" width="1.6" height="1.6"/><rect x="6.5" y="6.5" width="1.6" height="1.6"/><rect x="16" y="4" width="1.6" height="1.6"/><rect x="20" y="26.5" width="1.6" height="1.6"/><rect x="24" y="25" width="1.6" height="1.6"/><rect x="28" y="26.5" width="1.6" height="1.6"/><rect x="16" y="27.5" width="1.6" height="1.6"/><rect x="1" y="22" width="1.6" height="1.6"/></g><path d="M0 27l6 5h-6zM18 30h12v2h-12z" fill="#f3f3f3"/></svg>
<span id="t48" class="t" style="left:1480px;top:12.0px;font-size:30px;color:#8c8c8c;transform:scaleX(0.9354);">Graph</span>
<div style="left:2698px;top:24px;width:20px;height:2px;background:#8a8a8a;"></div>
<div style="left:2789px;top:15px;width:20px;height:20px;border:2px solid #8a8a8a;border-radius:3px;"></div>
<div style="left:1447px;top:56px;width:1453px;height:850px;background:#fff;"></div>
<span id="t49" class="t" style="left:1464px;top:63.3px;font-size:24px;color:#000;font-weight:bold;transform:scaleX(0.9931);letter-spacing:1px;">2025 Apr 26; (276) Adelheid occults UCAC4 411-051212 Observed by Hidehito Yamamura</span>
<span id="t50" class="t" style="left:2558px;top:63.3px;font-size:24px;color:#000;">/ PSF-Frame Photometry /</span>
<span id="t51" class="t" style="left:1464px;top:869.4px;font-size:24px;color:#000;transform:scaleX(0.9374);">Exp=124msec / Frm No.793.0 / Frm Mid= 11h59m8.8787s,  End= 8.9407s</span>
<span id="t52" class="t" style="left:1496px;top:707.1px;font-size:24px;color:#000;transform:scaleX(0.8240);">100</span>
<span id="t53" class="t" style="left:1496px;top:631.1px;font-size:24px;color:#000;transform:scaleX(0.8240);">200</span>
<span id="t54" class="t" style="left:1496px;top:555.1px;font-size:24px;color:#000;transform:scaleX(0.8240);">300</span>
<span id="t55" class="t" style="left:1496px;top:479.1px;font-size:24px;color:#000;transform:scaleX(0.8240);">400</span>
<span id="t56" class="t" style="left:1496px;top:403.1px;font-size:24px;color:#000;transform:scaleX(0.8240);">500</span>
<span id="t57" class="t" style="left:1496px;top:327.1px;font-size:24px;color:#000;transform:scaleX(0.8240);">600</span>
<span id="t58" class="t" style="left:1496px;top:251.1px;font-size:24px;color:#000;transform:scaleX(0.8240);">700</span>
<span id="t59" class="t" style="left:1496px;top:175.1px;font-size:24px;color:#000;transform:scaleX(0.8240);">800</span>
<span id="t60" class="t" style="left:1533px;top:784.6px;font-size:24px;color:#000;transform:scaleX(0.6737);">0</span>
<span id="t61" class="t" style="left:1587px;top:835.6px;font-size:24px;color:#000;transform:scaleX(0.8240);">690</span>
<span id="t62" class="t" style="left:1707px;top:835.6px;font-size:24px;color:#000;transform:scaleX(0.8240);">720</span>
<span id="t63" class="t" style="left:1827px;top:835.6px;font-size:24px;color:#000;transform:scaleX(0.8240);">750</span>
<span id="t64" class="t" style="left:1947px;top:835.6px;font-size:24px;color:#000;transform:scaleX(0.8240);">780</span>
<span id="t65" class="t" style="left:2067px;top:835.6px;font-size:24px;color:#000;transform:scaleX(0.8240);">810</span>
<span id="t66" class="t" style="left:2187px;top:835.6px;font-size:24px;color:#000;transform:scaleX(0.8240);">840</span>
<span id="t67" class="t" style="left:2307px;top:835.6px;font-size:24px;color:#000;transform:scaleX(0.8240);">870</span>
<span id="t68" class="t" style="left:2427px;top:835.6px;font-size:24px;color:#000;transform:scaleX(0.8240);">900</span>
<span id="t69" class="t" style="left:2547px;top:835.6px;font-size:24px;color:#000;transform:scaleX(0.8240);">930</span>
<span id="t70" class="t" style="left:2667px;top:835.6px;font-size:24px;color:#000;transform:scaleX(0.8240);">960</span>
<span id="t71" class="t" style="left:2787px;top:835.6px;font-size:24px;color:#000;transform:scaleX(0.8240);">990</span>
<svg style="left:1447px;top:56px" width="1431" height="850" viewBox="0 0 1431 850" shape-rendering="crispEdges"><rect x="101" y="667" width="1400" height="2" fill="#00ffff"/><rect x="101" y="591" width="1400" height="2" fill="#00ffff"/><rect x="101" y="515" width="1400" height="2" fill="#00ffff"/><rect x="101" y="439" width="1400" height="2" fill="#00ffff"/><rect x="101" y="363" width="1400" height="2" fill="#00ffff"/><rect x="101" y="287" width="1400" height="2" fill="#00ffff"/><rect x="101" y="211" width="1400" height="2" fill="#00ffff"/><rect x="101" y="135" width="1400" height="2" fill="#00ffff"/><rect x="101" y="744" width="1400" height="2" fill="#000"/><path d="M101 228.9 L105 221.3 L109 221.6 L113 62.2 L117 246.6 L121 174.2 L125 270.6 L129 37.2 L133 207.3 L137 333.5 L141 96.0 L145 348.3 L149 87.4 L153 131.4 L157 241.6 L161 303.8 L165 318.7 L169 355.0 L173 324.8 L177 253.1 L181 279.8 L185 139.9 L189 437.7 L193 128.8 L197 313.8 L201 262.9 L205 341.5 L209 267.5 L213 184.9 L217 321.9 L221 254.4 L225 314.8 L229 257.7 L233 296.3 L237 407.6 L241 353.1 L245 277.2 L249 352.3 L253 284.6 L257 243.0 L261 183.3 L265 165.0 L269 158.0 L273 202.9 L277 190.4 L281 265.4 L285 181.0 L289 174.7 L293 273.5 L297 216.8 L301 306.7 L305 333.5 L309 304.0 L313 268.3 L317 344.7 L321 230.6 L325 196.7 L329 251.6 L333 140.9 L337 182.6 L341 106.9 L345 381.1 L349 283.4 L353 230.2 L357 450.2 L361 319.6 L365 278.5 L369 215.5 L373 272.6 L377 59.9 L381 350.4 L385 420.9 L389 251.0 L393 277.9 L397 68.6 L401 322.6 L405 194.3 L409 313.4 L413 154.6 L417 223.2 L421 295.6 L425 226.6 L429 223.3 L433 258.7 L437 363.2 L441 276.9 L445 235.2 L449 340.2 L453 186.7 L457 337.8 L461 397.3 L465 242.2 L469 342.6 L473 446.4 L477 324.0 L481 172.3 L485 189.7 L489 324.4 L493 295.9 L497 506.7 L501 339.9 L505 210.0 L509 92.5 L513 149.3 L517 331.4 L521 214.3 L525 284.4 L529 312.3 L533 245.4 L537 382.6 L541 270.5 L545 201.6 L549 458.4 L553 306.9 L557 199.7 L561 373.0 L565 293.9 L569 199.8 L573 297.9 L577 89.9 L581 235.1 L585 228.6 L589 311.5 L593 241.8 L597 348.8 L601 415.9 L605 428.7 L609 229.7 L613 316.4 L617 201.3 L621 216.3 L625 282.6 L629 299.8 L633 109.7 L637 203.6 L641 230.0 L645 142.8 L649 457.6 L653 220.1 L657 231.8 L661 367.5 L665 250.6 L669 335.9 L673 377.9 L677 392.8 L681 291.6 L685 244.8 L689 310.1 L693 185.1 L697 315.9 L701 203.1 L705 266.7 L709 299.4 L713 403.7 L717 200.9 L721 293.1 L725 251.7 L729 233.2 L733 324.7 L737 37.2 L741 285.9 L745 443.5 L749 131.0 L753 233.0 L757 314.7 L761 273.2 L765 323.0 L769 271.5 L773 242.1 L777 325.0 L781 187.0 L785 165.6 L789 287.2 L793 224.7 L797 228.4 L801 187.2 L805 397.8 L809 468.1 L813 266.9 L817 322.8 L821 286.4 L825 299.6 L829 269.7 L833 247.4 L837 321.8 L841 217.1 L845 293.9 L849 288.8 L853 291.6 L857 240.4 L861 299.0 L865 279.1 L869 198.8 L873 319.7 L877 396.8 L881 305.2 L885 262.5 L889 180.7 L893 295.4 L897 361.4 L901 241.0 L905 289.1 L909 67.9 L913 378.7 L917 179.3 L921 200.8 L925 195.7 L929 239.3 L933 349.0 L937 217.6 L941 249.6 L945 116.1 L949 107.0 L953 85.8 L957 306.3 L961 335.5 L965 193.8 L969 74.4 L973 262.1 L977 204.4 L981 163.4 L985 380.6 L989 257.6 L993 238.7 L997 414.7 L1001 250.1 L1005 311.5 L1009 157.7 L1013 291.9 L1017 313.0 L1021 311.8 L1025 266.0 L1029 267.1 L1033 259.0 L1037 283.9 L1041 172.5 L1045 191.5 L1049 209.8 L1053 361.3 L1057 311.2 L1061 308.2 L1065 192.6 L1069 343.1 L1073 247.2 L1077 271.5 L1081 485.0 L1085 49.5 L1089 233.0 L1093 316.3 L1097 245.6 L1101 37.2 L1105 186.0 L1109 71.3 L1113 273.5 L1117 216.5 L1121 221.4 L1125 105.1 L1129 291.3 L1133 482.3 L1137 216.3 L1141 256.5 L1145 180.3 L1149 176.0 L1153 202.4 L1157 254.8 L1161 349.4 L1165 300.0 L1169 418.8 L1173 311.4 L1177 292.5 L1181 261.6 L1185 257.3 L1189 169.1 L1193 160.0 L1197 300.8 L1201 237.4 L1205 286.1 L1209 257.3 L1213 238.1 L1217 382.3 L1221 371.9 L1225 351.6 L1229 196.9 L1233 362.2 L1237 294.9 L1241 284.3 L1245 330.8 L1249 143.1 L1253 206.6 L1257 330.7 L1261 310.3 L1265 347.4 L1269 220.0 L1273 83.3 L1277 300.7 L1281 231.3 L1285 234.8 L1289 335.9 L1293 223.5 L1297 96.5 L1301 213.5 L1305 256.1 L1309 37.2 L1313 368.1 L1317 349.0 L1321 159.0 L1325 176.2 L1329 287.7 L1333 149.9 L1337 241.7 L1341 253.2 L1345 208.5 L1349 384.2 L1353 270.6 L1357 279.2 L1361 306.7 L1365 363.6 L1369 148.4 L1373 325.9 L1377 277.0 L1381 314.1 L1385 262.6 L1389 169.4 L1393 198.5 L1397 409.8 L1401 228.2 L1405 199.6 L1409 314.1 L1413 352.7 L1417 240.8 L1421 290.4 L1425 308.6 L1429 343.4 L1433 292.9 L1437 328.2" stroke="#ffff00" stroke-width="2" fill="none"/><path d="M101 221.9l7 7l-7 7l-7-7zM105 214.3l7 7l-7 7l-7-7zM109 214.6l7 7l-7 7l-7-7zM113 55.2l7 7l-7 7l-7-7zM117 239.6l7 7l-7 7l-7-7zM121 167.2l7 7l-7 7l-7-7zM125 263.6l7 7l-7 7l-7-7zM129 30.2l7 7l-7 7l-7-7zM133 200.3l7 7l-7 7l-7-7zM137 326.5l7 7l-7 7l-7-7zM141 89.0l7 7l-7 7l-7-7zM145 341.3l7 7l-7 7l-7-7zM149 80.4l7 7l-7 7l-7-7zM153 124.4l7 7l-7 7l-7-7zM157 234.6l7 7l-7 7l-7-7zM161 296.8l7 7l-7 7l-7-7zM165 311.7l7 7l-7 7l-7-7zM169 348.0l7 7l-7 7l-7-7zM173 317.8l7 7l-7 7l-7-7zM177 246.1l7 7l-7 7l-7-7zM181 272.8l7 7l-7 7l-7-7zM185 132.9l7 7l-7 7l-7-7zM189 430.7l7 7l-7 7l-7-7zM193 121.8l7 7l-7 7l-7-7zM197 306.8l7 7l-7 7l-7-7zM201 255.9l7 7l-7 7l-7-7zM205 334.5l7 7l-7 7l-7-7zM209 260.5l7 7l-7 7l-7-7zM213 177.9l7 7l-7 7l-7-7zM217 314.9l7 7l-7 7l-7-7zM221 247.4l7 7l-7 7l-7-7zM225 307.8l7 7l-7 7l-7-7zM229 250.7l7 7l-7 7l-7-7zM233 289.3l7 7l-7 7l-7-7zM237 400.6l7 7l-7 7l-7-7zM241 346.1l7 7l-7 7l-7-7zM245 270.2l7 7l-7 7l-7-7zM249 345.3l7 7l-7 7l-7-7zM253 277.6l7 7l-7 7l-7-7zM257 236.0l7 7l-7 7l-7-7zM261 176.3l7 7l-7 7l-7-7zM265 158.0l7 7l-7 7l-7-7zM269 151.0l7 7l-7 7l-7-7zM273 195.9l7 7l-7 7l-7-7zM277 183.4l7 7l-7 7l-7-7zM281 258.4l7 7l-7 7l-7-7zM285 174.0l7 7l-7 7l-7-7zM289 167.7l7 7l-7 7l-7-7zM293 266.5l7 7l-7 7l-7-7zM297 209.8l7 7l-7 7l-7-7zM301 299.7l7 7l-7 7l-7-7zM305 326.5l7 7l-7 7l-7-7zM309 297.0l7 7l-7 7l-7-7zM313 261.3l7 7l-7 7l-7-7zM317 337.7l7 7l-7 7l-7-7zM321 223.6l7 7l-7 7l-7-7zM325 189.7l7 7l-7 7l-7-7zM329 244.6l7 7l-7 7l-7-7zM333 133.9l7 7l-7 7l-7-7zM337 175.6l7 7l-7 7l-7-7zM341 99.9l7 7l-7 7l-7-7zM345 374.1l7 7l-7 7l-7-7zM349 276.4l7 7l-7 7l-7-7zM353 223.2l7 7l-7 7l-7-7zM357 443.2l7 7l-7 7l-7-7zM361 312.6l7 7l-7 7l-7-7zM365 271.5l7 7l-7 7l-7-7zM369 208.5l7 7l-7 7l-7-7zM373 265.6l7 7l-7 7l-7-7zM377 52.9l7 7l-7 7l-7-7zM381 343.4l7 7l-7 7l-7-7zM385 413.9l7 7l-7 7l-7-7zM389 244.0l7 7l-7 7l-7-7zM393 270.9l7 7l-7 7l-7-7zM397 61.6l7 7l-7 7l-7-7zM401 315.6l7 7l-7 7l-7-7zM405 187.3l7 7l-7 7l-7-7zM409 306.4l7 7l-7 7l-7-7zM413 147.6l7 7l-7 7l-7-7zM417 216.2l7 7l-7 7l-7-7zM421 288.6l7 7l-7 7l-7-7zM425 219.6l7 7l-7 7l-7-7zM429 216.3l7 7l-7 7l-7-7zM433 251.7l7 7l-7 7l-7-7zM437 356.2l7 7l-7 7l-7-7zM441 269.9l7 7l-7 7l-7-7zM445 228.2l7 7l-7 7l-7-7zM449 333.2l7 7l-7 7l-7-7zM453 179.7l7 7l-7 7l-7-7zM457 330.8l7 7l-7 7l-7-7zM461 390.3l7 7l-7 7l-7-7zM465 235.2l7 7l-7 7l-7-7zM469 335.6l7 7l-7 7l-7-7zM473 439.4l7 7l-7 7l-7-7zM477 317.0l7 7l-7 7l-7-7zM481 165.3l7 7l-7 7l-7-7zM485 182.7l7 7l-7 7l-7-7zM489 317.4l7 7l-7 7l-7-7zM493 288.9l7 7l-7 7l-7-7zM497 499.7l7 7l-7 7l-7-7zM501 332.9l7 7l-7 7l-7-7zM505 203.0l7 7l-7 7l-7-7zM509 85.5l7 7l-7 7l-7-7zM513 142.3l7 7l-7 7l-7-7zM517 324.4l7 7l-7 7l-7-7zM521 207.3l7 7l-7 7l-7-7zM525 277.4l7 7l-7 7l-7-7zM529 305.3l7 7l-7 7l-7-7zM533 238.4l7 7l-7 7l-7-7zM537 375.6l7 7l-7 7l-7-7zM541 263.5l7 7l-7 7l-7-7zM545 194.6l7 7l-7 7l-7-7zM549 451.4l7 7l-7 7l-7-7zM553 299.9l7 7l-7 7l-7-7zM557 192.7l7 7l-7 7l-7-7zM561 366.0l7 7l-7 7l-7-7zM565 286.9l7 7l-7 7l-7-7zM573 290.9l7 7l-7 7l-7-7zM577 82.9l7 7l-7 7l-7-7zM581 228.1l7 7l-7 7l-7-7zM585 221.6l7 7l-7 7l-7-7zM589 304.5l7 7l-7 7l-7-7zM593 234.8l7 7l-7 7l-7-7zM597 341.8l7 7l-7 7l-7-7zM601 408.9l7 7l-7 7l-7-7zM605 421.7l7 7l-7 7l-7-7zM609 222.7l7 7l-7 7l-7-7zM613 309.4l7 7l-7 7l-7-7zM617 194.3l7 7l-7 7l-7-7zM621 209.3l7 7l-7 7l-7-7zM625 275.6l7 7l-7 7l-7-7zM629 292.8l7 7l-7 7l-7-7zM633 102.7l7 7l-7 7l-7-7zM637 196.6l7 7l-7 7l-7-7zM641 223.0l7 7l-7 7l-7-7zM645 135.8l7 7l-7 7l-7-7zM649 450.6l7 7l-7 7l-7-7zM653 213.1l7 7l-7 7l-7-7zM657 224.8l7 7l-7 7l-7-7zM661 360.5l7 7l-7 7l-7-7zM665 243.6l7 7l-7 7l-7-7zM669 328.9l7 7l-7 7l-7-7zM673 370.9l7 7l-7 7l-7-7zM677 385.8l7 7l-7 7l-7-7zM681 284.6l7 7l-7 7l-7-7zM685 237.8l7 7l-7 7l-7-7zM689 303.1l7 7l-7 7l-7-7zM693 178.1l7 7l-7 7l-7-7zM697 308.9l7 7l-7 7l-7-7zM701 196.1l7 7l-7 7l-7-7zM705 259.7l7 7l-7 7l-7-7zM709 292.4l7 7l-7 7l-7-7zM713 396.7l7 7l-7 7l-7-7zM717 193.9l7 7l-7 7l-7-7zM721 286.1l7 7l-7 7l-7-7zM725 244.7l7 7l-7 7l-7-7zM729 226.2l7 7l-7 7l-7-7zM733 317.7l7 7l-7 7l-7-7zM737 30.2l7 7l-7 7l-7-7zM741 278.9l7 7l-7 7l-7-7zM745 436.5l7 7l-7 7l-7-7zM749 124.0l7 7l-7 7l-7-7zM753 226.0l7 7l-7 7l-7-7zM757 307.7l7 7l-7 7l-7-7zM761 266.2l7 7l-7 7l-7-7zM765 316.0l7 7l-7 7l-7-7zM769 264.5l7 7l-7 7l-7-7zM773 235.1l7 7l-7 7l-7-7zM777 318.0l7 7l-7 7l-7-7zM781 180.0l7 7l-7 7l-7-7zM785 158.6l7 7l-7 7l-7-7zM789 280.2l7 7l-7 7l-7-7zM793 217.7l7 7l-7 7l-7-7zM797 221.4l7 7l-7 7l-7-7zM801 180.2l7 7l-7 7l-7-7zM805 390.8l7 7l-7 7l-7-7zM809 461.1l7 7l-7 7l-7-7zM813 259.9l7 7l-7 7l-7-7zM817 315.8l7 7l-7 7l-7-7zM821 279.4l7 7l-7 7l-7-7zM825 292.6l7 7l-7 7l-7-7zM829 262.7l7 7l-7 7l-7-7zM833 240.4l7 7l-7 7l-7-7zM837 314.8l7 7l-7 7l-7-7zM841 210.1l7 7l-7 7l-7-7zM845 286.9l7 7l-7 7l-7-7zM849 281.8l7 7l-7 7l-7-7zM853 284.6l7 7l-7 7l-7-7zM857 233.4l7 7l-7 7l-7-7zM861 292.0l7 7l-7 7l-7-7zM865 272.1l7 7l-7 7l-7-7zM869 191.8l7 7l-7 7l-7-7zM873 312.7l7 7l-7 7l-7-7zM877 389.8l7 7l-7 7l-7-7zM881 298.2l7 7l-7 7l-7-7zM885 255.5l7 7l-7 7l-7-7zM889 173.7l7 7l-7 7l-7-7zM893 288.4l7 7l-7 7l-7-7zM897 354.4l7 7l-7 7l-7-7zM901 234.0l7 7l-7 7l-7-7zM905 282.1l7 7l-7 7l-7-7zM909 60.9l7 7l-7 7l-7-7zM913 371.7l7 7l-7 7l-7-7zM917 172.3l7 7l-7 7l-7-7zM921 193.8l7 7l-7 7l-7-7zM925 188.7l7 7l-7 7l-7-7zM929 232.3l7 7l-7 7l-7-7zM933 342.0l7 7l-7 7l-7-7zM937 210.6l7 7l-7 7l-7-7zM941 242.6l7 7l-7 7l-7-7zM945 109.1l7 7l-7 7l-7-7zM949 100.0l7 7l-7 7l-7-7zM953 78.8l7 7l-7 7l-7-7zM957 299.3l7 7l-7 7l-7-7zM961 328.5l7 7l-7 7l-7-7zM965 186.8l7 7l-7 7l-7-7zM969 67.4l7 7l-7 7l-7-7zM973 255.1l7 7l-7 7l-7-7zM977 197.4l7 7l-7 7l-7-7zM981 156.4l7 7l-7 7l-7-7zM985 373.6l7 7l-7 7l-7-7zM989 250.6l7 7l-7 7l-7-7zM993 231.7l7 7l-7 7l-7-7zM997 407.7l7 7l-7 7l-7-7zM1001 243.1l7 7l-7 7l-7-7zM1005 304.5l7 7l-7 7l-7-7zM1009 150.7l7 7l-7 7l-7-7zM1013 284.9l7 7l-7 7l-7-7zM1017 306.0l7 7l-7 7l-7-7zM1021 304.8l7 7l-7 7l-7-7zM1025 259.0l7 7l-7 7l-7-7zM1029 260.1l7 7l-7 7l-7-7zM1033 252.0l7 7l-7 7l-7-7zM1037 276.9l7 7l-7 7l-7-7zM1041 165.5l7 7l-7 7l-7-7zM1045 184.5l7 7l-7 7l-7-7zM1049 202.8l7 7l-7 7l-7-7zM1053 354.3l7 7l-7 7l-7-7zM1057 304.2l7 7l-7 7l-7-7zM1061 301.2l7 7l-7 7l-7-7zM1065 185.6l7 7l-7 7l-7-7zM1069 336.1l7 7l-7 7l-7-7zM1073 240.2l7 7l-7 7l-7-7zM1077 264.5l7 7l-7 7l-7-7zM1081 478.0l7 7l-7 7l-7-7zM1085 42.5l7 7l-7 7l-7-7zM1089 226.0l7 7l-7 7l-7-7zM1093 309.3l7 7l-7 7l-7-7zM1097 238.6l7 7l-7 7l-7-7zM1101 30.2l7 7l-7 7l-7-7zM1105 179.0l7 7l-7 7l-7-7zM1109 64.3l7 7l-7 7l-7-7zM1113 266.5l7 7l-7 7l-7-7zM1117 209.5l7 7l-7 7l-7-7zM1121 214.4l7 7l-7 7l-7-7zM1125 98.1l7 7l-7 7l-7-7zM1129 284.3l7 7l-7 7l-7-7zM1133 475.3l7 7l-7 7l-7-7zM1137 209.3l7 7l-7 7l-7-7zM1141 249.5l7 7l-7 7l-7-7zM1145 173.3l7 7l-7 7l-7-7zM1149 169.0l7 7l-7 7l-7-7zM1153 195.4l7 7l-7 7l-7-7zM1157 247.8l7 7l-7 7l-7-7zM1161 342.4l7 7l-7 7l-7-7zM1165 293.0l7 7l-7 7l-7-7zM1169 411.8l7 7l-7 7l-7-7zM1173 304.4l7 7l-7 7l-7-7zM1177 285.5l7 7l-7 7l-7-7zM1181 254.6l7 7l-7 7l-7-7zM1185 250.3l7 7l-7 7l-7-7zM1189 162.1l7 7l-7 7l-7-7zM1193 153.0l7 7l-7 7l-7-7zM1197 293.8l7 7l-7 7l-7-7zM1201 230.4l7 7l-7 7l-7-7zM1205 279.1l7 7l-7 7l-7-7zM1209 250.3l7 7l-7 7l-7-7zM1213 231.1l7 7l-7 7l-7-7zM1217 375.3l7 7l-7 7l-7-7zM1221 364.9l7 7l-7 7l-7-7zM1225 344.6l7 7l-7 7l-7-7zM1229 189.9l7 7l-7 7l-7-7zM1233 355.2l7 7l-7 7l-7-7zM1237 287.9l7 7l-7 7l-7-7zM1241 277.3l7 7l-7 7l-7-7zM1245 323.8l7 7l-7 7l-7-7zM1249 136.1l7 7l-7 7l-7-7zM1253 199.6l7 7l-7 7l-7-7zM1257 323.7l7 7l-7 7l-7-7zM1261 303.3l7 7l-7 7l-7-7zM1265 340.4l7 7l-7 7l-7-7zM1269 213.0l7 7l-7 7l-7-7zM1273 76.3l7 7l-7 7l-7-7zM1277 293.7l7 7l-7 7l-7-7zM1281 224.3l7 7l-7 7l-7-7zM1285 227.8l7 7l-7 7l-7-7zM1289 328.9l7 7l-7 7l-7-7zM1293 216.5l7 7l-7 7l-7-7zM1297 89.5l7 7l-7 7l-7-7zM1301 206.5l7 7l-7 7l-7-7zM1305 249.1l7 7l-7 7l-7-7zM1309 30.2l7 7l-7 7l-7-7zM1313 361.1l7 7l-7 7l-7-7zM1317 342.0l7 7l-7 7l-7-7zM1321 152.0l7 7l-7 7l-7-7zM1325 169.2l7 7l-7 7l-7-7zM1329 280.7l7 7l-7 7l-7-7zM1333 142.9l7 7l-7 7l-7-7zM1337 234.7l7 7l-7 7l-7-7zM1341 246.2l7 7l-7 7l-7-7zM1345 201.5l7 7l-7 7l-7-7zM1349 377.2l7 7l-7 7l-7-7zM1353 263.6l7 7l-7 7l-7-7zM1357 272.2l7 7l-7 7l-7-7zM1361 299.7l7 7l-7 7l-7-7zM1365 356.6l7 7l-7 7l-7-7zM1369 141.4l7 7l-7 7l-7-7zM1373 318.9l7 7l-7 7l-7-7zM1377 270.0l7 7l-7 7l-7-7zM1381 307.1l7 7l-7 7l-7-7zM1385 255.6l7 7l-7 7l-7-7zM1389 162.4l7 7l-7 7l-7-7zM1393 191.5l7 7l-7 7l-7-7zM1397 402.8l7 7l-7 7l-7-7zM1401 221.2l7 7l-7 7l-7-7zM1405 192.6l7 7l-7 7l-7-7zM1409 307.1l7 7l-7 7l-7-7zM1413 345.7l7 7l-7 7l-7-7zM1417 233.8l7 7l-7 7l-7-7zM1421 283.4l7 7l-7 7l-7-7zM1425 301.6l7 7l-7 7l-7-7zM1429 336.4l7 7l-7 7l-7-7zM1433 285.9l7 7l-7 7l-7-7zM1437 321.2l7 7l-7 7l-7-7z" fill="#ffa500"/><path d="M101 311.6 L105 216.0 L109 186.9 L113 325.0 L117 226.4 L121 217.2 L125 324.2 L129 293.4 L133 251.1 L137 185.5 L141 197.0 L145 240.5 L149 315.2 L153 199.7 L157 272.3 L161 164.5 L165 214.4 L169 169.8 L173 224.3 L177 220.0 L181 160.7 L185 263.1 L189 242.7 L193 273.7 L197 213.8 L201 229.5 L205 150.3 L209 221.0 L213 254.4 L217 103.1 L221 189.3 L225 349.2 L229 176.5 L233 330.7 L237 252.4 L241 147.1 L245 219.9 L249 205.8 L253 187.2 L257 185.3 L261 159.6 L265 237.4 L269 242.5 L273 154.3 L277 153.9 L281 278.6 L285 186.5 L289 198.6 L293 188.3 L297 223.0 L301 179.1 L305 175.7 L309 216.8 L313 192.5 L317 224.6 L321 261.4 L325 154.8 L329 232.3 L333 173.4 L337 275.7 L341 257.7 L345 180.0 L349 192.6 L353 152.0 L357 150.8 L361 208.7 L365 316.5 L369 145.4 L373 279.0 L377 216.7 L381 175.9 L385 221.5 L389 231.8 L393 320.3 L397 128.0 L401 108.9 L405 148.5 L409 129.8 L413 176.3 L417 222.6 L421 157.2 L425 220.5 L429 202.2 L433 149.8 L437 159.7 L441 264.1 L445 205.2 L449 272.1 L453 157.6 L457 301.8 L461 288.0 L465 240.1 L469 197.2 L473 310.7 L477 197.5 L481 304.1 L485 322.0 L489 218.4 L493 197.9 L497 311.3 L501 252.0 L505 296.4 L509 262.0 L513 267.3 L517 324.4 L521 272.8 L525 216.5 L529 286.5 L533 263.6 L537 254.3 L541 152.0 L545 288.4 L549 270.1 L553 216.9 L557 296.8 L561 71.6 L565 251.9 L569 276.8 L573 291.6 L577 395.7 L581 464.2 L585 411.1 L589 426.6 L593 415.3 L597 532.2 L601 551.8 L605 508.0 L609 314.8 L613 314.8 L617 344.2 L621 341.6 L625 354.5 L629 371.5 L633 375.1 L637 415.3 L641 488.4 L645 473.0 L649 513.2 L653 408.6 L657 443.6 L661 341.6 L665 371.5 L669 408.6 L673 393.1 L677 488.4 L681 339.0 L685 447.2 L689 473.0 L693 528.6 L697 389.5 L701 463.2 L705 436.9 L709 424.5 L713 488.4 L717 463.2 L721 447.2 L725 359.6 L729 344.2 L733 369.9 L737 357.0 L741 496.7 L745 412.7 L749 452.9 L753 412.7 L757 454.9 L761 484.8 L765 459.1 L769 500.3 L773 417.8 L777 454.9 L781 389.5 L785 401.4 L789 490.0 L793 443.6 L797 396.2 L801 470.9 L805 351.9 L809 425.6 L813 270.0 L817 488.4 L821 317.9 L825 450.3 L829 419.4 L833 482.3 L837 436.9 L841 361.2 L845 290.1 L849 358.6 L853 409.1 L857 375.6 L861 345.7 L865 536.4 L869 401.4 L873 296.8 L877 262.2 L881 313.8 L885 258.1 L889 338.0 L893 169.5 L897 141.2 L901 367.9 L905 251.9 L909 401.4 L913 340.6 L917 363.2 L921 194.5 L925 129.9 L929 212.7 L933 384.4 L937 198.4 L941 282.1 L945 247.3 L949 295.3 L953 277.3 L957 255.8 L961 158.9 L965 239.6 L969 287.6 L973 263.9 L977 202.2 L981 259.8 L985 352.2 L989 283.5 L993 290.4 L997 275.1 L1001 281.2 L1005 235.1 L1009 169.4 L1013 220.1 L1017 238.5 L1021 182.0 L1025 288.4 L1029 292.1 L1033 188.2 L1037 241.4 L1041 215.1 L1045 206.0 L1049 235.5 L1053 232.3 L1057 288.8 L1061 281.5 L1065 231.3 L1069 350.3 L1073 175.1 L1077 280.0 L1081 181.3 L1085 229.8 L1089 210.1 L1093 256.4 L1097 131.8 L1101 271.8 L1105 155.6 L1109 199.7 L1113 212.1 L1117 222.0 L1121 305.0 L1125 242.6 L1129 289.6 L1133 278.9 L1137 162.7 L1141 294.2 L1145 207.5 L1149 200.5 L1153 276.4 L1157 324.9 L1161 205.9 L1165 264.9 L1169 343.9 L1173 290.4 L1177 136.2 L1181 266.4 L1185 206.3 L1189 241.6 L1193 270.9 L1197 207.4 L1201 331.2 L1205 298.6 L1209 319.5 L1213 231.1 L1217 190.7 L1221 166.3 L1225 175.7 L1229 271.0 L1233 339.2 L1237 236.5 L1241 283.8 L1245 269.8 L1249 162.8 L1253 267.8 L1257 234.2 L1261 220.6 L1265 314.3 L1269 224.0 L1273 264.5 L1277 279.7 L1281 239.9 L1285 213.0 L1289 246.9 L1293 176.1 L1297 279.5 L1301 252.0 L1305 230.3 L1309 209.0 L1313 343.9 L1317 219.0 L1321 289.4 L1325 305.3 L1329 182.7 L1333 295.7 L1337 320.7 L1341 253.6 L1345 216.4 L1349 245.5 L1353 255.9 L1357 196.7 L1361 106.4 L1365 338.5 L1369 297.0 L1373 277.5 L1377 166.5 L1381 312.5 L1385 191.8 L1389 343.5 L1393 250.5 L1397 225.3 L1401 314.3 L1405 230.2 L1409 212.6 L1413 236.4 L1417 278.8 L1421 231.3 L1425 171.9 L1429 177.9 L1433 301.0 L1437 319.0" stroke="#8080ff" stroke-width="2" fill="none"/><path d="M101 304.6l7 7l-7 7l-7-7zM105 209.0l7 7l-7 7l-7-7zM109 179.9l7 7l-7 7l-7-7zM113 318.0l7 7l-7 7l-7-7zM117 219.4l7 7l-7 7l-7-7zM121 210.2l7 7l-7 7l-7-7zM125 317.2l7 7l-7 7l-7-7zM129 286.4l7 7l-7 7l-7-7zM133 244.1l7 7l-7 7l-7-7zM137 178.5l7 7l-7 7l-7-7zM141 190.0l7 7l-7 7l-7-7zM145 233.5l7 7l-7 7l-7-7zM149 308.2l7 7l-7 7l-7-7zM153 192.7l7 7l-7 7l-7-7zM157 265.3l7 7l-7 7l-7-7zM161 157.5l7 7l-7 7l-7-7zM165 207.4l7 7l-7 7l-7-7zM169 162.8l7 7l-7 7l-7-7zM173 217.3l7 7l-7 7l-7-7zM177 213.0l7 7l-7 7l-7-7zM181 153.7l7 7l-7 7l-7-7zM185 256.1l7 7l-7 7l-7-7zM189 235.7l7 7l-7 7l-7-7zM193 266.7l7 7l-7 7l-7-7zM197 206.8l7 7l-7 7l-7-7zM201 222.5l7 7l-7 7l-7-7zM205 143.3l7 7l-7 7l-7-7zM209 214.0l7 7l-7 7l-7-7zM213 247.4l7 7l-7 7l-7-7zM217 96.1l7 7l-7 7l-7-7zM221 182.3l7 7l-7 7l-7-7zM225 342.2l7 7l-7 7l-7-7zM229 169.5l7 7l-7 7l-7-7zM233 323.7l7 7l-7 7l-7-7zM237 245.4l7 7l-7 7l-7-7zM241 140.1l7 7l-7 7l-7-7zM245 212.9l7 7l-7 7l-7-7zM249 198.8l7 7l-7 7l-7-7zM253 180.2l7 7l-7 7l-7-7zM257 178.3l7 7l-7 7l-7-7zM261 152.6l7 7l-7 7l-7-7zM265 230.4l7 7l-7 7l-7-7zM269 235.5l7 7l-7 7l-7-7zM273 147.3l7 7l-7 7l-7-7zM277 146.9l7 7l-7 7l-7-7zM281 271.6l7 7l-7 7l-7-7zM285 179.5l7 7l-7 7l-7-7zM289 191.6l7 7l-7 7l-7-7zM293 181.3l7 7l-7 7l-7-7zM297 216.0l7 7l-7 7l-7-7zM301 172.1l7 7l-7 7l-7-7zM305 168.7l7 7l-7 7l-7-7zM309 209.8l7 7l-7 7l-7-7zM313 185.5l7 7l-7 7l-7-7zM317 217.6l7 7l-7 7l-7-7zM321 254.4l7 7l-7 7l-7-7zM325 147.8l7 7l-7 7l-7-7zM329 225.3l7 7l-7 7l-7-7zM333 166.4l7 7l-7 7l-7-7zM337 268.7l7 7l-7 7l-7-7zM341 250.7l7 7l-7 7l-7-7zM345 173.0l7 7l-7 7l-7-7zM349 185.6l7 7l-7 7l-7-7zM353 145.0l7 7l-7 7l-7-7zM357 143.8l7 7l-7 7l-7-7zM361 201.7l7 7l-7 7l-7-7zM365 309.5l7 7l-7 7l-7-7zM369 138.4l7 7l-7 7l-7-7zM373 272.0l7 7l-7 7l-7-7zM377 209.7l7 7l-7 7l-7-7zM381 168.9l7 7l-7 7l-7-7zM385 214.5l7 7l-7 7l-7-7zM389 224.8l7 7l-7 7l-7-7zM393 313.3l7 7l-7 7l-7-7zM397 121.0l7 7l-7 7l-7-7zM401 101.9l7 7l-7 7l-7-7zM405 141.5l7 7l-7 7l-7-7zM409 122.8l7 7l-7 7l-7-7zM413 169.3l7 7l-7 7l-7-7zM417 215.6l7 7l-7 7l-7-7zM421 150.2l7 7l-7 7l-7-7zM425 213.5l7 7l-7 7l-7-7zM429 195.2l7 7l-7 7l-7-7zM433 142.8l7 7l-7 7l-7-7zM437 152.7l7 7l-7 7l-7-7zM441 257.1l7 7l-7 7l-7-7zM445 198.2l7 7l-7 7l-7-7zM449 265.1l7 7l-7 7l-7-7zM453 150.6l7 7l-7 7l-7-7zM457 294.8l7 7l-7 7l-7-7zM461 281.0l7 7l-7 7l-7-7zM465 233.1l7 7l-7 7l-7-7zM469 190.2l7 7l-7 7l-7-7zM473 303.7l7 7l-7 7l-7-7zM477 190.5l7 7l-7 7l-7-7zM481 297.1l7 7l-7 7l-7-7zM485 315.0l7 7l-7 7l-7-7zM489 211.4l7 7l-7 7l-7-7zM493 190.9l7 7l-7 7l-7-7zM497 304.3l7 7l-7 7l-7-7zM501 245.0l7 7l-7 7l-7-7zM505 289.4l7 7l-7 7l-7-7zM509 255.0l7 7l-7 7l-7-7zM513 260.3l7 7l-7 7l-7-7zM517 317.4l7 7l-7 7l-7-7zM521 265.8l7 7l-7 7l-7-7zM525 209.5l7 7l-7 7l-7-7zM529 279.5l7 7l-7 7l-7-7zM533 256.6l7 7l-7 7l-7-7zM537 247.3l7 7l-7 7l-7-7zM541 145.0l7 7l-7 7l-7-7zM545 281.4l7 7l-7 7l-7-7zM549 263.1l7 7l-7 7l-7-7zM553 209.9l7 7l-7 7l-7-7zM557 289.8l7 7l-7 7l-7-7zM561 64.6l7 7l-7 7l-7-7zM565 244.9l7 7l-7 7l-7-7zM573 284.6l7 7l-7 7l-7-7zM577 388.7l7 7l-7 7l-7-7zM581 457.2l7 7l-7 7l-7-7zM585 404.1l7 7l-7 7l-7-7zM589 419.6l7 7l-7 7l-7-7zM593 408.3l7 7l-7 7l-7-7zM597 525.2l7 7l-7 7l-7-7zM601 544.8l7 7l-7 7l-7-7zM605 501.0l7 7l-7 7l-7-7zM609 307.8l7 7l-7 7l-7-7zM613 307.8l7 7l-7 7l-7-7zM617 337.2l7 7l-7 7l-7-7zM621 334.6l7 7l-7 7l-7-7zM625 347.5l7 7l-7 7l-7-7zM629 364.5l7 7l-7 7l-7-7zM633 368.1l7 7l-7 7l-7-7zM637 408.3l7 7l-7 7l-7-7zM641 481.4l7 7l-7 7l-7-7zM645 466.0l7 7l-7 7l-7-7zM649 506.2l7 7l-7 7l-7-7zM653 401.6l7 7l-7 7l-7-7zM657 436.6l7 7l-7 7l-7-7zM661 334.6l7 7l-7 7l-7-7zM665 364.5l7 7l-7 7l-7-7zM669 401.6l7 7l-7 7l-7-7zM673 386.1l7 7l-7 7l-7-7zM677 481.4l7 7l-7 7l-7-7zM681 332.0l7 7l-7 7l-7-7zM685 440.2l7 7l-7 7l-7-7zM689 466.0l7 7l-7 7l-7-7zM693 521.6l7 7l-7 7l-7-7zM697 382.5l7 7l-7 7l-7-7zM701 456.2l7 7l-7 7l-7-7zM705 429.9l7 7l-7 7l-7-7zM709 417.5l7 7l-7 7l-7-7zM713 481.4l7 7l-7 7l-7-7zM717 456.2l7 7l-7 7l-7-7zM721 440.2l7 7l-7 7l-7-7zM725 352.6l7 7l-7 7l-7-7zM729 337.2l7 7l-7 7l-7-7zM733 362.9l7 7l-7 7l-7-7zM737 350.0l7 7l-7 7l-7-7zM741 489.7l7 7l-7 7l-7-7zM745 405.7l7 7l-7 7l-7-7zM749 445.9l7 7l-7 7l-7-7zM753 405.7l7 7l-7 7l-7-7zM757 447.9l7 7l-7 7l-7-7zM761 477.8l7 7l-7 7l-7-7zM765 452.1l7 7l-7 7l-7-7zM769 493.3l7 7l-7 7l-7-7zM773 410.8l7 7l-7 7l-7-7zM777 447.9l7 7l-7 7l-7-7zM781 382.5l7 7l-7 7l-7-7zM785 394.4l7 7l-7 7l-7-7zM789 483.0l7 7l-7 7l-7-7zM793 436.6l7 7l-7 7l-7-7zM797 389.2l7 7l-7 7l-7-7zM801 463.9l7 7l-7 7l-7-7zM805 344.9l7 7l-7 7l-7-7zM809 418.6l7 7l-7 7l-7-7zM813 263.0l7 7l-7 7l-7-7zM817 481.4l7 7l-7 7l-7-7zM821 310.9l7 7l-7 7l-7-7zM825 443.3l7 7l-7 7l-7-7zM829 412.4l7 7l-7 7l-7-7zM833 475.3l7 7l-7 7l-7-7zM837 429.9l7 7l-7 7l-7-7zM841 354.2l7 7l-7 7l-7-7zM845 283.1l7 7l-7 7l-7-7zM849 351.6l7 7l-7 7l-7-7zM853 402.1l7 7l-7 7l-7-7zM857 368.6l7 7l-7 7l-7-7zM861 338.7l7 7l-7 7l-7-7zM865 529.4l7 7l-7 7l-7-7zM869 394.4l7 7l-7 7l-7-7zM873 289.8l7 7l-7 7l-7-7zM877 255.2l7 7l-7 7l-7-7zM881 306.8l7 7l-7 7l-7-7zM885 251.1l7 7l-7 7l-7-7zM889 331.0l7 7l-7 7l-7-7zM893 162.5l7 7l-7 7l-7-7zM897 134.2l7 7l-7 7l-7-7zM901 360.9l7 7l-7 7l-7-7zM905 244.9l7 7l-7 7l-7-7zM909 394.4l7 7l-7 7l-7-7zM913 333.6l7 7l-7 7l-7-7zM917 356.2l7 7l-7 7l-7-7zM921 187.5l7 7l-7 7l-7-7zM925 122.9l7 7l-7 7l-7-7zM929 205.7l7 7l-7 7l-7-7zM933 377.4l7 7l-7 7l-7-7zM937 191.4l7 7l-7 7l-7-7zM941 275.1l7 7l-7 7l-7-7zM945 240.3l7 7l-7 7l-7-7zM949 288.3l7 7l-7 7l-7-7zM953 270.3l7 7l-7 7l-7-7zM957 248.8l7 7l-7 7l-7-7zM961 151.9l7 7l-7 7l-7-7zM965 232.6l7 7l-7 7l-7-7zM969 280.6l7 7l-7 7l-7-7zM973 256.9l7 7l-7 7l-7-7zM977 195.2l7 7l-7 7l-7-7zM981 252.8l7 7l-7 7l-7-7zM985 345.2l7 7l-7 7l-7-7zM989 276.5l7 7l-7 7l-7-7zM993 283.4l7 7l-7 7l-7-7zM997 268.1l7 7l-7 7l-7-7zM1001 274.2l7 7l-7 7l-7-7zM1005 228.1l7 7l-7 7l-7-7zM1009 162.4l7 7l-7 7l-7-7zM1013 213.1l7 7l-7 7l-7-7zM1017 231.5l7 7l-7 7l-7-7zM1021 175.0l7 7l-7 7l-7-7zM1025 281.4l7 7l-7 7l-7-7zM1029 285.1l7 7l-7 7l-7-7zM1033 181.2l7 7l-7 7l-7-7zM1037 234.4l7 7l-7 7l-7-7zM1041 208.1l7 7l-7 7l-7-7zM1045 199.0l7 7l-7 7l-7-7zM1049 228.5l7 7l-7 7l-7-7zM1053 225.3l7 7l-7 7l-7-7zM1057 281.8l7 7l-7 7l-7-7zM1061 274.5l7 7l-7 7l-7-7zM1065 224.3l7 7l-7 7l-7-7zM1069 343.3l7 7l-7 7l-7-7zM1073 168.1l7 7l-7 7l-7-7zM1077 273.0l7 7l-7 7l-7-7zM1081 174.3l7 7l-7 7l-7-7zM1085 222.8l7 7l-7 7l-7-7zM1089 203.1l7 7l-7 7l-7-7zM1093 249.4l7 7l-7 7l-7-7zM1097 124.8l7 7l-7 7l-7-7zM1101 264.8l7 7l-7 7l-7-7zM1105 148.6l7 7l-7 7l-7-7zM1109 192.7l7 7l-7 7l-7-7zM1113 205.1l7 7l-7 7l-7-7zM1117 215.0l7 7l-7 7l-7-7zM1121 298.0l7 7l-7 7l-7-7zM1125 235.6l7 7l-7 7l-7-7zM1129 282.6l7 7l-7 7l-7-7zM1133 271.9l7 7l-7 7l-7-7zM1137 155.7l7 7l-7 7l-7-7zM1141 287.2l7 7l-7 7l-7-7zM1145 200.5l7 7l-7 7l-7-7zM1149 193.5l7 7l-7 7l-7-7zM1153 269.4l7 7l-7 7l-7-7zM1157 317.9l7 7l-7 7l-7-7zM1161 198.9l7 7l-7 7l-7-7zM1165 257.9l7 7l-7 7l-7-7zM1169 336.9l7 7l-7 7l-7-7zM1173 283.4l7 7l-7 7l-7-7zM1177 129.2l7 7l-7 7l-7-7zM1181 259.4l7 7l-7 7l-7-7zM1185 199.3l7 7l-7 7l-7-7zM1189 234.6l7 7l-7 7l-7-7zM1193 263.9l7 7l-7 7l-7-7zM1197 200.4l7 7l-7 7l-7-7zM1201 324.2l7 7l-7 7l-7-7zM1205 291.6l7 7l-7 7l-7-7zM1209 312.5l7 7l-7 7l-7-7zM1213 224.1l7 7l-7 7l-7-7zM1217 183.7l7 7l-7 7l-7-7zM1221 159.3l7 7l-7 7l-7-7zM1225 168.7l7 7l-7 7l-7-7zM1229 264.0l7 7l-7 7l-7-7zM1233 332.2l7 7l-7 7l-7-7zM1237 229.5l7 7l-7 7l-7-7zM1241 276.8l7 7l-7 7l-7-7zM1245 262.8l7 7l-7 7l-7-7zM1249 155.8l7 7l-7 7l-7-7zM1253 260.8l7 7l-7 7l-7-7zM1257 227.2l7 7l-7 7l-7-7zM1261 213.6l7 7l-7 7l-7-7zM1265 307.3l7 7l-7 7l-7-7zM1269 217.0l7 7l-7 7l-7-7zM1273 257.5l7 7l-7 7l-7-7zM1277 272.7l7 7l-7 7l-7-7zM1281 232.9l7 7l-7 7l-7-7zM1285 206.0l7 7l-7 7l-7-7zM1289 239.9l7 7l-7 7l-7-7zM1293 169.1l7 7l-7 7l-7-7zM1297 272.5l7 7l-7 7l-7-7zM1301 245.0l7 7l-7 7l-7-7zM1305 223.3l7 7l-7 7l-7-7zM1309 202.0l7 7l-7 7l-7-7zM1313 336.9l7 7l-7 7l-7-7zM1317 212.0l7 7l-7 7l-7-7zM1321 282.4l7 7l-7 7l-7-7zM1325 298.3l7 7l-7 7l-7-7zM1329 175.7l7 7l-7 7l-7-7zM1333 288.7l7 7l-7 7l-7-7zM1337 313.7l7 7l-7 7l-7-7zM1341 246.6l7 7l-7 7l-7-7zM1345 209.4l7 7l-7 7l-7-7zM1349 238.5l7 7l-7 7l-7-7zM1353 248.9l7 7l-7 7l-7-7zM1357 189.7l7 7l-7 7l-7-7zM1361 99.4l7 7l-7 7l-7-7zM1365 331.5l7 7l-7 7l-7-7zM1369 290.0l7 7l-7 7l-7-7zM1373 270.5l7 7l-7 7l-7-7zM1377 159.5l7 7l-7 7l-7-7zM1381 305.5l7 7l-7 7l-7-7zM1385 184.8l7 7l-7 7l-7-7zM1389 336.5l7 7l-7 7l-7-7zM1393 243.5l7 7l-7 7l-7-7zM1397 218.3l7 7l-7 7l-7-7zM1401 307.3l7 7l-7 7l-7-7zM1405 223.2l7 7l-7 7l-7-7zM1409 205.6l7 7l-7 7l-7-7zM1413 229.4l7 7l-7 7l-7-7zM1417 271.8l7 7l-7 7l-7-7zM1421 224.3l7 7l-7 7l-7-7zM1425 164.9l7 7l-7 7l-7-7zM1429 170.9l7 7l-7 7l-7-7zM1433 294.0l7 7l-7 7l-7-7zM1437 312.0l7 7l-7 7l-7-7z" fill="#0000ff"/><path d="M101 746.7 L105 735.5 L109 732.1 L113 742.4 L117 738.0 L121 739.9 L125 743.8 L129 741.2 L133 733.3 L137 753.8 L141 736.0 L145 747.2 L149 738.2 L153 737.7 L157 736.1 L161 739.3 L165 739.8 L169 742.7 L173 739.0 L177 734.3 L181 738.9 L185 745.9 L189 731.2 L193 739.9 L197 744.3 L201 742.8 L205 731.7 L209 735.6 L213 747.7 L217 747.3 L221 753.3 L225 745.2 L229 741.8 L233 749.4 L237 748.5 L241 744.0 L245 730.8 L249 735.8 L253 734.4 L257 733.4 L261 742.4 L265 745.0 L269 749.1 L273 744.3 L277 736.4 L281 738.0 L285 745.3 L289 742.9 L293 744.8 L297 739.9 L301 734.3 L305 746.2 L309 740.6 L313 744.0 L317 740.8 L321 742.1 L325 736.9 L329 747.0 L333 745.9 L337 749.1 L341 742.2 L345 749.4 L349 738.9 L353 738.8 L357 739.0 L361 741.6 L365 742.8 L369 742.9 L373 746.7 L377 738.7 L381 741.6 L385 734.6 L389 736.7 L393 738.0 L397 739.9 L401 735.5 L405 739.0 L409 737.4 L413 750.4 L417 743.8 L421 737.9 L425 742.7 L429 748.6 L433 736.7 L437 749.3 L441 743.9 L445 743.5 L449 731.9 L453 740.6 L457 742.6 L461 748.7 L465 732.0 L469 736.5 L473 744.4 L477 739.0 L481 746.2 L485 750.6 L489 735.4 L493 744.4 L497 727.5 L501 741.2 L505 739.9 L509 753.9 L513 741.2 L517 738.3 L521 724.8 L525 744.8 L529 746.2 L533 738.2 L537 719.4 L541 736.6 L545 741.6 L549 742.9 L553 740.0 L557 744.7 L561 736.8 L565 733.1 L569 731.8 L573 740.9 L577 745.4 L581 742.6 L585 740.0 L589 739.8 L593 742.6 L597 744.4 L601 735.7 L605 742.5 L609 740.0 L613 737.9 L617 738.9 L621 741.7 L625 747.2 L629 742.4 L633 745.1 L637 743.4 L641 746.9 L645 741.2 L649 742.7 L653 739.2 L657 742.2 L661 739.4 L665 745.9 L669 742.4 L673 736.0 L677 734.1 L681 749.6 L685 739.3 L689 728.3 L693 740.2 L697 746.4 L701 743.9 L705 738.0 L709 741.6 L713 735.8 L717 745.5 L721 726.1 L725 738.7 L729 738.5 L733 737.1 L737 734.1 L741 741.4 L745 738.5 L749 739.1 L753 735.0 L757 737.2 L761 745.5 L765 741.4 L769 744.5 L773 739.1 L777 736.6 L781 738.5 L785 743.1 L789 734.8 L793 736.4 L797 737.4 L801 743.5 L805 748.9 L809 736.5 L813 744.9 L817 736.9 L821 735.9 L825 741.0 L829 737.1 L833 739.0 L837 744.5 L841 741.4 L845 728.0 L849 742.5 L853 739.4 L857 740.4 L861 744.8 L865 745.8 L869 738.2 L873 746.8 L877 746.0 L881 748.7 L885 745.4 L889 744.3 L893 742.6 L897 745.7 L901 756.9 L905 746.6 L909 733.8 L913 736.7 L917 736.6 L921 740.9 L925 744.7 L929 740.6 L933 739.8 L937 742.9 L941 737.6 L945 731.5 L949 741.6 L953 743.0 L957 740.3 L961 735.7 L965 742.9 L969 733.4 L973 741.8 L977 738.9 L981 703.5 L985 739.0 L989 743.8 L993 746.8 L997 740.4 L1001 735.7 L1005 739.8 L1009 739.5 L1013 735.2 L1017 739.6 L1021 740.0 L1025 739.6 L1029 733.2 L1033 738.0 L1037 743.2 L1041 739.5 L1045 737.4 L1049 737.1 L1053 741.3 L1057 742.1 L1061 736.1 L1065 739.3 L1069 748.4 L1073 744.3 L1077 739.7 L1081 735.9 L1085 749.2 L1089 737.5 L1093 734.3 L1097 766.2 L1101 744.8 L1105 735.6 L1109 746.5 L1113 744.7 L1117 742.1 L1121 743.6 L1125 749.2 L1129 733.9 L1133 740.3 L1137 738.8 L1141 745.5 L1145 744.1 L1149 764.1 L1153 731.5 L1157 746.5 L1161 732.4 L1165 750.2 L1169 746.4 L1173 742.5 L1177 733.6 L1181 739.7 L1185 740.7 L1189 747.6 L1193 752.3 L1197 743.5 L1201 743.6 L1205 741.0 L1209 736.6 L1213 734.8 L1217 738.4 L1221 741.1 L1225 736.1 L1229 735.9 L1233 737.3 L1237 742.7 L1241 740.4 L1245 750.1 L1249 733.4 L1253 741.5 L1257 740.5 L1261 747.2 L1265 736.1 L1269 737.5 L1273 738.0 L1277 745.6 L1281 740.4 L1285 737.6 L1289 740.5 L1293 743.8 L1297 752.9 L1301 739.5 L1305 754.6 L1309 737.7 L1313 735.7 L1317 742.0 L1321 740.0 L1325 745.6 L1329 730.4 L1333 741.2 L1337 738.9 L1341 744.5 L1345 741.9 L1349 737.6 L1353 743.9 L1357 750.3 L1361 744.6 L1365 745.0 L1369 734.8 L1373 740.1 L1377 741.1 L1381 737.7 L1385 745.2 L1389 735.2 L1393 747.0 L1397 735.6 L1401 746.0 L1405 735.3 L1409 740.7 L1413 740.1 L1417 740.2 L1421 748.3 L1425 742.1 L1429 749.2 L1433 737.3 L1437 735.7" stroke="#ff80ff" stroke-width="2" fill="none"/><path d="M101 739.7l7 7l-7 7l-7-7zM105 728.5l7 7l-7 7l-7-7zM109 725.1l7 7l-7 7l-7-7zM113 735.4l7 7l-7 7l-7-7zM117 731.0l7 7l-7 7l-7-7zM121 732.9l7 7l-7 7l-7-7zM125 736.8l7 7l-7 7l-7-7zM129 734.2l7 7l-7 7l-7-7zM133 726.3l7 7l-7 7l-7-7zM137 746.8l7 7l-7 7l-7-7zM141 729.0l7 7l-7 7l-7-7zM145 740.2l7 7l-7 7l-7-7zM149 731.2l7 7l-7 7l-7-7zM153 730.7l7 7l-7 7l-7-7zM157 729.1l7 7l-7 7l-7-7zM161 732.3l7 7l-7 7l-7-7zM165 732.8l7 7l-7 7l-7-7zM169 735.7l7 7l-7 7l-7-7zM173 732.0l7 7l-7 7l-7-7zM177 727.3l7 7l-7 7l-7-7zM181 731.9l7 7l-7 7l-7-7zM185 738.9l7 7l-7 7l-7-7zM189 724.2l7 7l-7 7l-7-7zM193 732.9l7 7l-7 7l-7-7zM197 737.3l7 7l-7 7l-7-7zM201 735.8l7 7l-7 7l-7-7zM205 724.7l7 7l-7 7l-7-7zM209 728.6l7 7l-7 7l-7-7zM213 740.7l7 7l-7 7l-7-7zM217 740.3l7 7l-7 7l-7-7zM221 746.3l7 7l-7 7l-7-7zM225 738.2l7 7l-7 7l-7-7zM229 734.8l7 7l-7 7l-7-7zM233 742.4l7 7l-7 7l-7-7zM237 741.5l7 7l-7 7l-7-7zM241 737.0l7 7l-7 7l-7-7zM245 723.8l7 7l-7 7l-7-7zM249 728.8l7 7l-7 7l-7-7zM253 727.4l7 7l-7 7l-7-7zM257 726.4l7 7l-7 7l-7-7zM261 735.4l7 7l-7 7l-7-7zM265 738.0l7 7l-7 7l-7-7zM269 742.1l7 7l-7 7l-7-7zM273 737.3l7 7l-7 7l-7-7zM277 729.4l7 7l-7 7l-7-7zM281 731.0l7 7l-7 7l-7-7zM285 738.3l7 7l-7 7l-7-7zM289 735.9l7 7l-7 7l-7-7zM293 737.8l7 7l-7 7l-7-7zM297 732.9l7 7l-7 7l-7-7zM301 727.3l7 7l-7 7l-7-7zM305 739.2l7 7l-7 7l-7-7zM309 733.6l7 7l-7 7l-7-7zM313 737.0l7 7l-7 7l-7-7zM317 733.8l7 7l-7 7l-7-7zM321 735.1l7 7l-7 7l-7-7zM325 729.9l7 7l-7 7l-7-7zM329 740.0l7 7l-7 7l-7-7zM333 738.9l7 7l-7 7l-7-7zM337 742.1l7 7l-7 7l-7-7zM341 735.2l7 7l-7 7l-7-7zM345 742.4l7 7l-7 7l-7-7zM349 731.9l7 7l-7 7l-7-7zM353 731.8l7 7l-7 7l-7-7zM357 732.0l7 7l-7 7l-7-7zM361 734.6l7 7l-7 7l-7-7zM365 735.8l7 7l-7 7l-7-7zM369 735.9l7 7l-7 7l-7-7zM373 739.7l7 7l-7 7l-7-7zM377 731.7l7 7l-7 7l-7-7zM381 734.6l7 7l-7 7l-7-7zM385 727.6l7 7l-7 7l-7-7zM389 729.7l7 7l-7 7l-7-7zM393 731.0l7 7l-7 7l-7-7zM397 732.9l7 7l-7 7l-7-7zM401 728.5l7 7l-7 7l-7-7zM405 732.0l7 7l-7 7l-7-7zM409 730.4l7 7l-7 7l-7-7zM413 743.4l7 7l-7 7l-7-7zM417 736.8l7 7l-7 7l-7-7zM421 730.9l7 7l-7 7l-7-7zM425 735.7l7 7l-7 7l-7-7zM429 741.6l7 7l-7 7l-7-7zM433 729.7l7 7l-7 7l-7-7zM437 742.3l7 7l-7 7l-7-7zM441 736.9l7 7l-7 7l-7-7zM445 736.5l7 7l-7 7l-7-7zM449 724.9l7 7l-7 7l-7-7zM453 733.6l7 7l-7 7l-7-7zM457 735.6l7 7l-7 7l-7-7zM461 741.7l7 7l-7 7l-7-7zM465 725.0l7 7l-7 7l-7-7zM469 729.5l7 7l-7 7l-7-7zM473 737.4l7 7l-7 7l-7-7zM477 732.0l7 7l-7 7l-7-7zM481 739.2l7 7l-7 7l-7-7zM485 743.6l7 7l-7 7l-7-7zM489 728.4l7 7l-7 7l-7-7zM493 737.4l7 7l-7 7l-7-7zM497 720.5l7 7l-7 7l-7-7zM501 734.2l7 7l-7 7l-7-7zM505 732.9l7 7l-7 7l-7-7zM509 746.9l7 7l-7 7l-7-7zM513 734.2l7 7l-7 7l-7-7zM517 731.3l7 7l-7 7l-7-7zM521 717.8l7 7l-7 7l-7-7zM525 737.8l7 7l-7 7l-7-7zM529 739.2l7 7l-7 7l-7-7zM533 731.2l7 7l-7 7l-7-7zM537 712.4l7 7l-7 7l-7-7zM541 729.6l7 7l-7 7l-7-7zM545 734.6l7 7l-7 7l-7-7zM549 735.9l7 7l-7 7l-7-7zM553 733.0l7 7l-7 7l-7-7zM557 737.7l7 7l-7 7l-7-7zM561 729.8l7 7l-7 7l-7-7zM565 726.1l7 7l-7 7l-7-7zM573 733.9l7 7l-7 7l-7-7zM577 738.4l7 7l-7 7l-7-7zM581 735.6l7 7l-7 7l-7-7zM585 733.0l7 7l-7 7l-7-7zM589 732.8l7 7l-7 7l-7-7zM593 735.6l7 7l-7 7l-7-7zM597 737.4l7 7l-7 7l-7-7zM601 728.7l7 7l-7 7l-7-7zM605 735.5l7 7l-7 7l-7-7zM609 733.0l7 7l-7 7l-7-7zM613 730.9l7 7l-7 7l-7-7zM617 731.9l7 7l-7 7l-7-7zM621 734.7l7 7l-7 7l-7-7zM625 740.2l7 7l-7 7l-7-7zM629 735.4l7 7l-7 7l-7-7zM633 738.1l7 7l-7 7l-7-7zM637 736.4l7 7l-7 7l-7-7zM641 739.9l7 7l-7 7l-7-7zM645 734.2l7 7l-7 7l-7-7zM649 735.7l7 7l-7 7l-7-7zM653 732.2l7 7l-7 7l-7-7zM657 735.2l7 7l-7 7l-7-7zM661 732.4l7 7l-7 7l-7-7zM665 738.9l7 7l-7 7l-7-7zM669 735.4l7 7l-7 7l-7-7zM673 729.0l7 7l-7 7l-7-7zM677 727.1l7 7l-7 7l-7-7zM681 742.6l7 7l-7 7l-7-7zM685 732.3l7 7l-7 7l-7-7zM689 721.3l7 7l-7 7l-7-7zM693 733.2l7 7l-7 7l-7-7zM697 739.4l7 7l-7 7l-7-7zM701 736.9l7 7l-7 7l-7-7zM705 731.0l7 7l-7 7l-7-7zM709 734.6l7 7l-7 7l-7-7zM713 728.8l7 7l-7 7l-7-7zM717 738.5l7 7l-7 7l-7-7zM721 719.1l7 7l-7 7l-7-7zM725 731.7l7 7l-7 7l-7-7zM729 731.5l7 7l-7 7l-7-7zM733 730.1l7 7l-7 7l-7-7zM737 727.1l7 7l-7 7l-7-7zM741 734.4l7 7l-7 7l-7-7zM745 731.5l7 7l-7 7l-7-7zM749 732.1l7 7l-7 7l-7-7zM753 728.0l7 7l-7 7l-7-7zM757 730.2l7 7l-7 7l-7-7zM761 738.5l7 7l-7 7l-7-7zM765 734.4l7 7l-7 7l-7-7zM769 737.5l7 7l-7 7l-7-7zM773 732.1l7 7l-7 7l-7-7zM777 729.6l7 7l-7 7l-7-7zM781 731.5l7 7l-7 7l-7-7zM785 736.1l7 7l-7 7l-7-7zM789 727.8l7 7l-7 7l-7-7zM793 729.4l7 7l-7 7l-7-7zM797 730.4l7 7l-7 7l-7-7zM801 736.5l7 7l-7 7l-7-7zM805 741.9l7 7l-7 7l-7-7zM809 729.5l7 7l-7 7l-7-7zM813 737.9l7 7l-7 7l-7-7zM817 729.9l7 7l-7 7l-7-7zM821 728.9l7 7l-7 7l-7-7zM825 734.0l7 7l-7 7l-7-7zM829 730.1l7 7l-7 7l-7-7zM833 732.0l7 7l-7 7l-7-7zM837 737.5l7 7l-7 7l-7-7zM841 734.4l7 7l-7 7l-7-7zM845 721.0l7 7l-7 7l-7-7zM849 735.5l7 7l-7 7l-7-7zM853 732.4l7 7l-7 7l-7-7zM857 733.4l7 7l-7 7l-7-7zM861 737.8l7 7l-7 7l-7-7zM865 738.8l7 7l-7 7l-7-7zM869 731.2l7 7l-7 7l-7-7zM873 739.8l7 7l-7 7l-7-7zM877 739.0l7 7l-7 7l-7-7zM881 741.7l7 7l-7 7l-7-7zM885 738.4l7 7l-7 7l-7-7zM889 737.3l7 7l-7 7l-7-7zM893 735.6l7 7l-7 7l-7-7zM897 738.7l7 7l-7 7l-7-7zM901 749.9l7 7l-7 7l-7-7zM905 739.6l7 7l-7 7l-7-7zM909 726.8l7 7l-7 7l-7-7zM913 729.7l7 7l-7 7l-7-7zM917 729.6l7 7l-7 7l-7-7zM921 733.9l7 7l-7 7l-7-7zM925 737.7l7 7l-7 7l-7-7zM929 733.6l7 7l-7 7l-7-7zM933 732.8l7 7l-7 7l-7-7zM937 735.9l7 7l-7 7l-7-7zM941 730.6l7 7l-7 7l-7-7zM945 724.5l7 7l-7 7l-7-7zM949 734.6l7 7l-7 7l-7-7zM953 736.0l7 7l-7 7l-7-7zM957 733.3l7 7l-7 7l-7-7zM961 728.7l7 7l-7 7l-7-7zM965 735.9l7 7l-7 7l-7-7zM969 726.4l7 7l-7 7l-7-7zM973 734.8l7 7l-7 7l-7-7zM977 731.9l7 7l-7 7l-7-7zM981 696.5l7 7l-7 7l-7-7zM985 732.0l7 7l-7 7l-7-7zM989 736.8l7 7l-7 7l-7-7zM993 739.8l7 7l-7 7l-7-7zM997 733.4l7 7l-7 7l-7-7zM1001 728.7l7 7l-7 7l-7-7zM1005 732.8l7 7l-7 7l-7-7zM1009 732.5l7 7l-7 7l-7-7zM1013 728.2l7 7l-7 7l-7-7zM1017 732.6l7 7l-7 7l-7-7zM1021 733.0l7 7l-7 7l-7-7zM1025 732.6l7 7l-7 7l-7-7zM1029 726.2l7 7l-7 7l-7-7zM1033 731.0l7 7l-7 7l-7-7zM1037 736.2l7 7l-7 7l-7-7zM1041 732.5l7 7l-7 7l-7-7zM1045 730.4l7 7l-7 7l-7-7zM1049 730.1l7 7l-7 7l-7-7zM1053 734.3l7 7l-7 7l-7-7zM1057 735.1l7 7l-7 7l-7-7zM1061 729.1l7 7l-7 7l-7-7zM1065 732.3l7 7l-7 7l-7-7zM1069 741.4l7 7l-7 7l-7-7zM1073 737.3l7 7l-7 7l-7-7zM1077 732.7l7 7l-7 7l-7-7zM1081 728.9l7 7l-7 7l-7-7zM1085 742.2l7 7l-7 7l-7-7zM1089 730.5l7 7l-7 7l-7-7zM1093 727.3l7 7l-7 7l-7-7zM1097 759.2l7 7l-7 7l-7-7zM1101 737.8l7 7l-7 7l-7-7zM1105 728.6l7 7l-7 7l-7-7zM1109 739.5l7 7l-7 7l-7-7zM1113 737.7l7 7l-7 7l-7-7zM1117 735.1l7 7l-7 7l-7-7zM1121 736.6l7 7l-7 7l-7-7zM1125 742.2l7 7l-7 7l-7-7zM1129 726.9l7 7l-7 7l-7-7zM1133 733.3l7 7l-7 7l-7-7zM1137 731.8l7 7l-7 7l-7-7zM1141 738.5l7 7l-7 7l-7-7zM1145 737.1l7 7l-7 7l-7-7zM1149 757.1l7 7l-7 7l-7-7zM1153 724.5l7 7l-7 7l-7-7zM1157 739.5l7 7l-7 7l-7-7zM1161 725.4l7 7l-7 7l-7-7zM1165 743.2l7 7l-7 7l-7-7zM1169 739.4l7 7l-7 7l-7-7zM1173 735.5l7 7l-7 7l-7-7zM1177 726.6l7 7l-7 7l-7-7zM1181 732.7l7 7l-7 7l-7-7zM1185 733.7l7 7l-7 7l-7-7zM1189 740.6l7 7l-7 7l-7-7zM1193 745.3l7 7l-7 7l-7-7zM1197 736.5l7 7l-7 7l-7-7zM1201 736.6l7 7l-7 7l-7-7zM1205 734.0l7 7l-7 7l-7-7zM1209 729.6l7 7l-7 7l-7-7zM1213 727.8l7 7l-7 7l-7-7zM1217 731.4l7 7l-7 7l-7-7zM1221 734.1l7 7l-7 7l-7-7zM1225 729.1l7 7l-7 7l-7-7zM1229 728.9l7 7l-7 7l-7-7zM1233 730.3l7 7l-7 7l-7-7zM1237 735.7l7 7l-7 7l-7-7zM1241 733.4l7 7l-7 7l-7-7zM1245 743.1l7 7l-7 7l-7-7zM1249 726.4l7 7l-7 7l-7-7zM1253 734.5l7 7l-7 7l-7-7zM1257 733.5l7 7l-7 7l-7-7zM1261 740.2l7 7l-7 7l-7-7zM1265 729.1l7 7l-7 7l-7-7zM1269 730.5l7 7l-7 7l-7-7zM1273 731.0l7 7l-7 7l-7-7zM1277 738.6l7 7l-7 7l-7-7zM1281 733.4l7 7l-7 7l-7-7zM1285 730.6l7 7l-7 7l-7-7zM1289 733.5l7 7l-7 7l-7-7zM1293 736.8l7 7l-7 7l-7-7zM1297 745.9l7 7l-7 7l-7-7zM1301 732.5l7 7l-7 7l-7-7zM1305 747.6l7 7l-7 7l-7-7zM1309 730.7l7 7l-7 7l-7-7zM1313 728.7l7 7l-7 7l-7-7zM1317 735.0l7 7l-7 7l-7-7zM1321 733.0l7 7l-7 7l-7-7zM1325 738.6l7 7l-7 7l-7-7zM1329 723.4l7 7l-7 7l-7-7zM1333 734.2l7 7l-7 7l-7-7zM1337 731.9l7 7l-7 7l-7-7zM1341 737.5l7 7l-7 7l-7-7zM1345 734.9l7 7l-7 7l-7-7zM1349 730.6l7 7l-7 7l-7-7zM1353 736.9l7 7l-7 7l-7-7zM1357 743.3l7 7l-7 7l-7-7zM1361 737.6l7 7l-7 7l-7-7zM1365 738.0l7 7l-7 7l-7-7zM1369 727.8l7 7l-7 7l-7-7zM1373 733.1l7 7l-7 7l-7-7zM1377 734.1l7 7l-7 7l-7-7zM1381 730.7l7 7l-7 7l-7-7zM1385 738.2l7 7l-7 7l-7-7zM1389 728.2l7 7l-7 7l-7-7zM1393 740.0l7 7l-7 7l-7-7zM1397 728.6l7 7l-7 7l-7-7zM1401 739.0l7 7l-7 7l-7-7zM1405 728.3l7 7l-7 7l-7-7zM1409 733.7l7 7l-7 7l-7-7zM1413 733.1l7 7l-7 7l-7-7zM1417 733.2l7 7l-7 7l-7-7zM1421 741.3l7 7l-7 7l-7-7zM1425 735.1l7 7l-7 7l-7-7zM1429 742.2l7 7l-7 7l-7-7zM1433 730.3l7 7l-7 7l-7-7zM1437 728.7l7 7l-7 7l-7-7z" fill="#ff00ff"/><path d="M569 192.8l7 7l-7 7l-7-7z" fill="#ff0000"/><path d="M569 269.8l7 7l-7 7l-7-7z" fill="#ff0000"/><path d="M569 724.8l7 7l-7 7l-7-7z" fill="#ff0000"/><rect x="100" y="41" width="2" height="732" fill="#000"/><rect x="100" y="770" width="1400" height="2" fill="#000"/><rect x="116" y="772" width="2" height="8" fill="#000"/><rect x="156" y="772" width="2" height="8" fill="#000"/><rect x="196" y="772" width="2" height="8" fill="#000"/><rect x="236" y="772" width="2" height="8" fill="#000"/><rect x="276" y="772" width="2" height="8" fill="#000"/><rect x="316" y="772" width="2" height="8" fill="#000"/><rect x="356" y="772" width="2" height="8" fill="#000"/><rect x="396" y="772" width="2" height="8" fill="#000"/><rect x="436" y="772" width="2" height="8" fill="#000"/><rect x="476" y="772" width="2" height="8" fill="#000"/><rect x="516" y="772" width="2" height="8" fill="#000"/><rect x="556" y="772" width="2" height="8" fill="#000"/><rect x="596" y="772" width="2" height="8" fill="#000"/><rect x="636" y="772" width="2" height="8" fill="#000"/><rect x="676" y="772" width="2" height="8" fill="#000"/><rect x="716" y="772" width="2" height="8" fill="#000"/><rect x="756" y="772" width="2" height="8" fill="#000"/><rect x="796" y="772" width="2" height="8" fill="#000"/><rect x="836" y="772" width="2" height="8" fill="#000"/><rect x="876" y="772" width="2" height="8" fill="#000"/><rect x="916" y="772" width="2" height="8" fill="#000"/><rect x="956" y="772" width="2" height="8" fill="#000"/><rect x="996" y="772" width="2" height="8" fill="#000"/><rect x="1036" y="772" width="2" height="8" fill="#000"/><rect x="1076" y="772" width="2" height="8" fill="#000"/><rect x="1116" y="772" width="2" height="8" fill="#000"/><rect x="1156" y="772" width="2" height="8" fill="#000"/><rect x="1196" y="772" width="2" height="8" fill="#000"/><rect x="1236" y="772" width="2" height="8" fill="#000"/><rect x="1276" y="772" width="2" height="8" fill="#000"/><rect x="1316" y="772" width="2" height="8" fill="#000"/><rect x="1356" y="772" width="2" height="8" fill="#000"/><rect x="1396" y="772" width="2" height="8" fill="#000"/></svg>
<div style="left:1431px;top:916px;width:1469px;height:2px;background:#fff;"></div>
<span id="t72" class="t" style="left:1447px;top:924.9px;font-size:24px;color:#000;transform:scaleX(0.9769);">Current-</span>
<span id="t73" class="t" style="left:1464px;top:956.9px;font-size:24px;color:#000;transform:scaleX(0.8797);">Frame</span>
<span id="t74" class="t" style="left:1568px;top:924.9px;font-size:24px;color:#000;transform:scaleX(0.8937);">Luminous</span>
<span id="t75" class="t" style="left:1567px;top:956.9px;font-size:24px;color:#000;transform:scaleX(0.9621);">Intensity</span>
<div style="left:1447px;top:990px;width:96px;height:38px;background:#fff;box-shadow:inset 2px 2px 0 #a0a0a0,inset -2px -2px 0 #fff,inset 4px 4px 0 #696969,inset -4px -4px 0 #e3e3e3;"></div>
<span id="t76" class="t" style="left:1455px;top:995.6px;font-size:24px;color:#000;transform:scaleX(0.7992);">793.0</span>
<div style="left:1559px;top:990px;width:113px;height:38px;background:#fff;box-shadow:inset 2px 2px 0 #a0a0a0,inset -2px -2px 0 #fff,inset 4px 4px 0 #696969,inset -4px -4px 0 #e3e3e3;"></div>
<span id="t77" class="t" style="left:1566px;top:995.6px;font-size:24px;color:#000;transform:scaleX(0.8158);">614.7</span>
<div style="left:1685px;top:930px;width:320px;height:36px;background:repeating-conic-gradient(#fff 0 25%,#f0f0f0 0 50%) 0 0/4px 4px;box-shadow:inset 2px 2px 0 #a0a0a0;"></div>
<div style="left:1685px;top:931px;width:36px;height:35px;background:#f0f0f0;box-shadow:inset 2px 2px 0 #fff,inset -2px -2px 0 #696969,inset -4px -4px 0 #a0a0a0,inset 4px 4px 0 #e3e3e3;"></div>
<svg style="left:1694px;top:939px" width="16" height="16" viewBox="0 0 16 16" ><polygon points="11.5,1.0 11.5,15.0 4.5,8.0" fill="#000"/></svg>
<div style="left:1773px;top:931px;width:34px;height:35px;background:#f0f0f0;box-shadow:inset 2px 2px 0 #fff,inset -2px -2px 0 #696969,inset -4px -4px 0 #a0a0a0,inset 4px 4px 0 #e3e3e3;"></div>
<div style="left:1971px;top:931px;width:34px;height:35px;background:#f0f0f0;box-shadow:inset 2px 2px 0 #fff,inset -2px -2px 0 #696969,inset -4px -4px 0 #a0a0a0,inset 4px 4px 0 #e3e3e3;"></div>
<svg style="left:1980px;top:939px" width="16" height="16" viewBox="0 0 16 16" ><polygon points="4.5,1.0 4.5,15.0 11.5,8.0" fill="#000"/></svg>
<div style="left:1687px;top:981px;width:82px;height:49px;background:#f0f0f0;box-shadow:inset 2px 2px 0 #fff,inset -2px -2px 0 #696969,inset -4px -4px 0 #a0a0a0,inset 4px 4px 0 #e3e3e3;"></div>
<span id="t78" class="t" style="left:1695px;top:990.6px;font-size:24px;color:#000;transform:scaleX(0.8679);">-10Sec</span>
<div style="left:1775px;top:981px;width:66px;height:49px;background:#f0f0f0;box-shadow:inset 2px 2px 0 #fff,inset -2px -2px 0 #696969,inset -4px -4px 0 #a0a0a0,inset 4px 4px 0 #e3e3e3;"></div>
<span id="t79" class="t" style="left:1781px;top:990.6px;font-size:24px;color:#000;transform:scaleX(0.8612);">-1Sec</span>
<div style="left:1847px;top:981px;width:70px;height:49px;background:#f0f0f0;box-shadow:inset 2px 2px 0 #fff,inset -2px -2px 0 #696969,inset -4px -4px 0 #a0a0a0,inset 4px 4px 0 #e3e3e3;"></div>
<span id="t80" class="t" style="left:1852px;top:990.6px;font-size:24px;color:#000;transform:scaleX(0.8877);">+1Sec</span>
<div style="left:1923px;top:981px;width:82px;height:49px;background:#f0f0f0;box-shadow:inset 2px 2px 0 #fff,inset -2px -2px 0 #696969,inset -4px -4px 0 #a0a0a0,inset 4px 4px 0 #e3e3e3;"></div>
<span id="t81" class="t" style="left:1929px;top:990.6px;font-size:24px;color:#000;transform:scaleX(0.8772);">+10Sec</span>
<span id="t82" class="t" style="left:2019px;top:941.3px;font-size:24px;color:#000;transform:scaleX(0.8993);">Scale</span>
<span id="t83" class="t" style="left:2024px;top:988.9px;font-size:24px;color:#000;transform:scaleX(0.8967);">Radius</span>
<div style="left:2095px;top:926px;width:44px;height:38px;background:#fff;box-shadow:inset 2px 2px 0 #a0a0a0,inset -2px -2px 0 #fff,inset 4px 4px 0 #696969,inset -4px -4px 0 #e3e3e3;"></div>
<span id="t84" class="t" style="left:2104px;top:931.1px;font-size:24px;color:#000;transform:scaleX(0.5988);">1</span>
<div style="left:2143px;top:925px;width:34px;height:22px;background:#f0f0f0;box-shadow:inset 2px 2px 0 #fff,inset -2px -2px 0 #696969,inset -4px -4px 0 #a0a0a0,inset 4px 4px 0 #e3e3e3;"></div>
<svg style="left:2153.0px;top:929.0px" width="12" height="12" viewBox="0 0 12 12" ><polygon points="1.0,8.5 11.0,8.5 6.0,3.5" fill="#000"/></svg>
<div style="left:2143px;top:948px;width:34px;height:23px;background:#f0f0f0;box-shadow:inset 2px 2px 0 #fff,inset -2px -2px 0 #696969,inset -4px -4px 0 #a0a0a0,inset 4px 4px 0 #e3e3e3;"></div>
<svg style="left:2153.0px;top:952.5px" width="12" height="12" viewBox="0 0 12 12" ><polygon points="1.0,3.5 11.0,3.5 6.0,8.5" fill="#000"/></svg>
<div style="left:2095px;top:990px;width:44px;height:38px;background:#fff;box-shadow:inset 2px 2px 0 #a0a0a0,inset -2px -2px 0 #fff,inset 4px 4px 0 #696969,inset -4px -4px 0 #e3e3e3;"></div>
<span id="t85" class="t" style="left:2102px;top:995.1px;font-size:24px;color:#000;transform:scaleX(0.7485);">3</span>
<div style="left:2143px;top:989px;width:34px;height:22px;background:#f0f0f0;box-shadow:inset 2px 2px 0 #fff,inset -2px -2px 0 #696969,inset -4px -4px 0 #a0a0a0,inset 4px 4px 0 #e3e3e3;"></div>
<svg style="left:2153.0px;top:993.0px" width="12" height="12" viewBox="0 0 12 12" ><polygon points="1.0,8.5 11.0,8.5 6.0,3.5" fill="#000"/></svg>
<div style="left:2143px;top:1012px;width:34px;height:23px;background:#f0f0f0;box-shadow:inset 2px 2px 0 #fff,inset -2px -2px 0 #696969,inset -4px -4px 0 #a0a0a0,inset 4px 4px 0 #e3e3e3;"></div>
<svg style="left:2153.0px;top:1016.5px" width="12" height="12" viewBox="0 0 12 12" ><polygon points="1.0,3.5 11.0,3.5 6.0,8.5" fill="#000"/></svg>
<div style="left:1447px;top:1048px;width:24px;height:24px;background:#fff;box-shadow:inset 2px 2px 0 #a0a0a0,inset -2px -2px 0 #fff,inset 4px 4px 0 #696969,inset -4px -4px 0 #e3e3e3;"></div>
<svg style="left:1447px;top:1048px" width="24" height="24" viewBox="0 0 24 24" ><path d="M6.5 11.0 L10.6 15.8 L18.7 6.7" fill="none" stroke="#000" stroke-width="4.2" stroke-linejoin="miter"/></svg>
<span id="t86" class="t" style="left:1483px;top:1047.2px;font-size:24px;color:#000;transform:scaleX(0.9534);">Show Image of Clicked point</span>
<div style="left:1447px;top:1080px;width:24px;height:24px;background:#fff;box-shadow:inset 2px 2px 0 #a0a0a0,inset -2px -2px 0 #fff,inset 4px 4px 0 #696969,inset -4px -4px 0 #e3e3e3;"></div>
<span id="t87" class="t" style="left:1484px;top:1079.2px;font-size:24px;color:#000;transform:scaleX(0.9483);">Reproduce Aperture Position</span>
<div style="left:1795px;top:1044px;width:146px;height:50px;background:#5a5a5a;"></div>
<div style="left:1797px;top:1046px;width:142px;height:46px;background:#f0f0f0;box-shadow:inset 2px 2px 0 #fff,inset -2px -2px 0 #696969,inset -4px -4px 0 #a0a0a0,inset 4px 4px 0 #e3e3e3;"></div>
<span id="t88" class="t" style="left:1809px;top:1054.6px;font-size:24px;color:#000;transform:scaleX(0.9057);">Save Image</span>
<div style="left:1951px;top:1044px;width:236px;height:50px;background:#f0f0f0;box-shadow:inset 2px 2px 0 #fff,inset -2px -2px 0 #696969,inset -4px -4px 0 #a0a0a0,inset 4px 4px 0 #e3e3e3;"></div>
<span id="t89" class="t" style="left:1976px;top:1054.6px;font-size:24px;color:#000;transform:scaleX(0.9601);">Copy to ClipBoard</span>
<div style="left:2188px;top:929px;width:99px;height:162px;border:2px solid #a0a0a0;box-shadow:2px 2px 0 #fff,inset 2px 2px 0 #fff;"></div>
<div style="left:2200px;top:918px;width:72px;height:24px;background:#f0f0f0;"></div>
<span id="t90" class="t" style="left:2203px;top:916.6px;font-size:24px;color:#000;transform:scaleX(0.9960);">Y Axis</span>
<span id="t91" class="t" style="left:2201px;top:940.6px;font-size:24px;color:#000;transform:scaleX(0.8601);">Min Max</span>
<div style="left:2197px;top:965px;width:34px;height:115px;background:repeating-conic-gradient(#fff 0 25%,#f0f0f0 0 50%) 0 0/4px 4px;"></div>
<div style="left:2197px;top:965px;width:34px;height:34px;background:#f0f0f0;box-shadow:inset 2px 2px 0 #fff,inset -2px -2px 0 #696969,inset -4px -4px 0 #a0a0a0,inset 4px 4px 0 #e3e3e3;"></div>
<svg style="left:2207.0px;top:975px" width="14" height="14" viewBox="0 0 14 14" ><polygon points="1.0,10.0 13.0,10.0 7.0,4.0" fill="#000"/></svg>
<div style="left:2197px;top:1005px;width:34px;height:32px;background:#f0f0f0;box-shadow:inset 2px 2px 0 #fff,inset -2px -2px 0 #696969,inset -4px -4px 0 #a0a0a0,inset 4px 4px 0 #e3e3e3;"></div>
<div style="left:2197px;top:1046px;width:34px;height:34px;background:#f0f0f0;box-shadow:inset 2px 2px 0 #fff,inset -2px -2px 0 #696969,inset -4px -4px 0 #a0a0a0,inset 4px 4px 0 #e3e3e3;"></div>
<svg style="left:2207.0px;top:1056px" width="14" height="14" viewBox="0 0 14 14" ><polygon points="1.0,4.0 13.0,4.0 7.0,10.0" fill="#000"/></svg>
<div style="left:2241px;top:965px;width:36px;height:115px;background:repeating-conic-gradient(#fff 0 25%,#f0f0f0 0 50%) 0 0/4px 4px;"></div>
<div style="left:2241px;top:965px;width:36px;height:34px;background:#f0f0f0;box-shadow:inset 2px 2px 0 #fff,inset -2px -2px 0 #696969,inset -4px -4px 0 #a0a0a0,inset 4px 4px 0 #e3e3e3;"></div>
<svg style="left:2252.0px;top:975px" width="14" height="14" viewBox="0 0 14 14" ><polygon points="1.0,10.0 13.0,10.0 7.0,4.0" fill="#000"/></svg>
<div style="left:2241px;top:1007px;width:36px;height:33px;background:#f0f0f0;box-shadow:inset 2px 2px 0 #fff,inset -2px -2px 0 #696969,inset -4px -4px 0 #a0a0a0,inset 4px 4px 0 #e3e3e3;"></div>
<div style="left:2241px;top:1046px;width:36px;height:34px;background:#f0f0f0;box-shadow:inset 2px 2px 0 #fff,inset -2px -2px 0 #696969,inset -4px -4px 0 #a0a0a0,inset 4px 4px 0 #e3e3e3;"></div>
<svg style="left:2252.0px;top:1056px" width="14" height="14" viewBox="0 0 14 14" ><polygon points="1.0,4.0 13.0,4.0 7.0,10.0" fill="#000"/></svg>
<div style="left:2292px;top:929px;width:121px;height:107px;border:2px solid #a0a0a0;box-shadow:2px 2px 0 #fff,inset 2px 2px 0 #fff;"></div>
<div style="left:2304px;top:918px;width:47px;height:24px;background:#f0f0f0;"></div>
<span id="t92" class="t" style="left:2308px;top:917.6px;font-size:24px;color:#000;transform:scaleX(0.8595);">Line</span>
<div style="left:2307px;top:946px;width:23px;height:22px;background:#fff;box-shadow:inset 2px 2px 0 #a0a0a0,inset -2px -2px 0 #fff,inset 4px 4px 0 #696969,inset -4px -4px 0 #e3e3e3;"></div>
<svg style="left:2307px;top:946px" width="23" height="22" viewBox="0 0 23 22" ><path d="M6.2 10.1 L10.1 14.5 L17.9 6.2" fill="none" stroke="#000" stroke-width="4.2" stroke-linejoin="miter"/></svg>
<span id="t93" class="t" style="left:2345px;top:942.9px;font-size:24px;color:#000;transform:scaleX(0.9483);">Axis</span>
<div style="left:2307px;top:974px;width:23px;height:22px;background:#fff;box-shadow:inset 2px 2px 0 #a0a0a0,inset -2px -2px 0 #fff,inset 4px 4px 0 #696969,inset -4px -4px 0 #e3e3e3;"></div>
<svg style="left:2307px;top:974px" width="23" height="22" viewBox="0 0 23 22" ><path d="M6.2 10.1 L10.1 14.5 L17.9 6.2" fill="none" stroke="#000" stroke-width="4.2" stroke-linejoin="miter"/></svg>
<span id="t94" class="t" style="left:2345px;top:972.6px;font-size:24px;color:#000;transform:scaleX(0.8678);">Data</span>
<div style="left:2307px;top:999px;width:92px;height:29px;background:#f0f0f0;box-shadow:inset 2px 2px 0 #fff,inset -2px -2px 0 #696969,inset -4px -4px 0 #a0a0a0,inset 4px 4px 0 #e3e3e3;"></div>
<span id="t95" class="t" style="left:2320px;top:999.3px;font-size:24px;color:#000;transform:scaleX(0.9445);">Hilight</span>
<div style="left:2291px;top:1044px;width:130px;height:56px;background:#f0f0f0;box-shadow:inset 2px 2px 0 #fff,inset -2px -2px 0 #696969,inset -4px -4px 0 #a0a0a0,inset 4px 4px 0 #e3e3e3;"></div>
<span id="t96" class="t" style="left:2300px;top:1057.4px;font-size:24px;color:#000;transform:scaleX(0.9370);">[3D] Image</span>
<div style="left:2419px;top:929px;width:112px;height:107px;border:2px solid #a0a0a0;box-shadow:2px 2px 0 #fff,inset 2px 2px 0 #fff;"></div>
<div style="left:2431px;top:918px;width:64px;height:24px;background:#f0f0f0;"></div>
<span id="t97" class="t" style="left:2435px;top:919.6px;font-size:24px;color:#000;transform:scaleX(0.9127);">Width</span>
<div style="left:2438px;top:954px;width:22px;height:22px;border-radius:50%;background:#fff;box-shadow:inset 2px 2px 0 #a0a0a0,inset -2px -2px 0 #fff,inset 3px 3px 1px #696969;"></div>
<div style="left:2445px;top:961px;width:8px;height:8px;border-radius:50%;background:#000;"></div>
<span id="t98" class="t" style="left:2472px;top:953.3px;font-size:24px;color:#000;transform:scaleX(0.8406);">Part</span>
<div style="left:2438px;top:996px;width:22px;height:22px;border-radius:50%;background:#fff;box-shadow:inset 2px 2px 0 #a0a0a0,inset -2px -2px 0 #fff,inset 3px 3px 1px #696969;"></div>
<span id="t99" class="t" style="left:2472px;top:995.1px;font-size:24px;color:#000;transform:scaleX(0.8453);">Entire</span>
<div style="left:2543px;top:925px;width:286px;height:34px;background:#f0f0f0;box-shadow:inset 2px 2px 0 #fff,inset -2px -2px 0 #696969,inset -4px -4px 0 #a0a0a0,inset 4px 4px 0 #e3e3e3;"></div>
<span id="t100" class="t" style="left:2556px;top:927.6px;font-size:24px;color:#000;transform:scaleX(0.9692);">Correction for absorption</span>
<div style="left:2543px;top:965px;width:206px;height:35px;background:#f0f0f0;box-shadow:inset 2px 2px 0 #fff,inset -2px -2px 0 #696969,inset -4px -4px 0 #a0a0a0,inset 4px 4px 0 #e3e3e3;"></div>
<span id="t101" class="t" style="left:2565px;top:969.6px;font-size:24px;color:#000;transform:scaleX(0.9369);">Noise Reduction</span>
<div style="left:2755px;top:965px;width:74px;height:35px;background:#f0f0f0;box-shadow:inset 2px 2px 0 #fff,inset -2px -2px 0 #696969,inset -4px -4px 0 #a0a0a0,inset 4px 4px 0 #e3e3e3;"></div>
<span id="t102" class="t" style="left:2763px;top:966.6px;font-size:24px;color:#000;transform:scaleX(0.8931);">Reset</span>
<div style="left:2539px;top:1007px;width:24px;height:24px;background:#fff;box-shadow:inset 2px 2px 0 #a0a0a0,inset -2px -2px 0 #fff,inset 4px 4px 0 #696969,inset -4px -4px 0 #e3e3e3;"></div>
<svg style="left:2539px;top:1007px" width="24" height="24" viewBox="0 0 24 24" ><path d="M6.5 11.0 L10.6 15.8 L18.7 6.7" fill="none" stroke="#000" stroke-width="4.2" stroke-linejoin="miter"/></svg>
<span id="t103" class="t" style="left:2576px;top:1005.3px;font-size:24px;color:#000;transform:scaleX(0.8662);">Information</span>
<div style="left:2855px;top:925px;width:105px;height:48px;background:#f0f0f0;box-shadow:inset 2px 2px 0 #fff,inset -2px -2px 0 #696969,inset -4px -4px 0 #a0a0a0,inset 4px 4px 0 #e3e3e3;"></div>
<span id="t104" class="t" style="left:2863px;top:934.6px;font-size:24px;color:#000;transform:scaleX(0.7139);">close</span>
<div style="left:2839px;top:1000px;width:24px;height:24px;background:#fff;box-shadow:inset 2px 2px 0 #a0a0a0,inset -2px -2px 0 #fff,inset 4px 4px 0 #696969,inset -4px -4px 0 #e3e3e3;"></div>
<svg style="left:2839px;top:1000px" width="24" height="24" viewBox="0 0 24 24" ><path d="M6.5 11.0 L10.6 15.8 L18.7 6.7" fill="none" stroke="#000" stroke-width="4.2" stroke-linejoin="miter"/></svg>
<span id="t105" class="t" style="left:2875px;top:998.6px;font-size:24px;color:#000;transform:scaleX(1.1241);">Inf</span>
<div style="left:2740px;top:1027px;width:160px;height:70px;border:2px solid #a0a0a0;box-shadow:2px 2px 0 #fff,inset 2px 2px 0 #fff;"></div>
<div style="left:2750px;top:1016px;width:74px;height:24px;background:#f0f0f0;"></div>
<span id="t106" class="t" style="left:2754px;top:1015.2px;font-size:24px;color:#000;transform:scaleX(0.9369);">Object</span>
<div style="left:2751px;top:1048px;width:39px;height:35px;background:repeating-conic-gradient(#fff 0 25%,#f0f0f0 0 50%) 0 0/4px 4px;box-shadow:inset 2px 2px 0 #a0a0a0,inset -2px -2px 0 #fff,inset 4px 4px 0 #696969;"></div>
<span id="t107" class="t" style="left:2764px;top:1052.6px;font-size:24px;color:#000;transform:scaleX(0.8741);">A</span>
<div style="left:2795px;top:1048px;width:39px;height:35px;background:repeating-conic-gradient(#fff 0 25%,#f0f0f0 0 50%) 0 0/4px 4px;box-shadow:inset 2px 2px 0 #a0a0a0,inset -2px -2px 0 #fff,inset 4px 4px 0 #696969;"></div>
<span id="t108" class="t" style="left:2808px;top:1052.6px;font-size:24px;color:#000;transform:scaleX(0.8741);">B</span>
<div style="left:2839px;top:1048px;width:39px;height:35px;background:repeating-conic-gradient(#fff 0 25%,#f0f0f0 0 50%) 0 0/4px 4px;box-shadow:inset 2px 2px 0 #a0a0a0,inset -2px -2px 0 #fff,inset 4px 4px 0 #696969;"></div>
<span id="t109" class="t" style="left:2852px;top:1052.6px;font-size:24px;color:#000;transform:scaleX(0.8072);">C</span>
<div style="left:1911px;top:1109px;width:242px;height:54px;background:#f0f0f0;box-shadow:inset 2px 2px 0 #fff,inset -2px -2px 0 #696969,inset -4px -4px 0 #a0a0a0,inset 4px 4px 0 #e3e3e3;"></div>
<span id="t110" class="t" style="left:1928px;top:1121.0px;font-size:27px;color:#000;font-weight:bold;transform:scaleX(0.8303);">Lunar Identification</span>
<div style="left:2171px;top:1109px;width:338px;height:54px;background:#f0f0f0;box-shadow:inset 2px 2px 0 #fff,inset -2px -2px 0 #696969,inset -4px -4px 0 #a0a0a0,inset 4px 4px 0 #e3e3e3;"></div>
<span id="t111" class="t" style="left:2206px;top:1121.0px;font-size:27px;color:#000;font-weight:bold;transform:scaleX(0.9686);letter-spacing:1px;">Diffraction Analysis</span>
<div style="left:2519px;top:1109px;width:210px;height:54px;background:#f0f0f0;box-shadow:inset 2px 2px 0 #fff,inset -2px -2px 0 #696969,inset -4px -4px 0 #a0a0a0,inset 4px 4px 0 #e3e3e3;"></div>
<span id="t112" class="t" style="left:2545px;top:1121.0px;font-size:27px;color:#000;font-weight:bold;transform:scaleX(0.9188);letter-spacing:1px;">Make Report</span>
<div style="left:1431px;top:1176px;width:1469px;height:2px;background:#a0a0a0;"></div>
<div style="left:1431px;top:1178px;width:1469px;height:2px;background:#fff;"></div>
<div style="left:1447px;top:1230px;width:1453px;height:182px;border:2px solid #a0a0a0;box-shadow:2px 2px 0 #fff,inset 2px 2px 0 #fff;"></div>
<div style="left:1458px;top:1220px;width:139px;height:24px;background:#f0f0f0;"></div>
<span id="t113" class="t" style="left:1463px;top:1219.0px;font-size:24px;color:#000;transform:scaleX(0.9947);">S/N vs Error</span>
<span id="t114" class="t" style="left:1464px;top:1256.5px;font-size:25px;color:#000;font-weight:bold;transform:scaleX(1.0169);letter-spacing:1.5px;">S/N (Full drop)</span>
<div style="left:1671px;top:1248px;width:113px;height:52px;background:#fff;box-shadow:inset 2px 2px 0 #a0a0a0,inset -2px -2px 0 #fff,inset 4px 4px 0 #696969,inset -4px -4px 0 #e3e3e3;"></div>
<span id="t115" class="t" style="left:1684px;top:1255.8px;font-size:32px;color:#0000ff;transform:scaleX(0.9891);-webkit-text-stroke:.7px currentColor;">4.6</span>
<span id="t116" class="t" style="left:1832px;top:1256.5px;font-size:25px;color:#000;font-weight:bold;transform:scaleX(1.0392);letter-spacing:1.5px;">S/N</span>
<div style="left:1895px;top:1246px;width:96px;height:54px;background:#fff;box-shadow:inset 2px 2px 0 #a0a0a0,inset -2px -2px 0 #fff,inset 4px 4px 0 #696969,inset -4px -4px 0 #e3e3e3;"></div>
<span id="t117" class="t" style="left:1904px;top:1255.8px;font-size:32px;color:#ff0000;transform:scaleX(0.9442);-webkit-text-stroke:.7px currentColor;">1.9</span>
<span id="t118" class="t" style="left:2008px;top:1256.5px;font-size:25px;color:#000;font-weight:bold;letter-spacing:1.5px;">expected on</span>
<div style="left:2183px;top:1246px;width:97px;height:54px;background:#fff;box-shadow:inset 2px 2px 0 #a0a0a0,inset -2px -2px 0 #fff,inset 4px 4px 0 #696969,inset -4px -4px 0 #e3e3e3;"></div>
<span id="t119" class="t" style="left:2190px;top:1255.8px;font-size:32px;color:#000;transform:scaleX(0.9891);-webkit-text-stroke:.7px currentColor;">0.6</span>
<span id="t120" class="t" style="left:2296px;top:1256.5px;font-size:25px;color:#000;font-weight:bold;transform:scaleX(0.9719);letter-spacing:1.5px;">Mag drop</span>
<span id="t121" class="t" style="left:2488px;top:1256.5px;font-size:25px;color:#000;font-weight:bold;transform:scaleX(0.9947);letter-spacing:1.5px;">Frame exposure</span>
<div style="left:2727px;top:1246px;width:96px;height:54px;background:#fff;box-shadow:inset 2px 2px 0 #a0a0a0,inset -2px -2px 0 #fff,inset 4px 4px 0 #696969,inset -4px -4px 0 #e3e3e3;"></div>
<span id="t122" class="t" style="left:2737px;top:1255.8px;font-size:32px;color:#000;transform:scaleX(0.9178);-webkit-text-stroke:.7px currentColor;">124</span>
<span id="t123" class="t" style="left:2840px;top:1256.5px;font-size:25px;color:#000;font-weight:bold;transform:scaleX(0.9721);letter-spacing:1.5px;">msec</span>
<span id="t124" class="t" style="left:1464px;top:1320.2px;font-size:25px;color:#000;font-weight:bold;transform:scaleX(0.9956);letter-spacing:1.5px;">Fresnel</span>
<span id="t125" class="t" style="left:1464px;top:1351.3px;font-size:25px;color:#000;font-weight:bold;transform:scaleX(0.9761);letter-spacing:1.5px;">Number</span>
<div style="left:1574px;top:1326px;width:98px;height:54px;background:#fff;box-shadow:inset 2px 2px 0 #a0a0a0,inset -2px -2px 0 #fff,inset 4px 4px 0 #696969,inset -4px -4px 0 #e3e3e3;"></div>
<span id="t126" class="t" style="left:1584px;top:1336.3px;font-size:32px;color:#000;transform:scaleX(0.9889);-webkit-text-stroke:.7px currentColor;">18599</span>
<div style="left:1668px;top:1330px;width:4px;height:46px;background:#fff;box-shadow:inset -2px 0 0 #fff,inset -4px 0 0 #e3e3e3;"></div>
<span id="t127" class="t" style="left:1704px;top:1320.2px;font-size:25px;color:#000;font-weight:bold;transform:scaleX(0.9758);letter-spacing:1.5px;">Lower Limit</span>
<span id="t128" class="t" style="left:1720px;top:1351.3px;font-size:25px;color:#000;font-weight:bold;transform:scaleX(1.0085);letter-spacing:1.5px;">for detect</span>
<div style="left:1863px;top:1326px;width:113px;height:54px;background:#fff;box-shadow:inset 2px 2px 0 #a0a0a0,inset -2px -2px 0 #fff,inset 4px 4px 0 #696969,inset -4px -4px 0 #e3e3e3;"></div>
<span id="t129" class="t" style="left:1870px;top:1336.3px;font-size:32px;color:#0000ff;transform:scaleX(0.9833);-webkit-text-stroke:.7px currentColor;">5822</span>
<span id="t130" class="t" style="left:1977px;top:1336.3px;font-size:25px;color:#000;font-weight:bold;transform:scaleX(0.9721);letter-spacing:1.5px;">msec</span>
<span id="t131" class="t" style="left:2072px;top:1320.2px;font-size:25px;color:#000;font-weight:bold;transform:scaleX(0.9887);letter-spacing:1.5px;">Predicted</span>
<span id="t132" class="t" style="left:2073px;top:1351.3px;font-size:25px;color:#000;font-weight:bold;transform:scaleX(0.9505);letter-spacing:1.5px;">Time Error</span>
<div style="left:2215px;top:1326px;width:129px;height:54px;background:#fff;box-shadow:inset 2px 2px 0 #a0a0a0,inset -2px -2px 0 #fff,inset 4px 4px 0 #696969,inset -4px -4px 0 #e3e3e3;"></div>
<span id="t133" class="t" style="left:2222px;top:1336.3px;font-size:32px;color:#ff0000;transform:scaleX(0.9740);-webkit-text-stroke:.7px currentColor;">627</span>
<span id="t134" class="t" style="left:2345px;top:1350.8px;font-size:25px;color:#000;font-weight:bold;transform:scaleX(0.9721);letter-spacing:1.5px;">msec</span>
<span id="t135" class="t" style="left:2440px;top:1320.2px;font-size:25px;color:#000;font-weight:bold;letter-spacing:1.5px;">Expected Error for</span>
<span id="t136" class="t" style="left:2440px;top:1351.3px;font-size:25px;color:#000;font-weight:bold;transform:scaleX(1.0119);letter-spacing:1.5px;">Analyzing event time</span>
<div style="left:2727px;top:1326px;width:96px;height:54px;background:#fff;box-shadow:inset 2px 2px 0 #a0a0a0,inset -2px -2px 0 #fff,inset 4px 4px 0 #696969,inset -4px -4px 0 #e3e3e3;"></div>
<span id="t137" class="t" style="left:2737px;top:1336.3px;font-size:32px;color:#000;transform:scaleX(0.9178);-webkit-text-stroke:.7px currentColor;">169</span>
<span id="t138" class="t" style="left:2834px;top:1351.3px;font-size:25px;color:#000;font-weight:bold;transform:scaleX(0.9721);letter-spacing:1.5px;">msec</span>
<div style="left:1445px;top:1427px;width:1433px;height:2px;background:#b8b8b8;"></div>
<div style="left:2540px;top:1427px;width:338px;height:2px;background:#4a4030;"></div>
</body></html>
